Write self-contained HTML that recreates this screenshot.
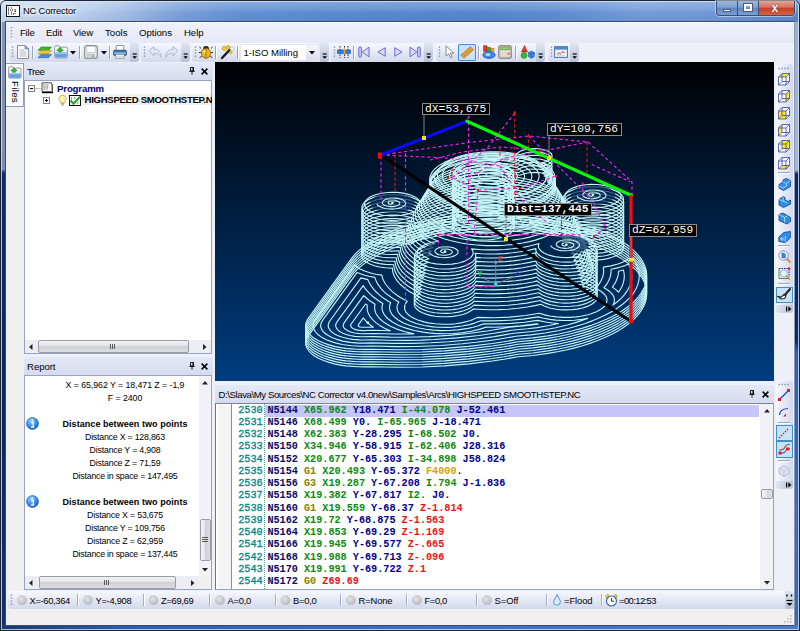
<!DOCTYPE html>
<html><head><meta charset="utf-8"><title>NC Corrector</title>
<style>
*{margin:0;padding:0;box-sizing:border-box}
html,body{width:800px;height:631px;overflow:hidden;background:#27477f}
body{position:relative;font-family:"Liberation Sans",sans-serif;font-size:9.4px;color:#000}
.abs{position:absolute}
.t{position:absolute;white-space:nowrap;display:block}
svg{position:absolute;overflow:visible}
.tb{position:absolute;top:43px;height:19px;border-radius:3px;background:linear-gradient(#f6f8fd 0%,#e6eaf6 45%,#d3d9ec 100%);}
.ov{position:absolute;top:43px;height:19px;width:9px;border-radius:0 3px 3px 0;background:linear-gradient(#dfe4f1,#b9c1d8)}
.sep{position:absolute;top:46px;width:1px;height:13px;background:#9aa3bd;box-shadow:1px 0 0 #fff}
.lbl{background:#000;border:1px solid #8c8c8c;color:#fff;font-family:"Liberation Mono",monospace;font-size:11.3px;line-height:10.5px;padding-left:2px;white-space:nowrap;overflow:hidden;letter-spacing:0.02px}
.code{font-family:"Liberation Mono",monospace;font-weight:bold;font-size:10.2px}
</style></head><body>
<div class="abs" id="frame" style="left:0;top:0;width:800px;height:631px;background:linear-gradient(90deg,#c9daf0 0px,#c1d4ee 70px,#a3bde5 125px,#7a9fda 180px,#6290d4 240px,#5a8ad1 330px,#5686cf 480px,#5f8dd2 560px,#739bd9 640px,#6f98d7 720px,#5a86c8 800px);"></div>
<div class="abs" style="left:0px;top:0px;width:800px;height:22px;background:linear-gradient(rgba(255,255,255,.28) 0,rgba(255,255,255,.10) 45%,rgba(255,255,255,0) 55%,rgba(20,40,90,.06) 100%)"></div><div class="abs" style="left:0px;top:22px;width:6px;height:609px;background:linear-gradient(#7f95bc 0,#7a90b8 147px,#0e2a68 151px,#0b2562 400px,#123170 603px)"></div><div class="abs" style="left:794px;top:22px;width:6px;height:609px;background:linear-gradient(#9fb0cc 0,#a9b7ce 148px,#0c2666 152px,#0c2868 318px,#2f5fb2 330px,#3a6abc 500px,#3566b8 603px)"></div><div class="abs" style="left:0px;top:625px;width:800px;height:6px;background:linear-gradient(90deg,#17376f,#2a5cb0 120px,#3c6cc0 400px,#4a7acc 800px)"></div><div class="abs" style="left:0px;top:0px;width:800px;height:631px;border:1px solid #1d2534;border-radius:6px 6px 0 0"></div><div class="abs" style="left:1px;top:1px;width:798px;height:629px;border:1px solid rgba(214,230,250,.8);border-radius:5px 5px 0 0"></div><div class="abs" style="left:5px;top:21px;width:789.5px;height:604.5px;border:1px solid #3a4a6a;border-right-color:#8a9ab4;background:#f0f0f0"></div><div class="abs" style="left:6px;top:22px;width:787.5px;height:1px;background:#fbfcfe"></div>
<div class="abs" style="left:6px;top:5px;width:14px;height:12px;background:#fff;border:1px solid #111"></div><svg style="left:6px;top:5px" width="14" height="12" viewBox="0 0 14 12"><path d="M2 3h2M5 3h2M2 5h1M4 5h3M2 7h2M5 7h1M2 9h2M5 9h3M9 4v5M9 6h2" stroke="#000" stroke-width="1" fill="none" stroke-dasharray="1 1"/></svg><span class="t" style="left:23.00px;top:5.36px;font-size:9.4px;line-height:11.28px;height:11.28px;color:#000;letter-spacing:-0.197px;text-shadow:0 0 5px #fff,0 0 8px #fff,0 0 3px #fff;">NC Corrector</span><div class="abs" style="left:716px;top:1px;width:79px;height:15px;border:1px solid #3a4f78;border-top:none;border-radius:0 0 4px 4px;background:linear-gradient(#9db7de 0,#7e9fd2 45%,#5f86c4 50%,#7c9ed4 100%);box-shadow:0 0 0 1px rgba(255,255,255,.45)"></div><div class="abs" style="left:737px;top:1px;width:1px;height:14px;background:#3a4f78"></div><div class="abs" style="left:758px;top:1px;width:1px;height:14px;background:#3a4f78"></div><div class="abs" style="left:759px;top:1px;width:35px;height:14px;border-radius:0 0 3px 0;background:linear-gradient(#e2a497 0,#d5705c 45%,#c2402a 50%,#d6623f 100%)"></div><div class="abs" style="left:723px;top:9px;width:8px;height:3px;background:#fff;border:1px solid #4a5a78"></div><div class="abs" style="left:744px;top:4px;width:8px;height:7px;background:transparent;border:2px solid #fff;outline:1px solid #4a5a78"></div><span class="t" style="left:771.50px;top:0.80px;font-size:12px;line-height:14.40px;height:14.40px;color:#fff;font-weight:bold;letter-spacing:2.326px;text-shadow:0 0 1px #433,0 0 1px #433;">x</span>
<div class="abs" style="left:6px;top:23px;width:788px;height:20px;background:linear-gradient(#eef0fa,#e6e9f6)"></div><svg style="left:10px;top:26px" width="3" height="14"><path d="M1.5 1v12" stroke="#8a93ad" stroke-width="1.4" stroke-dasharray="1.3 1.7"/></svg><span class="t" style="left:20.00px;top:27.04px;font-size:9.6px;line-height:11.52px;height:11.52px;color:#000;letter-spacing:-0.242px;">File</span><span class="t" style="left:46.00px;top:27.04px;font-size:9.6px;line-height:11.52px;height:11.52px;color:#000;letter-spacing:-0.136px;">Edit</span><span class="t" style="left:73.00px;top:27.04px;font-size:9.6px;line-height:11.52px;height:11.52px;color:#000;letter-spacing:-0.159px;">View</span><span class="t" style="left:105.00px;top:27.04px;font-size:9.6px;line-height:11.52px;height:11.52px;color:#000;letter-spacing:0.018px;">Tools</span><span class="t" style="left:139.00px;top:27.04px;font-size:9.6px;line-height:11.52px;height:11.52px;color:#000;letter-spacing:-0.012px;">Options</span><span class="t" style="left:184.00px;top:27.04px;font-size:9.6px;line-height:11.52px;height:11.52px;color:#000;letter-spacing:-0.061px;">Help</span>
<div class="abs" style="left:6px;top:43px;width:788px;height:20px;background:linear-gradient(#eef0fa,#eceef8)"></div><div class="tb" style="left:9px;width:130px"></div><div class="ov" style="left:130px"></div><svg style="left:132px;top:53px" width="6" height="8"><path d="M.6 1h4.200" stroke="#000" stroke-width="1.100"/><path d="M.4 3.200h4.600l-2.300 2.600z" fill="#000"/></svg><svg style="left:11px;top:46px" width="3" height="13"><path d="M1.5 0.5v12" stroke="#7f89a6" stroke-width="1.4" stroke-dasharray="1.3 1.7"/></svg><div class="tb" style="left:141px;width:49px"></div><div class="ov" style="left:181px"></div><svg style="left:183px;top:53px" width="6" height="8"><path d="M.6 1h4.200" stroke="#000" stroke-width="1.100"/><path d="M.4 3.200h4.600l-2.300 2.600z" fill="#000"/></svg><svg style="left:143px;top:46px" width="3" height="13"><path d="M1.5 0.5v12" stroke="#7f89a6" stroke-width="1.4" stroke-dasharray="1.3 1.7"/></svg><div class="tb" style="left:192px;width:137px"></div><div class="ov" style="left:320px"></div><svg style="left:322px;top:53px" width="6" height="8"><path d="M.6 1h4.200" stroke="#000" stroke-width="1.100"/><path d="M.4 3.200h4.600l-2.300 2.600z" fill="#000"/></svg><svg style="left:194px;top:46px" width="3" height="13"><path d="M1.5 0.5v12" stroke="#7f89a6" stroke-width="1.4" stroke-dasharray="1.3 1.7"/></svg><div class="tb" style="left:331px;width:102px"></div><div class="ov" style="left:424px"></div><svg style="left:426px;top:53px" width="6" height="8"><path d="M.6 1h4.200" stroke="#000" stroke-width="1.100"/><path d="M.4 3.200h4.600l-2.300 2.600z" fill="#000"/></svg><svg style="left:333px;top:46px" width="3" height="13"><path d="M1.5 0.5v12" stroke="#7f89a6" stroke-width="1.4" stroke-dasharray="1.3 1.7"/></svg><div class="tb" style="left:436px;width:109px"></div><div class="ov" style="left:536px"></div><svg style="left:538px;top:53px" width="6" height="8"><path d="M.6 1h4.200" stroke="#000" stroke-width="1.100"/><path d="M.4 3.200h4.600l-2.300 2.600z" fill="#000"/></svg><svg style="left:438px;top:46px" width="3" height="13"><path d="M1.5 0.5v12" stroke="#7f89a6" stroke-width="1.4" stroke-dasharray="1.3 1.7"/></svg><div class="tb" style="left:548px;width:31px"></div><div class="ov" style="left:570px"></div><svg style="left:572px;top:53px" width="6" height="8"><path d="M.6 1h4.200" stroke="#000" stroke-width="1.100"/><path d="M.4 3.200h4.600l-2.300 2.600z" fill="#000"/></svg><svg style="left:550px;top:46px" width="3" height="13"><path d="M1.5 0.5v12" stroke="#7f89a6" stroke-width="1.4" stroke-dasharray="1.3 1.7"/></svg><div class="sep" style="left:32px"></div><div class="sep" style="left:79px"></div><div class="sep" style="left:109px"></div><div class="sep" style="left:215px"></div><div class="sep" style="left:237px"></div><div class="sep" style="left:353px"></div><div class="sep" style="left:478px"></div><div class="sep" style="left:515px"></div><!-- toolbar icons -->
<svg style="left:17px;top:45px" width="12" height="14" viewBox="0 0 12 14"><path d="M0.5 0.5h7.5l3.5 3.5v9.5h-11z" fill="#fdfdfd" stroke="#8a8e96"/><path d="M8 0.5l3.5 3.5h-3.5z" fill="#6fa8e8" stroke="#4a7fc4" stroke-width=".6"/><path d="M2.5 5h5M2.5 7h7M2.5 9h7M2.5 11h7" stroke="#b4b7be" stroke-width="1"/></svg>
<svg style="left:38px;top:46px" width="14" height="13" viewBox="0 0 14 13"><path d="M3 1h10.5l-3 3.4h-10.5z" fill="#3fb52f" stroke="#1f8a1a" stroke-width=".6"/><path d="M3 4.6h10.5l-3 3.4h-10.5z" fill="#f2c430" stroke="#c78a12" stroke-width=".6"/><path d="M3 8.4h10.5l-3 3.4h-10.5z" fill="#3d8fe6" stroke="#1c5fb8" stroke-width=".6"/></svg>
<svg style="left:54px;top:45px" width="14" height="14" viewBox="0 0 14 14"><path d="M0.6 2.2q0-1.4 1.4-1.4h3.2l1.2 1.4h6q1 0 1 1v8.6q0 1.2-1.2 1.2h-10.4q-1.2 0-1.2-1.2z" fill="#f4f5f7" stroke="#8f949c" stroke-width=".9"/><path d="M1.2 7.5h11.6v4.3q0 .8-.8.8h-10q-.8 0-.8-.8z" fill="#5f9fe2"/><path d="M1.2 7.5h11.6v1.6h-11.6z" fill="#9cc6f2"/><path d="M6 2.2l3.4 3.2h-1.9v1.6h-3v-1.6h-1.9z" fill="#35b52a" stroke="#1a8a18" stroke-width=".5"/></svg>
<svg style="left:70px;top:51px" width="6" height="4"><path d="M0 0h6l-3 3.4z" fill="#000"/></svg>
<svg style="left:84px;top:45px" width="14" height="14" viewBox="0 0 14 14"><rect x=".7" y=".7" width="12.6" height="12.6" rx="2" fill="#e9eaec" stroke="#8e9096" stroke-width="1.2"/><rect x="2.8" y="1.5" width="8.4" height="6" fill="#fbfbfc" stroke="#b9bbc0" stroke-width=".6"/><rect x="3.6" y="9.4" width="6.8" height="3.6" fill="#d2d3d7" stroke="#a7a9ae" stroke-width=".5"/><rect x="8" y="10.2" width="1.4" height="2.2" fill="#8e9096"/></svg>
<svg style="left:101px;top:51px" width="6" height="4"><path d="M0 0h6l-3 3.4z" fill="#000"/></svg>
<svg style="left:113px;top:45px" width="14" height="14" viewBox="0 0 14 14"><rect x="3.2" y=".6" width="7.6" height="5.4" fill="#fff" stroke="#7e838c" stroke-width=".8"/><rect x=".6" y="5.2" width="12.8" height="5.4" rx="1.4" fill="#4a6fae" stroke="#2b4676" stroke-width=".8"/><rect x="1.2" y="7.4" width="11.6" height="1.5" fill="#7fd0f4"/><rect x="2.8" y="9.2" width="8.4" height="4" fill="#fdfdfd" stroke="#7e838c" stroke-width=".8"/><path d="M4 11.2h6" stroke="#b5b8be" stroke-width=".8"/></svg>
<!-- undo / redo (disabled) -->
<svg style="left:148px;top:46px" width="14" height="12" viewBox="0 0 14 12"><path d="M1 4.6l5-4v2.6q6.6.2 7.2 8q-2.2-4-7.2-3.8v2.6z" fill="#e4e8f2" stroke="#a9b1c8" stroke-width=".9" stroke-linejoin="round"/></svg>
<svg style="left:165px;top:46px" width="14" height="12" viewBox="0 0 14 12"><path d="M13 4.6l-5-4v2.6q-6.600.2-7.200 8q2.200-4 7.200-3.800v2.600z" fill="#e4e8f2" stroke="#a9b1c8" stroke-width=".9" stroke-linejoin="round"/></svg>
<!-- bug -->
<svg style="left:199px;top:45px" width="14" height="14" viewBox="0 0 14 14"><path d="M2.200 3.500l-1.800-1.600M11.800 3.500l1.800-1.600M1.800 7.500h-1.800M12.200 7.500h1.800M2.600 11l-1.800 1.800M11.400 11l1.800 1.800" stroke="#222" stroke-width="1"/><ellipse cx="7" cy="3.300" rx="2.800" ry="2.300" fill="#2a2418"/><ellipse cx="7" cy="8.300" rx="4.600" ry="5" fill="#f0b818" stroke="#7a5608" stroke-width=".8"/><ellipse cx="5.600" cy="6.600" rx="1.700" ry="1.600" fill="#fbe58a"/><path d="M7 3.600v9.600" stroke="#7a5608" stroke-width=".7"/></svg>
<!-- keys/wand -->
<svg style="left:220px;top:45px" width="15" height="14" viewBox="0 0 15 14"><path d="M2 13l7.500-8" stroke="#1a1a1a" stroke-width="2.400" stroke-linecap="round"/><circle cx="4.400" cy="3.400" r="2.200" fill="#f6d21c" stroke="#b58c08" stroke-width=".6"/><circle cx="8.300" cy="2.300" r="1.700" fill="#f6d21c" stroke="#b58c08" stroke-width=".6"/><circle cx="12" cy="3.800" r="1.900" fill="#fbfbfb" stroke="#9a9a9a" stroke-width=".6"/><circle cx="10.800" cy="7.600" r="1.400" fill="#f6d21c" stroke="#b58c08" stroke-width=".5"/></svg>
<!-- combobox -->
<div class="abs" style="left:240px;top:44px;width:80px;height:17px;background:#fff;border:1px solid #e3e6f0;"></div>
<div class="abs" style="left:306px;top:45px;width:13px;height:15px;background:linear-gradient(#f4f6fc,#d9deee);"></div>
<svg style="left:309px;top:51px" width="6" height="4"><path d="M0 0h6l-3 3.400z" fill="#000"/></svg>
<!-- simulate icon -->
<svg style="left:337px;top:45px" width="14" height="14" viewBox="0 0 14 14"><path d="M3 1v12M7.500 1v12M11 1v12" stroke="#222" stroke-width="1" stroke-dasharray="1.500 1.300"/><rect x=".5" y="5" width="13" height="3.400" fill="#2c7fe0" stroke="#134a9a" stroke-width=".6"/><rect x="6.600" y="4" width="1.800" height="5.400" fill="#f4a018"/></svg>
<!-- nav arrows -->
<svg style="left:358px;top:46px" width="12" height="12" viewBox="0 0 12 12"><rect x=".8" y="1" width="2.600" height="10" rx="1" fill="#cfd0fb" stroke="#5b5bd8" stroke-width=".9"/><path d="M11 1.200v9.600l-6.800-4.800z" fill="#dcdcfc" stroke="#5b5bd8" stroke-width=".9" stroke-linejoin="round"/></svg>
<svg style="left:377px;top:47px" width="9" height="10" viewBox="0 0 9 10"><path d="M8.200 .8v8.400l-7.200-4.200z" fill="#dcdcfc" stroke="#5b5bd8" stroke-width=".9" stroke-linejoin="round"/></svg>
<svg style="left:394px;top:47px" width="9" height="10" viewBox="0 0 9 10"><path d="M.8 .8v8.400l7.200-4.200z" fill="#dcdcfc" stroke="#5b5bd8" stroke-width=".9" stroke-linejoin="round"/></svg>
<svg style="left:409px;top:46px" width="12" height="12" viewBox="0 0 12 12"><rect x="8.600" y="1" width="2.600" height="10" rx="1" fill="#cfd0fb" stroke="#5b5bd8" stroke-width=".9"/><path d="M1 1.200v9.600l6.800-4.800z" fill="#dcdcfc" stroke="#5b5bd8" stroke-width=".9" stroke-linejoin="round"/></svg>
<!-- cursor -->
<svg style="left:445px;top:45px" width="10" height="14" viewBox="0 0 10 14"><path d="M1 .8v10.400l2.600-2.400l1.900 4l1.700-.8l-1.900-3.900h3.500z" fill="#fdfdfd" stroke="#7d7d7d" stroke-width=".9" stroke-linejoin="round"/></svg>
<!-- ruler (selected) -->
<div class="abs" style="left:458px;top:44px;width:18px;height:17px;background:#c9e2f8;border:1px solid #3f8fd8;border-radius:1px"></div>
<svg style="left:460px;top:46px" width="14" height="13" viewBox="0 0 14 13"><path d="M.8 9.200l9.600-8.400l3 3l-9.600 8.400z" fill="#e9a93a" stroke="#a56a12" stroke-width=".8"/><path d="M3.400 8.600l1.300 1.300M5.400 6.900l1.300 1.300M7.400 5.200l1.300 1.300M9.400 3.500l1.300 1.300" stroke="#7d4c08" stroke-width=".7"/></svg>
<!-- machine icon -->
<svg style="left:482px;top:45px" width="14" height="14" viewBox="0 0 14 14"><rect x="1.600" y=".8" width="3.400" height="5.600" fill="#d83a2a" stroke="#8a1a10" stroke-width=".5"/><rect x="5.600" y="2.400" width="3" height="4" fill="#3aa32e" stroke="#1c6a18" stroke-width=".5"/><rect x="9" y="3.400" width="3" height="3" fill="#f0b020" stroke="#9a6a08" stroke-width=".5"/><ellipse cx="7" cy="10" rx="6.200" ry="3.400" fill="#3b8be4" stroke="#174f9e" stroke-width=".7"/><ellipse cx="6" cy="9.600" rx="2.600" ry="1.300" fill="#bfe0fb"/></svg>
<!-- calculator -->
<svg style="left:498px;top:45px" width="14" height="14" viewBox="0 0 14 14"><rect x=".7" y=".7" width="12.600" height="12.600" rx="1.200" fill="#c9c2b8" stroke="#7c756a" stroke-width=".9"/><rect x="2.200" y="2" width="9.600" height="2.600" fill="#8ed06a" stroke="#4e8a34" stroke-width=".4"/><path d="M2.500 6.500h9M2.500 8.700h9M2.500 10.900h9" stroke="#f6f3ee" stroke-width="1.400" stroke-dasharray="1.800 .7"/><path d="M9.700 8.700h1.800" stroke="#d8402c" stroke-width="1.400"/></svg>
<!-- shapes -->
<svg style="left:520px;top:45px" width="15" height="14" viewBox="0 0 15 14"><path d="M4.500 .6l3 6.400h-6z" fill="#e23a22" stroke="#8a1a10" stroke-width=".5"/><circle cx="4" cy="10.400" r="3" fill="#3cb52c" stroke="#1a7a16" stroke-width=".5"/><path d="M8.400 7.600l3-1.400l3 1.400v4l-3 1.600l-3-1.600z" fill="#3b8be4" stroke="#174f9e" stroke-width=".6"/><path d="M8.400 7.600l3 1.400l3-1.400M11.400 9v4.200" stroke="#174f9e" stroke-width=".5" fill="none"/></svg>
<!-- window icon -->
<svg style="left:554px;top:46px" width="14" height="12" viewBox="0 0 14 12"><rect x=".6" y=".6" width="12.800" height="10.800" fill="#eef3fa" stroke="#4a74ae" stroke-width="1"/><rect x="1" y="1" width="12" height="2.600" fill="#4a8ad8"/><path d="M3 8.400l2-1.600l1.400 1l2.400-2.200l2 1.200" stroke="#d83a2a" stroke-width="1" fill="none"/><path d="M3 9.800h8" stroke="#9ab0cc" stroke-width=".6"/></svg>
<span class="t" style="left:243.50px;top:46.54px;font-size:9.6px;line-height:11.52px;height:11.52px;color:#000;letter-spacing:-0.035px;">1-ISO Milling</span>
<div class="abs" style="left:24px;top:63px;width:769.5px;height:528px;background:#edeff9"></div><!-- left dock -->
<div class="abs" style="left:6px;top:63px;width:18px;height:44px;background:#fbfcfe;border:1px solid #8e9bbc;border-left:none;border-radius:0 0 0 0"></div>
<div class="abs" style="left:6px;top:107px;width:18px;height:247px;background:#f0f0f0"></div>
<svg style="left:8px;top:66px" width="14" height="13" viewBox="0 0 14 13"><path d="M.6 2q0-1.300 1.300-1.300h3l1.200 1.300h6q1 0 1 1v8q0 1.200-1.200 1.200h-10.100q-1.200 0-1.200-1.200z" fill="#f4f5f7" stroke="#8f949c" stroke-width=".9"/><path d="M1.200 7h11.600v4q0 .8-.8.800h-10q-.8 0-.8-.8z" fill="#5f9fe2"/><path d="M1.200 7h11.600v1.500h-11.600z" fill="#9cc6f2"/><path d="M6 1.800l3.300 3h-1.800v1.500h-3v-1.500h-1.800z" fill="#35b52a" stroke="#1a8a18" stroke-width=".5"/></svg>
<span class="t" style="left:10px;top:81px;font-size:9.6px;line-height:11px;width:11px;writing-mode:vertical-rl;letter-spacing:0.35px">Files</span>
<div class="abs" style="left:24px;top:63px;width:189px;height:291px;background:#eceef8"></div>
<div class="abs" style="left:24px;top:63px;width:189px;height:17px;background:linear-gradient(#e4e8f6,#d6dbef)"></div>
<span class="t" style="left:27.00px;top:65.74px;font-size:9.6px;line-height:11.52px;height:11.52px;color:#000;letter-spacing:-0.471px;">Tree</span>
<svg style="left:189px;top:67px" width="6" height="8" viewBox="0 0 6 8"><path d="M1.500 .5h3v3.500h-3zM.3 4.300h5.400M3 4.300v3.400M4 .5v3.500" stroke="#000" stroke-width=".9" fill="none"/></svg>
<svg style="left:201px;top:68px" width="7" height="7" viewBox="0 0 7 7"><path d="M.6 .6l5.800 5.800M6.400 .6l-5.800 5.800" stroke="#000" stroke-width="1.500"/></svg>
<div class="abs" style="left:24px;top:80px;width:188px;height:274px;background:#fff;border:1px solid #98a3bf"></div>
<div class="abs" style="left:82px;top:94px;width:129px;height:11px;background:#f0f0f0"></div>
<svg style="left:28px;top:82px" width="60" height="26" viewBox="0 0 60 26"><path d="M7.500 6.500h5M19 19.500h4" stroke="#808080" stroke-width="1" stroke-dasharray="1 1"/><rect x=".5" y="3.500" width="6" height="6" fill="#fff" stroke="#848484"/><path d="M2 6.500h3" stroke="#000"/><rect x="15.500" y="15.500" width="6" height="6" fill="#fff" stroke="#848484"/><path d="M17 18.500h3M18.500 17v3" stroke="#000"/><path d="M14 .8h9.500v9h-9.500z" fill="#fff" stroke="#222" stroke-width=".8"/><path d="M23.500 1.500q1.800 .6 1.200 3.500l-.6 5.500h-1" fill="#ddd" stroke="#222" stroke-width=".8"/><path d="M14 10.500h11" stroke="#000" stroke-width="1.400"/><path d="M15.500 3h2M18.500 3h2M15.500 5h1M17.500 5h3M15.500 7h2M18.500 7h1" stroke="#000" stroke-width=".9" stroke-dasharray="1 .8"/><path d="M34.500 13.300c2.200 0 3.600 1.600 3.600 3.500c0 1.700-1.500 2.500-1.700 4.200h-3.800c-.2-1.700-1.700-2.500-1.700-4.200c0-1.900 1.400-3.500 3.600-3.500z" fill="#fdf3a8" stroke="#b89a2a" stroke-width=".7"/><path d="M33 21.800h3M33.300 23h2.400" stroke="#8a8a8a" stroke-width=".9"/><rect x="41.500" y="13.500" width="11" height="10" fill="#fff" stroke="#111" stroke-width="1"/><path d="M43 16h2M46 16h2M43 18h1M49 21h2" stroke="#000" stroke-width=".8" stroke-dasharray="1 .8"/><path d="M42.500 18.500l3 3.200l6.500-7" stroke="#1fae1f" stroke-width="2.200" fill="none"/></svg>
<span class="t" style="left:57.00px;top:82.54px;font-size:9.6px;line-height:11.52px;height:11.52px;color:#00007c;font-weight:bold;letter-spacing:-0.127px;">Programm</span>
<div class="abs" style="left:82px;top:94px;width:129.500px;height:12px;overflow:hidden"><span class="t" style="left:2.60px;top:0.24px;font-size:9.6px;line-height:11.52px;height:11.52px;color:#000;font-weight:bold;letter-spacing:-0.314px;">HIGHSPEED SMOOTHSTEP.NC</span></div>
<div class="abs" style="left:25px;top:340px;width:186px;height:13px;background:#eceef4"></div>
<div class="abs" style="left:38px;top:340px;width:151px;height:13px;background:linear-gradient(#f3f3f5 0,#e3e4e8 45%,#cfd1d7 50%,#dcdde2 100%);border:1px solid #9a9ca4;border-radius:2px"></div>
<svg style="left:110px;top:344px" width="6" height="5"><path d="M.5 0v5M2.500 0v5M4.500 0v5" stroke="#4a4a4a" stroke-width=".9" shape-rendering="crispEdges"/></svg>
<svg style="left:29px;top:343.5px" width="4" height="6"><path d="M3.500 0v6l-3.500-3z" fill="#222"/></svg>
<svg style="left:203px;top:343.5px" width="4" height="6"><path d="M0 0v6l3.500-3z" fill="#222"/></svg>
<div class="abs" style="left:24px;top:357px;width:189px;height:233px;background:#eceef8"></div>
<div class="abs" style="left:24px;top:357px;width:189px;height:18px;background:linear-gradient(#e4e8f6,#d6dbef)"></div>
<span class="t" style="left:27.00px;top:360.74px;font-size:9.6px;line-height:11.52px;height:11.52px;color:#000;letter-spacing:-0.052px;">Report</span>
<svg style="left:189px;top:362px" width="6" height="8" viewBox="0 0 6 8"><path d="M1.500 .5h3v3.500h-3zM.3 4.300h5.400M3 4.300v3.400M4 .5v3.500" stroke="#000" stroke-width=".9" fill="none"/></svg>
<svg style="left:201px;top:363px" width="7" height="7" viewBox="0 0 7 7"><path d="M.6 .6l5.800 5.800M6.400 .6l-5.800 5.800" stroke="#000" stroke-width="1.500"/></svg>
<div class="abs" style="left:24px;top:375px;width:188px;height:215px;background:#fff;border:1px solid #98a3bf"></div>
<span class="t" style="left:65.50px;top:380.02px;font-size:8.8px;line-height:10.56px;height:10.56px;color:#000;letter-spacing:-0.059px;">X = 65,962 Y = 18,471 Z = -1,9</span>
<span class="t" style="left:107.75px;top:393.02px;font-size:8.8px;line-height:10.56px;height:10.56px;color:#000;letter-spacing:-0.060px;">F = 2400</span>
<span class="t" style="left:62.50px;top:418.60px;font-size:9.0px;line-height:10.80px;height:10.80px;color:#000;font-weight:bold;letter-spacing:0.055px;">Distance between two points</span>
<span class="t" style="left:85.00px;top:432.02px;font-size:8.8px;line-height:10.56px;height:10.56px;color:#000;letter-spacing:-0.220px;">Distance X = 128,863</span>
<span class="t" style="left:89.50px;top:445.02px;font-size:8.8px;line-height:10.56px;height:10.56px;color:#000;letter-spacing:-0.183px;">Distance Y = 4,908</span>
<span class="t" style="left:89.50px;top:458.02px;font-size:8.8px;line-height:10.56px;height:10.56px;color:#000;letter-spacing:-0.173px;">Distance Z = 71,59</span>
<span class="t" style="left:72.50px;top:471.12px;font-size:8.8px;line-height:10.56px;height:10.56px;color:#000;letter-spacing:-0.233px;">Distance in space = 147,495</span>
<span class="t" style="left:62.50px;top:496.60px;font-size:9.0px;line-height:10.80px;height:10.80px;color:#000;font-weight:bold;letter-spacing:0.055px;">Distance between two points</span>
<span class="t" style="left:87.00px;top:509.92px;font-size:8.8px;line-height:10.56px;height:10.56px;color:#000;letter-spacing:-0.184px;">Distance X = 53,675</span>
<span class="t" style="left:85.00px;top:522.92px;font-size:8.8px;line-height:10.56px;height:10.56px;color:#000;letter-spacing:-0.204px;">Distance Y = 109,756</span>
<span class="t" style="left:87.00px;top:535.92px;font-size:8.8px;line-height:10.56px;height:10.56px;color:#000;letter-spacing:-0.158px;">Distance Z = 62,959</span>
<span class="t" style="left:72.50px;top:549.12px;font-size:8.8px;line-height:10.56px;height:10.56px;color:#000;letter-spacing:-0.233px;">Distance in space = 137,445</span>
<svg style="left:26px;top:417.0px" width="13" height="13" viewBox="0 0 13 13"><defs><radialGradient id="ig423" cx=".4" cy=".3" r=".8"><stop offset="0" stop-color="#9fd0fb"/><stop offset=".6" stop-color="#2f86e6"/><stop offset="1" stop-color="#1659b8"/></radialGradient></defs><circle cx="6.500" cy="6.500" r="6" fill="url(#ig423)" stroke="#1a56a8" stroke-width=".6"/><circle cx="6.500" cy="3.600" r="1" fill="#fff"/><path d="M5.300 5.600h2v4.200M5 10h3.200" stroke="#fff" stroke-width="1.300" fill="none"/></svg>
<svg style="left:26px;top:495.0px" width="13" height="13" viewBox="0 0 13 13"><defs><radialGradient id="ig501" cx=".4" cy=".3" r=".8"><stop offset="0" stop-color="#9fd0fb"/><stop offset=".6" stop-color="#2f86e6"/><stop offset="1" stop-color="#1659b8"/></radialGradient></defs><circle cx="6.500" cy="6.500" r="6" fill="url(#ig501)" stroke="#1a56a8" stroke-width=".6"/><circle cx="6.500" cy="3.600" r="1" fill="#fff"/><path d="M5.300 5.600h2v4.200M5 10h3.200" stroke="#fff" stroke-width="1.300" fill="none"/></svg>
<div class="abs" style="left:199px;top:376px;width:12px;height:201px;background:#f1f2f6"></div>
<svg style="left:202px;top:381px" width="6" height="4"><path d="M0 3.500h6l-3-3.500z" fill="#222"/></svg>
<svg style="left:202px;top:568px" width="6" height="4"><path d="M0 0h6l-3 3.500z" fill="#222"/></svg>
<div class="abs" style="left:199.5px;top:519px;width:11px;height:42px;background:linear-gradient(90deg,#f3f3f5 0,#e3e4e8 45%,#cfd1d7 50%,#dcdde2 100%);border:1px solid #9a9ca4;border-radius:2px"></div>
<svg style="left:202px;top:537px" width="6" height="6"><path d="M0 .5h6M0 2.500h6M0 4.500h6" stroke="#4a4a4a" stroke-width=".9" shape-rendering="crispEdges"/></svg>
<div class="abs" style="left:25px;top:576px;width:174px;height:13px;background:#eceef4"></div>
<div class="abs" style="left:39px;top:576px;width:137px;height:13px;background:linear-gradient(#f3f3f5 0,#e3e4e8 45%,#cfd1d7 50%,#dcdde2 100%);border:1px solid #9a9ca4;border-radius:2px"></div>
<svg style="left:104px;top:580px" width="6" height="5"><path d="M.5 0v5M2.500 0v5M4.500 0v5" stroke="#4a4a4a" stroke-width=".9" shape-rendering="crispEdges"/></svg>
<svg style="left:29px;top:579.5px" width="4" height="6"><path d="M3.500 0v6l-3.500-3z" fill="#222"/></svg>
<svg style="left:191px;top:579.5px" width="4" height="6"><path d="M0 0v6l3.500-3z" fill="#222"/></svg>
<div class="abs" style="left:199px;top:576px;width:12px;height:13px;background:#f0f0f0"></div>
<!-- 3D view -->
<div class="abs" style="left:215px;top:62px;width:559px;height:319px;overflow:hidden;background:linear-gradient(#000103,#003d80)">
<svg style="left:-215px;top:-62px" width="800" height="631" viewBox="0 0 800 631">
<g fill="none" stroke="#c6f7f9" stroke-width="1.12" stroke-linejoin="round">
<path d="M373 349.2l-8.8 0.2l-7.1 -0.1l-11 -0.9l-3.9 -0.5l-6.8 -1.3l-6.3 -1.7l-5.5 -1.9l-5.1 -2.3l-4.3 -2.5l-2.1 -1.5l-3 -2.9l-2.1 -3l-1.1 -2.9l-0.2 -1.8l0 -1.6l0.3 -1.5l1.2 -2.9l1.1 -1.7l43.3 -60l2.6 -3.2l2.9 -3.1l5.2 -4.5l5.8 -4.3l4.5 -2.8l7.1 -3.9l5.4 -2.6l8.2 -3.5l6.1 -2.2l9.5 -3.1l9.8 -2.7l7 -1.6l10.6 -2.2l7.5 -1.3l7.5 -1.1l11.3 -1.3l7.9 -0.7l11.6 -0.6l8 -0.3l11.7 0l15.9 0.5l11.5 0.9l7.8 0.8l11.1 1.5l7.5 1.2l10.6 2.1l7 1.6l9.8 2.7l6.5 2l8.9 3.1l5.7 2.4l7.8 3.6l5 2.6l6.6 4l4.2 2.9l5.2 4.4l3.2 3.1l3.9 4.6l2.2 3.2l2.4 4.8l1.1 3.3l0.8 3.4l0.2 4.9l-0.3 3.4l-1.2 4.8l-1.4 3.4l-2.8 4.8l-2.4 3.2l-4.2 4.7l-5.2 4.5l-5.8 4.2l-4.5 2.9l-7.1 3.9l-5.4 2.5l-8.2 3.5l-6.1 2.3l-9.5 3l-9.8 2.7l-7 1.7l-7.1 1.5l-10.8 1.9l-15.1 2l-14.9 1.4l-14 2.5l-11.6 1.7l-23.7 2.9l-24.3 2l-22.1 1.1l-24.6 0.3z"/>
<path d="M373 351.7l-8.8 0.2l-7.1 -0.1l-11 -0.9l-3.9 -0.5l-6.8 -1.3l-6.3 -1.7l-5.5 -1.9l-5.1 -2.3l-4.3 -2.5l-2.1 -1.5l-3 -2.9l-2.1 -3l-1.1 -2.9l-0.2 -1.8l0 -1.6l0.3 -1.5l1.2 -2.9l1.1 -1.7l43.3 -60l2.6 -3.2l2.9 -3.1l5.2 -4.5l5.8 -4.3l4.5 -2.8l7.1 -3.9l5.4 -2.6l8.2 -3.5l6.1 -2.2l9.5 -3.1l9.8 -2.7l7 -1.6l10.6 -2.2l7.5 -1.3l7.5 -1.1l11.3 -1.3l7.9 -0.7l11.6 -0.6l8 -0.3l11.7 0l15.9 0.5l11.5 0.9l7.8 0.8l11.1 1.5l7.5 1.2l10.6 2.1l7 1.6l9.8 2.7l6.5 2l8.9 3.1l5.6 2.3l5.5 2.5l7.3 3.8l4.7 2.7l6.1 4.2l3.7 3l4.8 4.4l2.7 3.2l3.3 4.7l1.8 3.3l1.8 4.8l0.8 3.4l0.2 4.9l-0.3 3.4l-1.2 4.8l-1.4 3.4l-2.8 4.8l-2.4 3.2l-4.2 4.7l-5.2 4.5l-5.8 4.2l-4.5 2.9l-7.1 3.9l-5.4 2.5l-8.2 3.5l-6.1 2.3l-9.5 3l-9.8 2.7l-7 1.7l-7.1 1.5l-10.8 1.9l-15.1 2l-14.9 1.4l-14 2.5l-11.6 1.7l-23.7 2.9l-24.3 2l-22.1 1.1l-24.6 0.3z"/>
<path d="M373 354.2l-8.8 0.2l-7.1 -0.1l-11 -0.9l-3.9 -0.5l-6.8 -1.3l-6.3 -1.7l-5.5 -1.9l-5.1 -2.3l-4.3 -2.5l-2.1 -1.5l-3 -2.9l-2.1 -3l-1.1 -2.9l-0.2 -1.8l0 -1.5l0.3 -1.6l1.2 -2.9l1.1 -1.7l43.3 -60l2.6 -3.2l2.9 -3.1l5.2 -4.5l5.8 -4.2l4.5 -2.9l7.1 -3.9l5.4 -2.6l8.2 -3.5l6.1 -2.2l9.5 -3.1l9.8 -2.7l7 -1.6l10.6 -2.2l7.5 -1.3l7.5 -1.1l11.3 -1.3l7.9 -0.6l11.6 -0.7l8 -0.3l11.7 0l15.9 0.5l11.5 0.9l7.8 0.8l11.1 1.5l7.5 1.2l10.6 2.1l7 1.6l9.8 2.7l6.5 2l8.9 3.1l5.6 2.3l5.5 2.5l7.3 3.8l4.7 2.7l6.1 4.2l3.7 3l4.8 4.4l2.7 3.2l3.3 4.7l1.8 3.3l1.8 4.8l0.8 3.4l0.2 4.9l-0.3 3.4l-1.2 4.8l-1.4 3.4l-2.8 4.8l-2.4 3.2l-4.2 4.7l-5.2 4.5l-5.8 4.2l-4.5 2.9l-7.1 3.9l-5.4 2.5l-8.2 3.5l-6.1 2.3l-9.5 3l-9.8 2.7l-7 1.7l-7.1 1.5l-10.8 1.9l-15.1 2l-14.9 1.4l-14 2.5l-11.6 1.7l-23.7 2.9l-24.3 2l-22.1 1.1l-24.6 0.3z"/>
<path d="M373 356.7l-8.8 0.2l-7.1 -0.1l-11 -0.9l-3.9 -0.5l-6.8 -1.3l-6.3 -1.7l-5.5 -1.9l-5.1 -2.3l-4.3 -2.5l-2.1 -1.5l-3 -2.9l-2.1 -3l-1.1 -2.9l-0.2 -1.8l0 -1.5l0.3 -1.6l1.2 -2.9l1.1 -1.7l43.3 -60l2.6 -3.2l2.9 -3.1l5.2 -4.5l5.8 -4.2l4.5 -2.9l7.1 -3.9l5.4 -2.6l8.2 -3.5l6.1 -2.2l9.5 -3.1l9.8 -2.7l7 -1.6l10.6 -2.2l7.5 -1.3l7.5 -1.1l11.3 -1.3l7.9 -0.6l11.6 -0.7l8 -0.3l11.7 0l15.9 0.5l11.5 0.9l7.8 0.8l11.1 1.5l7.5 1.2l10.6 2.1l7 1.6l9.8 2.7l6.5 2l8.9 3.1l5.6 2.3l5.5 2.5l7.3 3.8l4.7 2.7l6.1 4.2l3.7 3l4.8 4.4l2.7 3.2l3.3 4.7l1.8 3.3l1.8 4.8l0.8 3.4l0.2 4.9l-0.3 3.4l-1.2 4.9l-1.4 3.3l-2.8 4.8l-2.4 3.2l-4.2 4.7l-5.2 4.5l-5.8 4.2l-4.5 2.9l-7.1 3.9l-5.4 2.5l-8.2 3.5l-6.1 2.3l-9.5 3l-9.8 2.7l-7 1.7l-7.1 1.5l-10.8 1.9l-15.1 2l-14.9 1.4l-14 2.5l-11.6 1.7l-23.7 2.9l-24.3 2l-22.1 1.1l-24.6 0.3z"/>
<path d="M373 359.2l-8.8 0.2l-7.1 -0.1l-11 -0.9l-3.9 -0.5l-6.8 -1.3l-6.3 -1.7l-5.5 -1.9l-5.1 -2.3l-4.3 -2.5l-2.1 -1.5l-3 -2.9l-2.1 -3l-1.1 -2.9l-0.2 -1.8l0 -1.5l0.3 -1.6l1.2 -2.9l1.1 -1.7l43.3 -60l2.6 -3.2l2.9 -3.1l5.2 -4.5l5.8 -4.2l4.5 -2.9l7.1 -3.9l5.4 -2.6l8.2 -3.4l6.1 -2.3l9.5 -3.1l9.8 -2.7l7 -1.6l10.6 -2.2l7.5 -1.3l7.5 -1.1l11.3 -1.3l7.9 -0.6l11.6 -0.7l8 -0.3l11.7 0l15.9 0.5l11.5 0.9l7.8 0.8l11.1 1.5l7.5 1.2l10.6 2.1l7 1.6l9.8 2.7l6.5 2l8.9 3.1l5.6 2.3l5.5 2.5l7.3 3.8l4.7 2.7l6.1 4.2l3.7 3l4.8 4.4l2.7 3.2l3.3 4.7l1.8 3.3l1.8 4.8l0.8 3.4l0.2 4.9l-0.3 3.4l-1.2 4.9l-1.4 3.3l-2.8 4.8l-2.4 3.2l-4.2 4.7l-5.2 4.5l-5.8 4.2l-4.5 2.9l-7.1 3.9l-5.4 2.5l-8.2 3.5l-6.1 2.3l-9.5 3l-9.8 2.8l-7 1.6l-7.1 1.5l-10.8 1.9l-15.1 2l-14.9 1.4l-14 2.5l-11.6 1.7l-23.7 2.9l-24.3 2l-22.1 1.1l-24.6 0.3z"/>
<path d="M373 361.7l-8.8 0.2l-7.1 -0.1l-11 -0.9l-3.9 -0.5l-6.8 -1.3l-6.3 -1.7l-5.5 -1.9l-5.1 -2.3l-4.3 -2.5l-2.1 -1.5l-3 -2.9l-2.1 -3l-1.1 -2.9l-0.2 -1.8l0 -1.5l0.3 -1.6l1.2 -2.9l1.1 -1.7l43.3 -60l2.6 -3.2l2.9 -3.1l5.2 -4.5l5.8 -4.2l4.5 -2.9l7.1 -3.9l5.4 -2.6l8.2 -3.4l6.1 -2.3l9.5 -3.1l9.8 -2.7l7 -1.6l10.6 -2.2l7.5 -1.3l7.5 -1.1l11.3 -1.3l7.9 -0.6l11.6 -0.7l8 -0.3l11.7 0l15.9 0.5l11.5 0.9l7.8 0.8l11.1 1.5l7.5 1.2l10.6 2.1l7 1.6l9.8 2.7l6.5 2l8.9 3.1l5.6 2.3l5.5 2.5l7.3 3.8l4.7 2.7l6.1 4.2l3.7 3l4.8 4.4l2.7 3.2l3.3 4.7l1.8 3.3l1.8 4.8l0.8 3.4l0.2 4.9l-0.3 3.4l-1.2 4.9l-1.4 3.3l-2.8 4.8l-2.4 3.2l-4.2 4.7l-5.2 4.5l-5.8 4.2l-4.5 2.9l-7.1 3.9l-5.4 2.5l-8.2 3.5l-6.1 2.3l-9.5 3.1l-9.8 2.7l-7 1.6l-7.1 1.5l-10.8 1.9l-15.1 2.1l-14.9 1.3l-14 2.5l-11.6 1.7l-23.7 2.9l-24.3 2l-22.1 1.1l-24.6 0.3z"/>
<path d="M373 364.2l-8.8 0.2l-7.1 -0.1l-11 -0.9l-3.9 -0.5l-6.8 -1.3l-6.3 -1.7l-5.5 -1.9l-5.1 -2.3l-4.3 -2.5l-2.1 -1.5l-3 -2.9l-2.1 -3l-1.1 -2.9l-0.2 -1.8l0 -1.5l0.3 -1.6l1.2 -2.9l1.1 -1.7l43.3 -60l2.6 -3.2l2.9 -3.1l5.2 -4.5l5.8 -4.2l4.5 -2.9l7.1 -3.9l5.4 -2.6l8.2 -3.4l6.1 -2.3l9.5 -3.1l9.8 -2.7l7 -1.6l10.6 -2.2l7.5 -1.3l7.5 -1.1l11.3 -1.3l7.9 -0.6l11.6 -0.7l8 -0.3l11.7 0l15.9 0.5l11.5 0.9l7.8 0.8l11.1 1.5l7.5 1.2l10.6 2.1l7 1.6l9.8 2.7l6.5 2l8.9 3.1l5.6 2.3l5.5 2.5l7.3 3.8l4.7 2.7l6.1 4.2l3.7 3l4.8 4.4l2.7 3.2l3.3 4.7l1.8 3.3l1.8 4.8l0.8 3.4l0.2 4.9l-0.3 3.4l-1.2 4.9l-1.4 3.3l-2.8 4.8l-2.4 3.2l-4.2 4.7l-5.2 4.5l-5.8 4.2l-4.5 2.9l-7.1 3.9l-5.4 2.5l-8.2 3.5l-6.1 2.3l-9.5 3.1l-9.8 2.7l-7 1.6l-7.1 1.5l-10.8 1.9l-15.1 2.1l-14.9 1.3l-14 2.5l-11.6 1.7l-23.7 2.9l-24.3 2l-22.1 1.1l-24.6 0.3z"/>
<path d="M373 366.7l-8.8 0.2l-7.1 -0.1l-11 -0.9l-3.9 -0.5l-6.8 -1.3l-6.3 -1.7l-5.5 -1.9l-5.1 -2.3l-4.3 -2.5l-2.1 -1.5l-3 -2.9l-2.1 -3l-1.1 -2.9l-0.2 -1.8l0 -1.5l0.3 -1.6l1.2 -2.9l1.1 -1.7l43.3 -60l2.6 -3.2l2.9 -3.1l5.2 -4.5l5.8 -4.2l4.5 -2.9l7.1 -3.9l5.4 -2.6l8.2 -3.4l6.1 -2.3l9.5 -3.1l9.8 -2.7l7 -1.6l10.6 -2.2l7.5 -1.3l7.5 -1.1l11.3 -1.3l7.9 -0.6l11.6 -0.7l8 -0.3l11.7 0l15.9 0.6l11.5 0.8l7.8 0.8l11.1 1.5l7.5 1.2l10.6 2.1l7 1.6l9.8 2.7l6.5 2l8.9 3.1l5.6 2.3l5.5 2.5l7.3 3.8l4.7 2.7l6.1 4.2l3.7 3l4.8 4.4l2.7 3.2l3.3 4.7l1.8 3.3l1.8 4.8l0.8 3.4l0.2 4.9l-0.3 3.4l-1.2 4.9l-1.4 3.3l-2.8 4.8l-2.4 3.2l-4.2 4.7l-5.2 4.5l-5.8 4.2l-4.5 2.9l-7.1 3.9l-5.4 2.5l-8.2 3.5l-6.1 2.3l-9.5 3.1l-9.8 2.7l-7 1.6l-7.1 1.5l-10.8 1.9l-15.1 2.1l-14.9 1.3l-14 2.5l-11.6 1.7l-23.7 2.9l-24.3 2l-22.1 1.1l-24.6 0.3z"/>
<path d="M592.8 290.1l2.6 2.3l0.9 1.2l0.6 1.3l0.3 1.2l0.1 1.3l-0.3 1.3l-0.6 1.2l-0.8 1.2l-1.2 1.2l-3 2.2l-4.1 1.9l-4.8 1.6l-5.4 1.1l-5.9 0.7l-6 0.1l-6 -0.3l-2.9 -0.4l-5.5 -1l-2.5 -0.7l-4.6 -1.7l-2.8 -1.5l-4.8 1.1l-9 1.6l-9.4 1.3l-9.6 0.9l-9.8 0.4l-9.8 0.1l-15.2 -0.7l-1.6 1.3l-3.6 2.1l-4.5 1.8l-5.1 1.3l-5.7 0.9l-6 0.4l-6 -0.1l-5.9 -0.5l-5.5 -1.1l-2.5 -0.7l-4.5 -1.6l-3.7 -2.1l-2.6 -2.2l-0.9 -1.2l-0.6 -1.3l-0.4 -1.2l0 -1.3l0.3 -1.3l0.6 -1.2l0.8 -1.3l1.1 -1.1l2.5 -1.9l-3.8 -1.8l-5.9 -3.2l-5.1 -3.5l-4.3 -3.7l-3.4 -3.9l-2.5 -3.9l-1.5 -4.1l-0.4 -2.1l-0.1 -2.3l-7.2 -0.4l-5.7 -0.8l-5.2 -1.2l-4.5 -1.7l-3.7 -2l-2.6 -2.3l-0.9 -1.2l-0.6 -1.2l-0.4 -1.3l0 -1.3l0.3 -1.2l0.6 -1.3l0.8 -1.2l2.5 -2.3l1.7 -1.1l4 -1.9l4.9 -1.5l5.4 -1.2l2.9 -0.4l6 -0.4l3 0l3 0.1l5.9 0.6l7.1 1.5l4.8 -2.8l3.2 -1.6l3.4 -1.5l7.2 -2.8l12 -3.7l8.6 -2l6.2 -1.1l-1.9 -2.2l-0.7 -1.3l-0.3 -1.2l0 -1.3l0.3 -1.3l0.5 -1.2l0.9 -1.3l2.5 -2.3l3.6 -2l4.4 -1.8l5.2 -1.3l2.8 -0.5l5.8 -0.7l3.1 -0.1l6 0l5.9 0.6l5.5 1.1l4.9 1.4l4.1 1.9l3.1 2.1l2.1 2.4l0.6 1.3l0.3 1.2l0.1 1.3l-0.3 1.3l-0.8 1.5l7.9 0.8l9.3 1.3l13.2 2.7l12.1 3.4l7.3 2.7l5.2 2.3l4.1 -2l2.3 -0.8l5.2 -1.3l2.8 -0.5l5.9 -0.7l6 -0.2l6 0.4l2.9 0.3l5.5 1.1l2.5 0.6l2.4 0.8l4.1 1.9l3.1 2.1l2.1 2.4l0.6 1.2l0.3 1.3l0.1 1.3l-0.3 1.2l-0.6 1.3l-0.8 1.2l-1.2 1.2l-3 2.2l-1.9 1l-4.5 1.7l-5.1 1.4l-2.8 0.5l-5.9 0.6l-6.6 0.2l1 2.7l0.5 4.1l0 2.1l-0.4 2l-0.5 2.1l-1.9 4l-1.2 2l-3.3 3.9l-2.9 2.8l4.6 1.3l2.1 0.9z"/>
<path d="M592.8 286.7l2.6 2.3l0.9 1.2l0.6 1.2l0.3 1.3l0.1 1.3l-0.3 1.2l-0.6 1.3l-0.8 1.2l-1.2 1.2l-3 2.2l-4.1 1.9l-4.8 1.6l-5.4 1.1l-5.9 0.6l-6 0.2l-6 -0.3l-2.9 -0.4l-5.5 -1l-2.5 -0.7l-4.6 -1.7l-3.6 -1.9l-13.5 2.6l-9.3 1.2l-9.4 0.9l-9.7 0.5l-9.7 0l-14.7 -0.6l-2.1 1.8l-3.6 2.1l-4.5 1.7l-5.1 1.4l-5.7 0.9l-6 0.4l-6 -0.1l-5.9 -0.6l-5.5 -1l-2.5 -0.7l-4.5 -1.7l-3.7 -2l-2.6 -2.2l-0.9 -1.2l-0.6 -1.3l-0.4 -1.3l0 -1.2l0.3 -1.3l0.6 -1.2l0.8 -1.3l1.1 -1.1l3.3 -2.3l-6.6 -3.3l-5.5 -3.3l-4.6 -3.6l-3.8 -3.7l-2.9 -3.9l-1.9 -4l-1.1 -4l-0.1 -2.4l-8.5 -0.3l-5.7 -0.8l-5.2 -1.2l-4.5 -1.7l-3.7 -2l-2.6 -2.3l-0.9 -1.2l-0.6 -1.2l-0.4 -1.3l0 -1.3l0.3 -1.2l0.6 -1.3l0.8 -1.2l2.5 -2.3l1.7 -1.1l4 -1.9l4.9 -1.6l5.4 -1.1l2.9 -0.4l6 -0.4l3 0l3 0.1l5.9 0.6l5.5 1l2.7 0.8l4.8 -2.8l3.1 -1.5l6.8 -3l3.6 -1.3l11.9 -3.6l8.5 -2l6.2 -1.2l-1.6 -1.4l-0.9 -1.3l-0.7 -1.2l-0.3 -1.3l0 -1.2l0.3 -1.3l0.5 -1.2l0.9 -1.3l2.5 -2.3l3.6 -2l4.4 -1.8l5.2 -1.3l2.8 -0.5l5.8 -0.7l3.1 -0.1l6 0l5.9 0.6l5.5 1.1l4.9 1.4l4.1 1.9l3.1 2.1l2.1 2.4l0.6 1.3l0.3 1.2l0.1 1.3l-0.3 1.2l-1.1 2.1l7.8 0.8l9.2 1.3l13 2.6l12 3.4l7.2 2.7l5.3 2.4l2.8 -1.6l2.1 -0.9l2.3 -0.8l5.2 -1.3l2.8 -0.5l5.9 -0.7l6 -0.2l6 0.4l2.9 0.3l5.5 1l2.5 0.7l2.4 0.8l4.1 1.9l3.1 2.1l2.1 2.4l0.6 1.2l0.3 1.3l0.1 1.3l-0.3 1.2l-0.6 1.3l-0.8 1.2l-1.2 1.2l-3 2.2l-1.9 1l-4.5 1.7l-5.1 1.4l-2.8 0.5l-5.9 0.6l-7.9 0.1l1 2.8l0.5 4.1l-0.4 4.1l-0.5 2l-1.8 4l-1.3 2l-3.2 3.8l-2.8 2.7l5.7 1.6l2.1 0.9z"/>
<path d="M592.8 283.3l2.6 2.3l0.9 1.2l0.6 1.2l0.3 1.3l0.1 1.3l-0.3 1.2l-0.6 1.3l-0.8 1.2l-1.2 1.2l-3 2.2l-4.1 1.9l-4.8 1.5l-5.4 1.2l-5.9 0.6l-6 0.2l-6 -0.3l-2.9 -0.4l-5.5 -1l-4.9 -1.5l-4.1 -1.8l-2.3 -1.5l-13.4 2.6l-9.1 1.2l-9.3 0.9l-9.6 0.4l-9.5 0.1l-14.4 -0.6l-2.5 2.3l-3.6 2.1l-4.5 1.7l-5.1 1.4l-5.7 0.9l-6 0.4l-6 -0.1l-5.9 -0.6l-5.5 -1l-2.5 -0.7l-4.5 -1.7l-3.7 -2l-2.6 -2.2l-0.9 -1.3l-0.6 -1.2l-0.4 -1.3l0 -1.2l0.3 -1.3l0.6 -1.2l0.8 -1.3l1.1 -1.2l1.5 -1.1l2.6 -1.6l-6.4 -3.1l-5.3 -3.3l-4.6 -3.5l-3.8 -3.7l-2.8 -3.8l-1.9 -4l-1.1 -3.9l-0.1 -2.4l-6.8 0l-5.9 -0.6l-5.5 -1.1l-4.9 -1.4l-4.1 -1.9l-3.1 -2.1l-1.2 -1.2l-0.9 -1.2l-0.6 -1.3l-0.4 -1.2l0 -1.3l0.3 -1.3l0.6 -1.2l0.8 -1.2l2.5 -2.3l1.7 -1.1l4 -1.9l4.9 -1.6l5.4 -1.1l2.9 -0.4l6 -0.4l3 0l3 0.1l5.9 0.6l5.5 1l3.7 1.1l4.8 -2.7l3.1 -1.6l6.7 -2.9l3.6 -1.3l11.6 -3.6l8.4 -1.9l6.3 -1.2l-2.2 -2l-0.9 -1.2l-0.7 -1.2l-0.3 -1.3l0 -1.2l0.3 -1.3l0.5 -1.3l0.9 -1.2l2.5 -2.3l3.6 -2.1l4.4 -1.7l5.2 -1.3l2.8 -0.5l5.8 -0.7l3.1 -0.1l6 0l5.9 0.6l5.5 1l4.9 1.5l4.1 1.9l3.1 2.1l2.1 2.4l0.6 1.2l0.3 1.3l0.1 1.3l-0.3 1.2l-0.6 1.3l-0.9 1.3l7.9 0.8l9 1.3l12.9 2.6l11.8 3.4l7.1 2.6l5.5 2.5l3.5 -2.1l2.1 -0.9l2.3 -0.8l5.2 -1.3l2.8 -0.6l5.9 -0.6l6 -0.2l6 0.3l2.9 0.4l5.5 1l2.5 0.7l2.4 0.8l4.1 1.9l3.1 2.1l2.1 2.4l0.6 1.2l0.3 1.3l0.1 1.3l-0.3 1.2l-0.6 1.3l-0.8 1.2l-1.2 1.2l-3 2.2l-1.9 1l-4.5 1.7l-2.5 0.7l-5.4 1.2l-5.9 0.6l-3 0.2l-6.3 -0.1l1.1 2.9l0.5 4l-0.4 4l-0.5 2l-0.8 2l-2.2 3.9l-3.2 3.8l-2.8 2.6l4.5 1.1l2.4 0.8l2.1 0.9z"/>
<path d="M592.8 279.9l2.6 2.3l0.9 1.2l0.6 1.2l0.3 1.3l0.1 1.3l-0.3 1.2l-0.6 1.3l-0.8 1.2l-1.2 1.2l-3 2.2l-4.1 1.9l-4.8 1.5l-5.4 1.2l-5.9 0.6l-6 0.2l-6 -0.3l-2.9 -0.4l-5.5 -1l-4.9 -1.5l-4.1 -1.8l-2.9 -2l-13.2 2.5l-9 1.3l-9.3 0.8l-14.1 0.5l-9.4 -0.1l-9.3 -0.5l-1.5 1.8l-1.4 1.1l-3.6 2.1l-4.5 1.7l-5.1 1.4l-5.7 0.9l-6 0.4l-6 -0.1l-5.9 -0.6l-5.5 -1l-2.5 -0.7l-4.5 -1.7l-3.7 -2l-2.6 -2.3l-0.9 -1.2l-0.6 -1.2l-0.4 -1.3l0 -1.2l0.3 -1.3l0.6 -1.3l0.8 -1.2l1.1 -1.2l1.5 -1.1l3.5 -2l-6.2 -3.1l-5.3 -3.2l-4.5 -3.5l-3.7 -3.6l-2.8 -3.8l-2 -3.9l-1 -3.9l-0.1 -2.4l-8.1 0l-5.9 -0.5l-5.5 -1.1l-4.9 -1.4l-4.1 -1.9l-3.1 -2.1l-1.2 -1.2l-0.9 -1.2l-0.6 -1.3l-0.4 -1.2l0 -1.3l0.3 -1.3l0.6 -1.2l0.8 -1.2l2.5 -2.3l1.7 -1.1l4 -1.9l4.9 -1.6l2.6 -0.6l2.8 -0.5l5.9 -0.7l3 -0.1l6 0.1l3 0.2l5.7 0.8l2.7 0.6l4.7 1.4l4.8 -2.7l3.1 -1.5l6.6 -2.9l3.5 -1.3l11.5 -3.5l8.3 -1.9l6.4 -1.2l-1.8 -1.3l-2 -2.4l-0.7 -1.2l-0.3 -1.3l0 -1.2l0.3 -1.3l0.5 -1.3l0.9 -1.2l2.5 -2.3l3.6 -2.1l2.1 -0.9l2.3 -0.8l5.2 -1.3l5.7 -0.9l6 -0.5l3 0l3 0.1l5.9 0.6l5.5 1l4.9 1.5l4.1 1.9l3.1 2.1l2.1 2.4l0.6 1.2l0.3 1.3l0.1 1.3l-0.3 1.2l-0.6 1.3l-1.4 1.8l8 0.8l8.9 1.3l12.7 2.6l11.6 3.3l7.1 2.6l5.7 2.6l2.3 -1.6l1.9 -1l4.4 -1.7l2.6 -0.7l2.6 -0.7l5.7 -0.9l6 -0.4l3 0l6 0.3l2.9 0.4l5.5 1l2.5 0.7l2.4 0.8l4.1 1.9l3.1 2.1l2.1 2.4l0.6 1.2l0.3 1.3l0.1 1.3l-0.3 1.2l-0.6 1.3l-0.8 1.2l-1.2 1.2l-3 2.2l-1.9 1l-4.5 1.7l-2.5 0.7l-5.4 1.2l-5.9 0.6l-3 0.2l-7.6 -0.2l1.1 3.1l0.5 3.9l-0.1 2l-0.8 3.9l-1.8 3.9l-1.2 1.9l-3.1 3.8l-2.8 2.6l3.2 0.6l4.9 1.5l2.1 0.9z"/>
<path d="M592.8 276.5l2.6 2.3l0.9 1.2l0.6 1.2l0.3 1.3l0.1 1.3l-0.3 1.2l-0.6 1.3l-0.8 1.2l-1.2 1.2l-3 2.2l-4.1 1.9l-4.8 1.5l-5.4 1.2l-5.9 0.6l-6 0.2l-6 -0.3l-5.7 -0.9l-5.2 -1.2l-4.6 -1.7l-3.6 -2l-1.8 -1.4l-13.1 2.5l-8.8 1.2l-9.2 0.9l-13.9 0.5l-9.3 -0.1l-9 -0.5l-1.9 2.3l-1.4 1.1l-3.6 2.1l-4.5 1.7l-5.1 1.4l-5.7 0.9l-6 0.4l-6 -0.1l-5.9 -0.6l-5.5 -1l-2.5 -0.7l-4.5 -1.7l-3.7 -2l-2.6 -2.3l-0.9 -1.2l-0.6 -1.2l-0.4 -1.3l0 -1.2l0.3 -1.3l0.6 -1.3l0.8 -1.2l1.1 -1.2l1.5 -1.1l1.6 -1.1l2.8 -1.3l-6.1 -3l-5.2 -3.2l-4.5 -3.4l-3.6 -3.6l-2.8 -3.7l-1.9 -3.9l-0.9 -3.8l-0.2 -2.5l-6.4 0.2l-6 -0.3l-5.7 -0.8l-2.7 -0.6l-4.9 -1.5l-4.1 -1.8l-3.1 -2.2l-1.2 -1.1l-0.9 -1.2l-0.6 -1.3l-0.4 -1.2l0 -1.3l0.3 -1.3l0.6 -1.2l0.8 -1.2l2.5 -2.4l1.7 -1l4 -1.9l2.4 -0.9l2.5 -0.7l5.4 -1.1l2.9 -0.4l6 -0.4l6 0.1l3 0.2l2.9 0.3l5.5 1.1l5.7 1.8l4.8 -2.8l3 -1.5l3.2 -1.4l6.9 -2.7l11.3 -3.4l8.2 -1.9l6.5 -1.3l-2.5 -1.7l-2 -2.4l-0.7 -1.2l-0.3 -1.3l0 -1.3l0.3 -1.2l0.5 -1.3l0.9 -1.2l2.5 -2.3l3.6 -2.1l4.4 -1.7l2.5 -0.7l2.7 -0.7l5.7 -0.8l6 -0.5l3 0l3 0.1l5.9 0.6l5.5 1l4.9 1.5l4.1 1.9l3.1 2.1l2.1 2.4l0.6 1.2l0.3 1.3l0.1 1.3l-0.3 1.2l-0.6 1.3l-1.9 2.3l8.1 0.8l8.8 1.3l12.5 2.5l11.5 3.3l7 2.6l6 2.7l2.9 -2.1l1.9 -1l4.4 -1.7l2.6 -0.7l5.4 -1.2l2.9 -0.4l6 -0.4l3 0l6 0.3l2.9 0.4l5.5 1l2.5 0.7l2.4 0.8l4.1 1.8l3.1 2.2l2.1 2.4l0.6 1.2l0.3 1.3l0.1 1.2l-0.3 1.3l-0.6 1.3l-0.8 1.2l-1.2 1.2l-1.4 1.1l-3.5 2.1l-4.5 1.7l-2.5 0.7l-5.4 1.1l-2.9 0.4l-3 0.3l-6 0.2l-6 -0.4l1.2 3.3l0.5 3.9l-0.1 2l-0.8 3.8l-0.8 2l-2.2 3.8l-3 3.7l-2.8 2.6l4.4 0.8l4.9 1.5l2.1 0.9z"/>
<path d="M592.8 273.1l2.6 2.3l0.9 1.2l0.6 1.2l0.3 1.3l0.1 1.2l-0.3 1.3l-0.6 1.3l-0.8 1.2l-1.2 1.2l-3 2.2l-4.1 1.9l-4.8 1.5l-5.4 1.1l-5.9 0.7l-6 0.2l-6 -0.3l-5.7 -0.9l-5.2 -1.2l-4.6 -1.7l-3.6 -2l-2.3 -1.9l-13 2.5l-8.8 1.2l-9 0.8l-13.7 0.5l-9.1 -0.1l-8.9 -0.5l-1.1 1.7l-1.1 1.2l-3.1 2.2l-4 1.9l-4.9 1.5l-5.4 1.2l-5.9 0.6l-6 0.2l-6 -0.3l-2.9 -0.4l-5.5 -1l-2.5 -0.7l-4.5 -1.7l-3.7 -2l-1.4 -1.1l-2.1 -2.4l-0.6 -1.2l-0.4 -1.3l0 -1.3l0.3 -1.2l0.6 -1.3l0.8 -1.2l1.1 -1.2l1.5 -1.1l1.6 -1.1l3.7 -1.7l-5.9 -3l-5.2 -3.1l-4.4 -3.4l-3.6 -3.5l-2.7 -3.7l-1.9 -3.8l-0.9 -3.8l-0.2 -2.5l-7.7 0.3l-6 -0.3l-5.7 -0.8l-2.7 -0.6l-4.9 -1.5l-4.1 -1.8l-3.1 -2.2l-1.2 -1.1l-0.9 -1.2l-0.6 -1.3l-0.4 -1.2l0 -1.3l0.3 -1.3l0.6 -1.2l0.8 -1.3l2.5 -2.3l1.7 -1l4 -1.9l2.4 -0.9l2.5 -0.7l5.4 -1.1l2.9 -0.4l6 -0.4l6 0.1l3 0.2l2.9 0.3l5.5 1.1l2.5 0.7l4.2 1.5l4.8 -2.8l3 -1.5l3.2 -1.4l6.7 -2.7l11.2 -3.4l8 -1.9l6.8 -1.2l-1.8 -1.1l-2.6 -2.3l-0.9 -1.2l-0.7 -1.2l-0.3 -1.3l0 -1.3l0.3 -1.2l0.5 -1.3l0.9 -1.2l2.5 -2.3l3.6 -2.1l4.4 -1.7l2.5 -0.7l2.7 -0.7l5.7 -0.9l6 -0.4l3 0l3 0.1l5.9 0.6l5.5 1l4.9 1.5l2.1 0.9l3.7 2l2.6 2.3l0.9 1.2l0.6 1.2l0.3 1.3l0.1 1.2l-0.3 1.3l-0.6 1.3l-0.8 1.2l-1.7 1.6l8.4 0.9l8.6 1.2l12.4 2.5l7.6 2.1l7.2 2.4l6.5 2.6l3.2 1.6l1.8 -1.6l1.7 -1.1l1.9 -1l4.4 -1.7l5.2 -1.4l2.8 -0.5l5.9 -0.6l3 -0.2l3 0l6 0.3l2.9 0.4l5.5 1l4.9 1.5l2.1 0.9l2 0.9l3.1 2.2l2.1 2.4l0.6 1.2l0.3 1.3l0.1 1.2l-0.3 1.3l-0.6 1.3l-0.8 1.2l-1.2 1.2l-1.4 1.1l-3.5 2.1l-4.5 1.7l-2.5 0.7l-5.4 1.1l-2.9 0.4l-3 0.3l-6 0.2l-7.4 -0.5l1.3 3.5l0.5 3.8l-0.1 1.9l-0.8 3.9l-1.7 3.8l-1.2 1.8l-3 3.7l-2.8 2.6l2.9 0.4l5.2 1.3l4.5 1.7z"/>
<path d="M592.8 269.7l2.6 2.3l0.9 1.2l0.6 1.2l0.3 1.3l0.1 1.2l-0.3 1.3l-0.6 1.3l-0.8 1.2l-1.2 1.2l-3 2.2l-4.1 1.9l-4.8 1.5l-5.4 1.1l-5.9 0.7l-6 0.2l-6 -0.4l-5.7 -0.8l-5.2 -1.2l-4.6 -1.7l-3.6 -2l-1.5 -1.1l-1.3 -1.4l-4.6 1.1l-8.4 1.5l-8.6 1.1l-8.9 0.8l-13.5 0.6l-9 -0.2l-8.8 -0.4l-1.3 2.2l-1.1 1.2l-3.1 2.2l-4 1.9l-4.9 1.5l-5.4 1.1l-5.9 0.7l-6 0.2l-6 -0.3l-2.9 -0.4l-5.5 -1l-2.5 -0.7l-4.5 -1.7l-3.7 -2l-1.4 -1.1l-2.1 -2.4l-0.6 -1.2l-0.4 -1.3l0 -1.3l0.3 -1.2l0.6 -1.3l0.8 -1.2l2.6 -2.3l1.6 -1.1l4.7 -2.1l-5.9 -2.9l-5.1 -3.1l-4.3 -3.4l-3.5 -3.4l-2.7 -3.6l-1.9 -3.8l-0.9 -3.7l-0.2 -2.6l-6 0.4l-6 -0.1l-3 -0.2l-5.7 -0.8l-5.2 -1.3l-4.5 -1.7l-2 -0.9l-3.1 -2.2l-1.2 -1.1l-0.9 -1.2l-0.6 -1.3l-0.4 -1.3l0 -1.2l0.3 -1.3l0.6 -1.2l0.8 -1.3l2.5 -2.3l1.7 -1l4 -2l2.4 -0.8l2.5 -0.7l5.4 -1.1l2.9 -0.4l6 -0.4l6 0l3 0.3l2.9 0.3l5.5 1.1l4.9 1.4l2.7 1.2l5 -2.9l2.9 -1.5l9.7 -4l11.1 -3.3l7.9 -1.9l7.1 -1.3l-2.7 -1.5l-2.6 -2.3l-0.9 -1.2l-0.7 -1.2l-0.3 -1.3l0 -1.3l0.3 -1.2l0.5 -1.3l0.9 -1.2l2.5 -2.3l3.6 -2.1l4.4 -1.7l2.5 -0.7l2.7 -0.7l5.7 -0.9l6 -0.4l3 0l3 0.1l5.9 0.6l5.5 1l4.9 1.5l2.1 0.9l3.7 2l2.6 2.3l0.9 1.2l0.6 1.2l0.3 1.3l0.1 1.2l-0.3 1.3l-0.6 1.3l-0.8 1.2l-2.4 2.1l8.7 0.9l8.5 1.2l12.2 2.5l7.6 2l7 2.4l6.5 2.6l3.5 1.7l2.4 -2.1l1.7 -1.1l1.9 -1l4.4 -1.7l5.2 -1.4l2.8 -0.5l5.9 -0.6l3 -0.2l3 0l6 0.3l2.9 0.4l5.5 1l4.9 1.5l2.1 0.9l2 0.9l3.1 2.2l2.1 2.4l0.6 1.2l0.3 1.3l0.1 1.2l-0.3 1.3l-0.6 1.2l-0.8 1.3l-1.2 1.1l-1.4 1.2l-3.5 2l-4.5 1.8l-2.5 0.7l-5.4 1.1l-2.9 0.4l-3 0.3l-6 0.2l-3 -0.1l-5.8 -0.6l1.3 3.7l0.6 3.8l-0.4 3.8l-0.5 1.9l-0.8 1.9l-2.1 3.7l-3 3.6l-2.8 2.6l4.2 0.6l5.2 1.3l4.5 1.7z"/>
<path d="M592.8 266.3l2.6 2.2l0.9 1.3l0.6 1.2l0.3 1.3l0.1 1.2l-0.3 1.3l-0.6 1.2l-0.8 1.3l-1.2 1.1l-3 2.2l-4.1 2l-4.8 1.5l-5.4 1.1l-5.9 0.7l-6 0.2l-6 -0.4l-5.7 -0.8l-5.2 -1.2l-4.6 -1.7l-3.6 -2l-1.5 -1.1l-1.7 -1.9l-4.8 1.1l-8.2 1.5l-8.5 1.1l-8.8 0.8l-13.3 0.5l-8.9 -0.1l-8.7 -0.5l-0.6 1.6l-0.9 1.2l-2.5 2.3l-3.6 2.1l-4.5 1.7l-2.5 0.7l-5.4 1.1l-5.9 0.7l-6 0.2l-6 -0.4l-2.9 -0.3l-5.5 -1l-2.5 -0.7l-4.5 -1.7l-3.7 -2l-1.4 -1.1l-2.1 -2.4l-0.6 -1.2l-0.4 -1.3l0 -1.3l0.3 -1.2l0.6 -1.3l0.8 -1.2l2.6 -2.3l1.6 -1.1l1.9 -1l3.8 -1.5l-5.8 -2.9l-5 -3l-4.3 -3.3l-3.5 -3.4l-2.7 -3.6l-1.8 -3.7l-0.9 -3.7l-0.1 -2.7l-7.4 0.6l-6 -0.1l-3 -0.2l-5.7 -0.8l-5.2 -1.3l-4.5 -1.7l-2 -0.9l-3.1 -2.2l-1.2 -1.1l-0.9 -1.3l-0.6 -1.2l-0.4 -1.3l0 -1.2l0.3 -1.3l0.6 -1.2l0.8 -1.3l2.5 -2.3l1.7 -1l4 -2l2.4 -0.8l2.5 -0.7l5.4 -1.1l2.9 -0.4l6 -0.4l6 0l3 0.3l2.9 0.3l5.5 1.1l4.9 1.4l3.5 1.6l5.2 -3l2.9 -1.4l9.6 -4l10.9 -3.3l7.8 -1.8l7.4 -1.3l-3.6 -2l-2.6 -2.3l-0.9 -1.2l-0.7 -1.2l-0.3 -1.3l0 -1.3l0.3 -1.2l0.5 -1.3l0.9 -1.2l2.5 -2.3l3.6 -2.1l2.1 -0.9l4.8 -1.6l5.5 -1.1l2.9 -0.4l6 -0.4l3 0l3 0.1l5.9 0.6l5.5 1l4.9 1.5l2.1 0.9l3.7 2l2.6 2.2l0.9 1.3l0.6 1.2l0.3 1.3l0.1 1.2l-0.3 1.3l-0.6 1.2l-0.8 1.3l-1.2 1.2l-1.9 1.4l13.3 1.5l8.2 1.3l7.9 1.7l7.5 2.1l6.9 2.3l6.4 2.6l4.1 2l1.4 -1.7l3.1 -2.2l1.9 -1l4.4 -1.7l2.6 -0.8l5.4 -1.1l5.9 -0.7l3 -0.1l3 0l6 0.3l2.9 0.4l5.5 1l4.9 1.5l2.1 0.9l2 0.9l3.1 2.2l2.1 2.3l0.6 1.3l0.3 1.2l0.1 1.3l-0.3 1.3l-0.6 1.2l-0.8 1.3l-1.2 1.1l-1.4 1.2l-3.5 2l-4.5 1.8l-2.5 0.7l-5.4 1.1l-2.9 0.4l-3 0.3l-6 0.2l-6 -0.4l-4.3 -0.6l1 2.2l0.9 3.7l0.1 3.8l-0.8 3.7l-1.7 3.7l-1.1 1.8l-3 3.5l-2.9 2.7l5.5 0.8l5.2 1.3l4.5 1.7z"/>
<path d="M592.8 262.9l2.6 2.2l0.9 1.2l0.6 1.3l0.3 1.2l0.1 1.3l-0.3 1.3l-0.6 1.2l-0.8 1.3l-1.2 1.1l-3 2.2l-4.1 1.9l-4.8 1.6l-5.4 1.1l-5.9 0.7l-6 0.2l-6 -0.4l-5.7 -0.8l-2.7 -0.6l-4.9 -1.4l-4.1 -1.9l-3.2 -2.1l-1.1 -1.2l-1 -1.3l-5 1.2l-8.1 1.4l-8.4 1.2l-8.6 0.7l-13.1 0.6l-8.8 -0.2l-8.7 -0.4l-0.7 2l-0.9 1.3l-2.5 2.3l-3.6 2l-4.5 1.8l-2.5 0.7l-5.4 1.1l-5.9 0.7l-6 0.2l-6 -0.4l-2.9 -0.3l-5.5 -1.1l-2.5 -0.6l-4.5 -1.7l-3.7 -2l-1.4 -1.1l-2.1 -2.4l-0.6 -1.3l-0.4 -1.2l0 -1.3l0.3 -1.3l0.6 -1.2l0.8 -1.2l2.6 -2.3l1.6 -1.1l4 -1.9l2.7 -0.9l-5.8 -2.9l-4.9 -3l-4.2 -3.3l-3.5 -3.3l-2.6 -3.5l-1.8 -3.7l-0.9 -3.6l-0.1 -2.9l-5.7 0.6l-3 0.2l-6 -0.1l-3 -0.2l-5.7 -0.8l-5.2 -1.3l-4.5 -1.7l-2 -0.9l-3.1 -2.2l-1.2 -1.2l-0.9 -1.2l-0.6 -1.2l-0.4 -1.3l0 -1.2l0.3 -1.3l0.6 -1.3l0.8 -1.2l2.5 -2.3l3.6 -2.1l2.1 -0.9l4.9 -1.5l5.4 -1.1l2.9 -0.4l6 -0.4l3 -0.1l3 0.1l5.9 0.6l2.8 0.5l5.2 1.2l4.5 1.7l2.3 1.2l2.6 -1.7l5.6 -2.9l9.4 -3.9l10.7 -3.2l7.8 -1.8l7.8 -1.4l-2.9 -1.4l-3.2 -2.1l-2 -2.4l-0.7 -1.3l-0.3 -1.2l0 -1.3l0.3 -1.3l0.5 -1.2l0.9 -1.2l2.5 -2.3l3.6 -2.1l4.4 -1.7l2.5 -0.8l2.7 -0.6l5.7 -0.9l6 -0.4l3 0l3 0.1l5.9 0.6l5.5 1l4.9 1.5l2.1 0.9l3.7 2l2.6 2.2l0.9 1.2l0.6 1.3l0.3 1.3l0.1 1.2l-0.3 1.3l-0.6 1.2l-0.8 1.3l-1.2 1.1l-2.7 2l13.6 1.5l8.2 1.3l7.8 1.7l7.3 2l6.9 2.3l6.2 2.5l4.6 2.3l1.9 -2.3l3.1 -2.2l1.9 -1l4.4 -1.8l5.2 -1.3l2.8 -0.5l5.9 -0.7l3 -0.1l3 0l6 0.3l2.9 0.3l5.5 1.1l4.9 1.5l2.1 0.8l2 1l3.1 2.2l2.1 2.3l0.6 1.3l0.3 1.2l0.1 1.3l-0.3 1.3l-0.6 1.2l-0.8 1.2l-1.2 1.2l-1.4 1.2l-3.5 2l-2.1 0.9l-4.9 1.6l-2.6 0.6l-2.8 0.5l-5.9 0.7l-6 0.1l-3 -0.1l-5.9 -0.5l-2.9 -0.5l1.2 2.5l0.9 3.7l0.1 3.7l-0.8 3.6l-0.7 1.9l-2.1 3.5l-2.9 3.5l-3 2.8l6.8 0.9l5.2 1.3l4.5 1.7z"/>
<path d="M592.8 259.5l2.6 2.2l0.9 1.2l0.6 1.3l0.3 1.2l0.1 1.3l-0.3 1.3l-0.6 1.2l-0.8 1.2l-1.2 1.2l-3 2.2l-4.1 1.9l-4.8 1.6l-5.4 1.1l-5.9 0.7l-6 0.1l-6 -0.3l-5.7 -0.8l-2.7 -0.6l-4.9 -1.5l-4.1 -1.8l-3.2 -2.2l-1.1 -1.1l-1.2 -1.8l-5.3 1.2l-8 1.4l-8.3 1.1l-8.5 0.8l-8.6 0.4l-8.7 0.1l-13 -0.6l-0.3 1.4l-0.5 1.2l-0.9 1.3l-1.1 1.1l-3.1 2.2l-1.9 1l-4.5 1.8l-2.5 0.7l-5.4 1.1l-5.9 0.7l-6 0.2l-6 -0.4l-2.9 -0.3l-5.5 -1.1l-2.5 -0.7l-4.5 -1.6l-3.7 -2l-1.4 -1.1l-2.1 -2.4l-0.6 -1.3l-0.4 -1.2l0 -1.3l0.3 -1.3l0.6 -1.2l0.8 -1.2l2.6 -2.3l1.6 -1.1l4 -1.9l3.8 -1.3l-5.8 -2.9l-4.9 -2.9l-4.2 -3.2l-3.3 -3.3l-2.6 -3.5l-1.8 -3.6l-0.9 -3.6l-0.1 -3l-7 0.8l-6 0.2l-3 -0.1l-3 -0.2l-5.7 -0.8l-5.2 -1.3l-4.5 -1.7l-2 -0.9l-3.1 -2.2l-1.2 -1.2l-0.9 -1.2l-0.6 -1.2l-0.4 -1.3l0 -1.2l0.3 -1.3l0.6 -1.3l0.8 -1.2l2.5 -2.3l3.6 -2.1l2.1 -0.9l4.9 -1.5l5.4 -1.1l2.9 -0.4l6 -0.5l3 0l3 0.1l5.9 0.6l2.8 0.5l5.2 1.2l4.5 1.7l3.1 1.6l2.9 -1.8l5.4 -2.8l9.4 -3.8l6.9 -2.3l7.4 -1.9l12.1 -2.3l-3.9 -1.8l-3.2 -2.2l-2 -2.3l-0.7 -1.3l-0.3 -1.2l0 -1.3l0.3 -1.3l0.5 -1.2l0.9 -1.2l2.5 -2.3l3.6 -2.1l4.4 -1.8l2.5 -0.7l2.7 -0.6l5.7 -0.9l6 -0.4l3 0l3 0.1l5.9 0.5l5.5 1.1l4.9 1.5l2.1 0.8l3.7 2.1l1.4 1.1l2.1 2.3l0.6 1.3l0.3 1.2l0.1 1.3l-0.3 1.3l-0.6 1.2l-0.8 1.3l-1.2 1.1l-1.4 1.2l-2.2 1.3l5.8 0.5l8.3 1l8 1.3l7.7 1.7l7.2 1.9l6.8 2.3l6.2 2.5l5.2 2.6l1.1 -1.8l2.5 -2.4l3.6 -2l2.1 -0.9l2.3 -0.9l5.2 -1.3l2.8 -0.5l5.9 -0.7l6 -0.1l6 0.3l2.9 0.3l5.5 1.1l4.9 1.5l2.1 0.8l2 1l3.1 2.2l2.1 2.3l0.6 1.3l0.3 1.2l0.1 1.3l-0.3 1.3l-0.6 1.2l-0.8 1.2l-1.2 1.2l-1.4 1.2l-3.5 2l-2.1 0.9l-4.9 1.6l-2.6 0.6l-2.8 0.5l-5.9 0.7l-6 0.1l-3 -0.1l-5.9 -0.5l-4.4 -0.9l1.4 3l0.9 3.6l0.1 3.6l-0.8 3.6l-1.6 3.6l-1.2 1.8l-2.8 3.4l-3.1 2.9l5.3 0.5l2.8 0.5l5.2 1.3l4.5 1.6z"/>
<path d="M592.8 256l2.6 2.3l0.9 1.2l0.6 1.3l0.3 1.2l0.1 1.3l-0.3 1.3l-0.6 1.2l-0.8 1.2l-1.2 1.2l-3 2.2l-4.1 1.9l-4.8 1.6l-5.4 1.1l-5.9 0.7l-6 0.1l-6 -0.3l-5.7 -0.8l-2.7 -0.6l-4.9 -1.5l-4.1 -1.8l-3.2 -2.2l-1.1 -1.1l-0.9 -1.2l-0.6 -1.2l-5.6 1.2l-7.9 1.5l-8.1 1.1l-8.4 0.7l-8.5 0.4l-8.5 0.1l-13.1 -0.6l-0.3 2l-0.5 1.2l-0.9 1.2l-1.1 1.2l-3.1 2.2l-1.9 1l-4.5 1.8l-2.5 0.7l-5.4 1.1l-5.9 0.7l-6 0.1l-6 -0.3l-2.9 -0.3l-5.5 -1.1l-2.5 -0.7l-4.5 -1.6l-3.7 -2l-1.4 -1.2l-2.1 -2.3l-0.6 -1.3l-0.4 -1.2l0 -1.3l0.3 -1.3l0.6 -1.2l0.8 -1.2l1.1 -1.2l1.5 -1.2l3.5 -2l4.5 -1.8l2.6 -0.7l-5.9 -2.9l-4.8 -2.9l-4.1 -3.2l-3.3 -3.3l-2.6 -3.4l-1.7 -3.5l-0.9 -3.5l-0.1 -3.3l-5.4 0.8l-3 0.3l-6 0.2l-3 -0.1l-3 -0.2l-5.7 -0.9l-5.2 -1.2l-4.5 -1.7l-2 -1l-3.1 -2.1l-1.2 -1.2l-0.9 -1.2l-0.6 -1.2l-0.4 -1.3l0 -1.3l0.3 -1.2l0.6 -1.3l0.8 -1.2l2.5 -2.3l3.6 -2.1l2.1 -0.9l4.9 -1.5l5.4 -1.2l2.9 -0.3l6 -0.5l6 0.1l5.9 0.6l2.8 0.5l5.2 1.2l2.4 0.8l4.1 1.9l1.9 1.2l3.2 -2l5.4 -2.8l9.1 -3.8l6.9 -2.2l7.2 -1.9l7.7 -1.6l5.1 -0.8l-3.3 -1.2l-1.9 -1l-3.2 -2.2l-2 -2.3l-0.7 -1.3l-0.3 -1.2l0 -1.3l0.3 -1.3l0.5 -1.2l0.9 -1.2l2.5 -2.4l3.6 -2l4.4 -1.8l2.5 -0.7l2.7 -0.6l5.7 -0.9l6 -0.4l3 0l3 0.1l5.9 0.5l5.5 1.1l4.9 1.5l2.1 0.8l3.7 2l1.4 1.2l2.1 2.3l0.6 1.3l0.3 1.2l0.1 1.3l-0.3 1.3l-0.6 1.2l-0.8 1.2l-1.2 1.2l-1.4 1.2l-3.2 1.8l6.5 0.5l8.1 1l8 1.3l7.5 1.7l7.1 1.9l6.7 2.2l6.1 2.5l5.8 3l0.6 -1.4l0.9 -1.3l1.1 -1.1l1.4 -1.2l3.6 -2l4.4 -1.8l5.2 -1.3l2.8 -0.5l5.9 -0.7l6 -0.2l6 0.4l2.9 0.3l5.5 1.1l4.9 1.4l2.1 0.9l2 1l3.1 2.1l2.1 2.4l0.6 1.3l0.3 1.2l0.1 1.3l-0.3 1.3l-0.6 1.2l-0.8 1.2l-1.2 1.2l-1.4 1.1l-3.5 2.1l-2.1 0.9l-4.9 1.6l-5.4 1.1l-5.9 0.7l-3 0.1l-3 0l-6 -0.3l-5.7 -0.8l-3.3 -0.7l1.7 3.4l0.9 3.5l0.2 1.8l-0.4 3.6l-1.2 3.5l-2 3.5l-2.8 3.4l-3.3 3l6.8 0.6l5.5 1.1l2.5 0.7l4.5 1.6z"/>
<path d="M592.8 252.6l1.4 1.1l2.1 2.4l0.6 1.3l0.3 1.2l0.1 1.3l-0.3 1.3l-0.6 1.2l-0.8 1.2l-1.2 1.2l-3 2.2l-4.1 1.9l-4.8 1.6l-5.4 1.1l-5.9 0.7l-6 0.1l-6 -0.3l-5.7 -0.8l-2.7 -0.6l-2.5 -0.7l-4.6 -1.7l-3.6 -2l-2.6 -2.2l-0.9 -1.2l-0.8 -1.9l-6.1 1.4l-7.7 1.4l-8 1.1l-8.2 0.7l-8.3 0.4l-8.4 0.1l-13.3 -0.6l0.1 1.3l-0.3 1.3l-0.5 1.2l-0.9 1.2l-1.1 1.2l-3.1 2.2l-1.9 1l-4.5 1.8l-2.5 0.7l-5.4 1.1l-5.9 0.7l-6 0.1l-6 -0.3l-2.9 -0.3l-5.5 -1.1l-2.5 -0.7l-4.5 -1.6l-3.7 -2.1l-1.4 -1.1l-2.1 -2.3l-0.6 -1.3l-0.4 -1.2l0 -1.3l0.3 -1.3l0.6 -1.2l0.8 -1.2l1.1 -1.2l1.5 -1.2l3.5 -2l4.5 -1.8l3.9 -1l-6.1 -3l-4.7 -2.9l-4 -3.1l-3.3 -3.2l-2.5 -3.3l-1.7 -3.5l-0.9 -3.5l0 -3.5l-6.9 1.1l-3 0.3l-6 0.2l-6 -0.3l-5.7 -0.9l-2.7 -0.5l-4.9 -1.5l-2.1 -0.9l-2 -1l-3.1 -2.1l-1.2 -1.2l-0.9 -1.2l-0.6 -1.2l-0.4 -1.3l0 -1.3l0.3 -1.2l0.6 -1.3l0.8 -1.2l2.5 -2.3l3.6 -2.1l2.1 -0.9l4.9 -1.5l5.4 -1.2l2.9 -0.4l6 -0.4l6 0.1l5.9 0.6l2.8 0.4l5.2 1.3l2.4 0.8l4.1 1.8l2.7 1.9l3.6 -2.3l5.3 -2.7l9 -3.8l6.7 -2.1l7.1 -1.9l7.6 -1.5l5.8 -1l-4.6 -1.6l-3.6 -2.1l-2.6 -2.2l-0.9 -1.2l-0.7 -1.3l-0.3 -1.2l0 -1.3l0.3 -1.3l0.5 -1.2l0.9 -1.3l2.5 -2.3l3.6 -2l4.4 -1.8l2.5 -0.7l2.7 -0.6l5.7 -0.9l6 -0.4l3 0l3 0.1l5.9 0.5l5.5 1.1l4.9 1.4l2.1 0.9l3.7 2l1.4 1.1l2.1 2.4l0.6 1.3l0.3 1.2l0.1 1.3l-0.3 1.3l-0.6 1.2l-0.8 1.2l-2.6 2.3l-1.6 1.1l-2.8 1.4l7.3 0.5l8.1 1l7.7 1.3l7.5 1.6l7 1.9l6.5 2.2l6 2.4l6.7 3.5l0.3 -1.1l0.5 -1.2l0.9 -1.3l1.1 -1.1l1.4 -1.2l3.6 -2l4.4 -1.8l5.2 -1.3l2.8 -0.5l5.9 -0.7l6 -0.2l6 0.4l2.9 0.3l5.5 1.1l4.9 1.4l2.1 0.9l2 1l3.1 2.1l2.1 2.4l0.6 1.3l0.3 1.2l0.1 1.3l-0.3 1.3l-0.6 1.2l-0.8 1.2l-1.2 1.2l-1.4 1.1l-3.5 2.1l-2.1 0.9l-4.9 1.6l-5.4 1.1l-5.9 0.6l-3 0.2l-3 0l-6 -0.3l-5.7 -0.8l-5.1 -1.3l1.3 2.3l1.3 3.5l0.5 3.5l-0.3 3.5l-1.2 3.5l-2 3.4l-2.7 3.4l-3.5 3.2l8.3 0.6l5.5 1.1l2.5 0.7l4.5 1.6z"/>
<path d="M592.8 249.2l2.6 2.3l0.9 1.2l0.6 1.3l0.3 1.2l0.1 1.3l-0.3 1.3l-0.6 1.2l-0.8 1.2l-1.2 1.2l-3 2.2l-4.1 1.9l-4.8 1.6l-5.4 1.1l-5.9 0.6l-6 0.2l-3 -0.1l-3 -0.2l-5.7 -0.8l-5.2 -1.3l-2.4 -0.8l-4.1 -1.8l-3.2 -2.2l-2 -2.4l-0.7 -1.2l-0.3 -1.3l-6.5 1.5l-7.6 1.4l-7.9 1.1l-8 0.7l-8.2 0.4l-8.3 0l-13.4 -0.6l0.2 2l-0.3 1.3l-0.5 1.2l-0.9 1.2l-1.1 1.2l-3.1 2.2l-1.9 1l-4.5 1.7l-2.5 0.8l-5.4 1.1l-5.9 0.7l-6 0.1l-6 -0.3l-2.9 -0.3l-5.5 -1.1l-2.5 -0.7l-4.5 -1.7l-3.7 -2l-1.4 -1.1l-2.1 -2.3l-0.6 -1.3l-0.4 -1.2l0 -1.3l0.3 -1.3l0.6 -1.2l0.8 -1.3l1.1 -1.1l3.1 -2.2l4 -1.9l4.9 -1.6l2.7 -0.6l-6.2 -3.1l-4.6 -2.8l-4 -3l-3.2 -3.2l-2.5 -3.3l-1.6 -3.4l-0.9 -3.4l-0.1 -1.7l0.1 -2.2l-5.5 1.1l-5.9 0.7l-3 0.1l-6 0l-3 -0.3l-5.7 -0.8l-2.7 -0.5l-4.9 -1.5l-2.1 -0.9l-2 -1l-3.1 -2.1l-1.2 -1.2l-0.9 -1.2l-0.6 -1.2l-0.4 -1.3l0 -1.3l0.3 -1.2l0.6 -1.3l0.8 -1.2l2.5 -2.3l3.6 -2.1l2.1 -0.9l4.9 -1.6l5.4 -1.1l5.9 -0.6l3 -0.2l6 0.1l5.9 0.6l5.5 1l4.9 1.5l2.1 0.9l3.7 2l1.8 1.4l4 -2.5l5.1 -2.8l8.9 -3.6l6.6 -2.1l7 -1.8l7.5 -1.6l6.8 -1l-4 -1.3l-2.2 -0.9l-3.6 -2l-2.6 -2.2l-0.9 -1.3l-0.7 -1.2l-0.3 -1.3l0 -1.2l0.3 -1.3l0.5 -1.2l0.9 -1.3l1.1 -1.1l3.1 -2.2l4 -2l2.3 -0.8l2.5 -0.7l5.5 -1.1l5.8 -0.7l6.1 -0.2l3 0.1l5.9 0.6l2.8 0.5l5.2 1.2l4.5 1.7l3.7 2l1.4 1.1l2.1 2.4l0.6 1.3l0.3 1.2l0.1 1.3l-0.3 1.3l-0.6 1.2l-0.8 1.2l-2.6 2.3l-1.6 1.1l-4 1.9l8.2 0.6l7.9 1l7.6 1.2l10.8 2.5l6.7 2l6.1 2.3l5.6 2.5l5.1 2.8l0 -0.8l0.3 -1.3l0.5 -1.3l0.9 -1.2l2.5 -2.3l1.7 -1.1l1.9 -1l4.4 -1.7l5.2 -1.3l5.7 -0.9l3 -0.3l6 -0.2l6 0.4l5.7 0.8l2.7 0.6l4.9 1.4l4.1 1.9l3.1 2.1l2.1 2.4l0.6 1.2l0.3 1.3l0.1 1.3l-0.3 1.2l-0.6 1.3l-0.8 1.2l-1.2 1.2l-1.4 1.1l-3.5 2.1l-4.5 1.7l-2.5 0.8l-5.4 1.1l-5.9 0.6l-6 0.2l-6 -0.3l-2.9 -0.4l-5.5 -1l-4.4 -1.3l1.9 3.1l1.3 3.4l0.4 3.4l-0.3 3.5l-1.1 3.4l-2 3.4l-2.7 3.2l-3.8 3.4l7.1 0.4l5.7 0.8l2.7 0.6l2.5 0.6l4.5 1.7z"/>
<path d="M592.8 245.8l2.6 2.3l0.9 1.2l0.6 1.2l0.3 1.3l0.1 1.3l-0.3 1.2l-0.6 1.3l-0.8 1.2l-1.2 1.2l-3 2.2l-4.1 1.9l-4.8 1.6l-5.4 1.1l-5.9 0.6l-6 0.2l-3 -0.1l-3 -0.2l-5.7 -0.8l-5.2 -1.3l-2.4 -0.8l-4.1 -1.8l-3.2 -2.2l-2 -2.4l-0.7 -1.2l-0.3 -2l-7.2 1.7l-7.4 1.3l-7.7 1.1l-8 0.7l-8 0.4l-8.1 0l-8.1 -0.2l-5.6 -0.4l0.4 1.3l0 1.3l-0.3 1.3l-0.5 1.2l-0.9 1.2l-1.1 1.2l-3.1 2.2l-4 1.9l-4.9 1.6l-2.6 0.6l-2.8 0.5l-5.9 0.6l-6 0.2l-6 -0.3l-2.9 -0.4l-5.5 -1l-2.5 -0.7l-4.5 -1.7l-3.7 -2l-1.4 -1.1l-1.2 -1.1l-0.9 -1.3l-0.6 -1.2l-0.4 -1.3l0 -1.2l0.3 -1.3l0.6 -1.2l0.8 -1.3l1.1 -1.1l1.5 -1.2l3.5 -2l2.1 -1l4.9 -1.5l4.2 -0.9l-6.5 -3.2l-4.6 -2.8l-3.9 -2.9l-3.1 -3.1l-2.4 -3.3l-1.7 -3.3l-0.8 -3.4l-0.2 -1.7l0.2 -2.6l-7 1.6l-5.9 0.7l-3 0.1l-6 0l-3 -0.3l-5.7 -0.8l-2.7 -0.6l-4.9 -1.4l-2.1 -0.9l-2 -1l-3.1 -2.1l-1.2 -1.2l-0.9 -1.2l-0.6 -1.2l-0.4 -1.3l0 -1.3l0.3 -1.2l0.6 -1.3l0.8 -1.2l2.5 -2.3l3.6 -2.1l2.1 -0.9l4.9 -1.6l5.4 -1.1l5.9 -0.6l3 -0.2l6 0.1l5.9 0.6l5.5 1l2.5 0.7l4.5 1.7l3.7 2l2.5 2.1l4.5 -2.9l5 -2.7l5.7 -2.4l6.2 -2.2l6.7 -1.9l7.1 -1.7l11.6 -1.9l-5.6 -1.7l-4.1 -1.8l-3.2 -2.2l-2 -2.4l-0.7 -1.2l-0.3 -1.3l0 -1.2l0.3 -1.3l0.5 -1.2l0.9 -1.3l1.1 -1.2l3.1 -2.2l1.9 -0.9l4.4 -1.8l5.2 -1.3l2.8 -0.5l2.9 -0.4l6 -0.4l6 0l5.9 0.6l2.8 0.5l5.2 1.2l2.4 0.8l4.1 1.9l3.1 2.1l2.1 2.4l0.6 1.2l0.3 1.3l0.1 1.3l-0.3 1.2l-0.6 1.3l-0.8 1.2l-1.2 1.2l-3 2.2l-1.9 1l-3.7 1.4l9.4 0.7l7.8 0.9l7.5 1.3l10.6 2.4l6.6 2l6 2.2l5.5 2.5l6.5 3.7l-0.3 -0.9l0 -1.2l0.3 -1.3l0.5 -1.3l0.9 -1.2l1.1 -1.2l3.1 -2.2l1.9 -1l4.4 -1.7l5.2 -1.3l5.7 -0.9l6 -0.5l3 0l6 0.4l5.7 0.8l2.7 0.5l4.9 1.5l4.1 1.9l3.1 2.1l2.1 2.4l0.6 1.2l0.3 1.3l0.1 1.3l-0.3 1.2l-0.6 1.3l-0.8 1.2l-1.2 1.2l-1.4 1.1l-3.5 2.1l-4.5 1.7l-2.5 0.7l-5.4 1.2l-5.9 0.6l-6 0.2l-6 -0.3l-5.7 -0.8l-5.2 -1.3l-4.1 -1.5l1.7 2.4l0.9 1.7l1.3 3.3l0.5 3.4l-0.4 3.4l-1.1 3.4l-1.9 3.3l-2.7 3.2l-4.1 3.7l5.8 0l3 0.3l5.7 0.8l2.7 0.5l2.5 0.7l4.5 1.7z"/>
<path d="M592.6 242.5l2.6 2.2l0.9 1.2l0.6 1.2l0.3 1.3l0.1 1.3l-0.3 1.2l-0.6 1.3l-0.8 1.2l-2.5 2.3l-3.6 2l-4.4 1.8l-5.1 1.3l-2.8 0.5l-2.9 0.4l-5.9 0.4l-6 -0.1l-3 -0.2l-5.6 -0.8l-5.2 -1.3l-4.5 -1.6l-1.9 -1l-3.2 -2.1l-2 -2.4l-0.7 -1.2l-0.3 -1.3l0.1 -1.5l-8.1 1.9l-7.3 1.3l-7.6 1l-7.8 0.8l-7.9 0.3l-8 0.1l-7.9 -0.3l-6.4 -0.4l0.8 2l0 1.3l-0.3 1.2l-0.5 1.3l-0.9 1.2l-2.5 2.3l-3.6 2l-2.1 0.9l-4.8 1.6l-2.6 0.6l-5.6 0.9l-3 0.3l-6 0.1l-5.9 -0.3l-2.9 -0.4l-5.5 -1l-2.5 -0.7l-4.5 -1.6l-1.9 -1l-3.1 -2.1l-2.1 -2.4l-0.6 -1.2l-0.3 -1.3l-0.1 -1.2l0.3 -1.3l0.6 -1.2l0.8 -1.2l2.5 -2.3l3.6 -2.1l4.4 -1.7l5.1 -1.4l3.1 -0.5l-7 -3.3l-4.4 -2.8l-3.8 -2.9l-3.1 -3.1l-2.4 -3.1l-1.6 -3.3l-0.9 -3.3l-0.1 -1.7l0.3 -3.2l-5.9 1.6l-5.7 0.9l-2.9 0.3l-6 0.2l-3 -0.1l-5.8 -0.6l-2.8 -0.5l-2.7 -0.5l-4.8 -1.5l-4.1 -1.8l-1.7 -1.1l-2.6 -2.2l-0.9 -1.2l-0.6 -1.3l-0.4 -1.2l0 -1.3l0.3 -1.2l0.6 -1.3l1.9 -2.4l3.1 -2.2l1.9 -0.9l4.4 -1.8l5.1 -1.3l2.8 -0.5l5.8 -0.7l6 -0.1l5.9 0.3l5.7 0.8l2.7 0.6l4.8 1.4l4.1 1.9l3.1 2.1l1.8 1.9l5.1 -3.4l5 -2.7l5.6 -2.4l6.1 -2.1l6.6 -1.9l7 -1.7l7.3 -1.3l5.8 -0.8l-5.3 -1.3l-4.5 -1.6l-3.6 -2l-2.6 -2.3l-0.9 -1.2l-0.7 -1.2l-0.3 -1.3l0 -1.2l0.3 -1.3l0.5 -1.2l2 -2.4l3.1 -2.2l4 -1.9l2.3 -0.8l5.1 -1.4l2.8 -0.5l5.8 -0.6l6 -0.2l3 0.1l5.8 0.6l5.5 1l2.5 0.7l4.5 1.7l3.6 2l1.4 1.1l2.1 2.3l0.6 1.3l0.3 1.2l0.1 1.3l-0.3 1.2l-0.6 1.3l-2 2.4l-3 2.1l-1.9 1l-5.5 2.1l11.1 0.7l7.6 0.9l11 2l6.8 1.6l9.5 3l5.6 2.3l5.1 2.6l2.4 1.3l4.1 2.8l-1 -1.7l-0.4 -1.3l0 -1.3l0.3 -1.2l0.5 -1.2l2 -2.4l3.1 -2.2l4 -1.9l4.8 -1.6l5.4 -1.1l5.8 -0.6l6 -0.2l5.9 0.3l2.9 0.4l5.5 1l4.8 1.5l4.1 1.8l3.1 2.2l2.1 2.3l0.6 1.2l0.3 1.3l0.1 1.3l-0.3 1.2l-0.6 1.3l-0.8 1.2l-2.5 2.3l-3.6 2l-2.1 0.9l-4.8 1.6l-5.4 1.1l-5.8 0.6l-6 0.2l-6 -0.3l-5.6 -0.8l-5.2 -1.3l-4.5 -1.6l-2.9 -1.6l2.4 2.8l1.1 1.6l1.6 3.2l0.9 3.4l0 3.3l-0.7 3.3l-1.5 3.3l-1 1.6l-2.6 3.2l-1.6 1.5l-3.1 2.5l7.7 0l2.9 0.2l5.7 0.8l2.7 0.6l4.8 1.5l2.2 0.9z"/>
<path d="M590.4 239.6l2.4 2.1l1.4 2.2l0.3 1.2l0 1.1l-0.2 1.2l-0.6 1.1l-0.7 1.1l-2.3 2.1l-3.3 1.9l-4 1.6l-4.7 1.2l-2.6 0.5l-8.1 0.7l-5.5 -0.1l-7.9 -0.9l-4.7 -1.2l-2.2 -0.7l-3.7 -1.7l-1.5 -0.9l-2.4 -2.1l-1.4 -2.2l-0.3 -1.2l0 -1.1l0.6 -2l-8.4 2.2l-7 1.5l-11.1 1.6l-7.6 0.7l-7.8 0.4l-7.8 0l-7.8 -0.2l-9.9 -0.8l1.2 1.9l0.3 1.2l0 1.1l-0.2 1.2l-0.5 1.1l-1.8 2.2l-1.3 1l-1.5 1l-3.7 1.8l-4.4 1.4l-2.4 0.5l-5.2 0.8l-8.2 0.4l-8.1 -0.6l-5 -0.9l-4.4 -1.4l-2 -0.8l-1.8 -0.9l-2.8 -1.9l-1.1 -1.1l-1.4 -2.2l-0.3 -1.2l0 -1.1l0.2 -1.2l0.5 -1.1l1.9 -2.2l2.7 -2l3.7 -1.7l4.4 -1.4l5 -1.1l3.2 -0.4l-7.1 -3.1l-4.7 -2.6l-2.1 -1.3l-3.7 -2.9l-3.1 -3l-2.3 -3.1l-0.9 -1.6l-1.2 -3.2l-0.5 -3.3l0.1 -1.6l0.3 -1.7l0.7 -2.3l-2.5 1.1l-4.4 1.4l-5 1l-2.6 0.4l-8.2 0.4l-8.1 -0.6l-2.6 -0.5l-4.7 -1.1l-2.1 -0.7l-3.8 -1.7l-1.5 -1l-2.4 -2l-1.4 -2.3l-0.3 -1.1l0 -1.2l0.2 -1.1l0.5 -1.2l0.8 -1.1l2.3 -2.1l3.3 -1.9l4 -1.5l4.7 -1.3l5.2 -0.8l5.4 -0.4l5.5 0.1l5.4 0.5l5 1l4.4 1.3l3.8 1.7l2.8 2l1.9 2.1l0.8 1.8l3.5 -2.8l2.1 -1.4l4.6 -2.7l8 -3.6l6 -2.1l6.4 -1.9l10.4 -2.3l7.3 -1.1l9.5 -1l-7 -0.9l-4.7 -1.2l-4.1 -1.5l-3.3 -1.8l-2.4 -2.1l-1.4 -2.2l-0.3 -1.2l0 -1.1l0.2 -1.2l0.5 -1.1l1.8 -2.2l2.8 -2l3.7 -1.7l4.4 -1.4l2.4 -0.6l5.2 -0.8l5.4 -0.4l5.5 0.1l5.4 0.5l5 0.9l2.3 0.7l4.1 1.5l1.8 0.9l2.8 1.9l1.1 1.1l0.8 1.1l0.6 1.1l0.3 1.2l0 1.1l-0.2 1.2l-0.6 1.1l-1.8 2.2l-1.2 1l-1.6 1l-3.6 1.7l-4.4 1.5l-4.9 1l10.7 0.2l7.6 0.6l11.2 1.5l7 1.3l6.8 1.7l9.2 2.9l5.6 2.3l5 2.5l2.3 1.3l4 2.8l1.8 1.4l3.1 3l2.3 3.1l0.9 1.6l1.2 3.3l0.3 1.6l0.1 1.6l-0.3 3.3l-1.1 3.2l-0.8 1.6l-1 1.6l-2.6 3.1l-3.2 3l-3.8 2.7l2.9 -0.3l5.5 -0.1l8.1 0.6l2.5 0.4l4.8 1.2l4.1 1.5z"/>
<path d="M618.2 190.9l1.9 2.2l0.6 1.1l0.3 1.2l0 1.1l-0.2 1.2l-0.6 1.1l-1.8 2.2l-1.2 1l-3.3 1.9l-4 1.6l-4.7 1.2l-5.2 0.8l-5.4 0.4l-8.3 -0.3l-5.2 -0.7l-4.7 -1.2l-4.1 -1.5l-3.3 -1.8l-2.4 -2.1l-1.4 -2.2l-0.3 -1.2l0 -1.1l0.2 -1.2l0.5 -1.1l0.8 -1.1l2.3 -2.1l1.5 -1l3.7 -1.7l4.4 -1.5l2.4 -0.5l5.2 -0.8l5.4 -0.4l5.5 0.1l7.9 0.9l4.8 1.2l4.1 1.5l3.3 1.8z"/>
<path d="M549.5 191l7.1 3.7l3.9 2.7l1.7 1.4l3 2.9l2.3 3.1l0.8 1.5l1.2 3.1l0.5 3.2l-0.1 1.6l-0.7 3.2l-1.4 3.1l-2.2 3.1l-2.8 3l-1.7 1.4l-3.8 2.8l-2.2 1.3l-4.8 2.5l-8.1 3.3l-6.1 2l-6.5 1.7l-6.8 1.4l-10.8 1.6l-7.5 0.6l-7.5 0.4l-11.4 0l-11.2 -0.8l-7.3 -0.8l-7.1 -1.2l-9.9 -2.3l-6.2 -1.8l-5.6 -2.1l-5.2 -2.4l-6.6 -3.8l-3.7 -2.8l-1.5 -1.4l-2.6 -3l-2 -3.1l-1.1 -3.1l-0.3 -1.6l-0.1 -3.2l0.2 -1.6l0.5 -1.6l1.4 -3.1l2.1 -3.1l1.4 -1.5l3.2 -2.9l1.8 -1.4l6.5 -3.9l7.8 -3.6l8.9 -3l6.5 -1.7l6.8 -1.4l7.2 -1.1l7.3 -0.8l11.3 -0.7l11.4 0l11.2 0.8l10.9 1.4l10.2 2.1l9.4 2.6z"/>
<path d="M547.9 188.2l4.8 2.3l6 3.9l3.2 2.8l2.5 2.9l1.1 1.5l0.8 1.5l1.1 3l0.5 3.1l-0.3 3.1l-0.5 1.6l-1.3 3l-2.1 3l-2.8 2.9l-3.4 2.8l-6.3 3.8l-5 2.3l-8.3 3.1l-9.3 2.6l-6.7 1.4l-10.4 1.5l-7.3 0.7l-11 0.4l-7.4 -0.1l-7.3 -0.4l-7.2 -0.7l-7 -1l-9.9 -2l-6.2 -1.7l-8.5 -3l-5 -2.2l-6.4 -3.8l-3.6 -2.7l-1.5 -1.4l-2.5 -2.9l-1.1 -1.5l-1.5 -3l-0.8 -3.1l-0.1 -1.5l0.3 -3.1l1.1 -3.1l0.7 -1.5l2.1 -3l1.3 -1.5l1.5 -1.4l3.4 -2.8l6.3 -3.8l4.9 -2.3l5.5 -2.2l9 -2.7l9.8 -2.2l10.5 -1.5l10.9 -0.9l11.1 -0.2l11 0.5l10.7 1.2l10.2 1.8l6.4 1.5l5.9 1.8z"/>
<path d="M546.4 185.4l4.6 2.3l5.8 3.7l3.2 2.7l1.3 1.4l2.1 2.9l1.5 2.9l0.8 3l0 3l-0.6 3.1l-0.6 1.4l-1.7 3l-2.4 2.8l-1.4 1.4l-1.6 1.4l-3.6 2.6l-4.3 2.4l-4.7 2.3l-8.1 3l-6 1.7l-9.6 2.2l-10.2 1.4l-7 0.7l-7.2 0.3l-10.7 0l-7.1 -0.4l-10.4 -1.1l-6.7 -1.1l-9.4 -2.2l-5.8 -1.7l-5.4 -2l-4.9 -2.2l-6.2 -3.7l-1.8 -1.3l-3.2 -2.7l-2.5 -2.8l-0.9 -1.4l-1.5 -3l-0.8 -3l-0.1 -1.5l0.3 -3l0.4 -1.5l1.4 -2.9l2 -2.9l1.3 -1.5l1.4 -1.4l3.3 -2.6l6.2 -3.8l7.3 -3.3l5.5 -2l6 -1.7l9.6 -2.1l10.2 -1.5l10.6 -0.8l10.7 -0.2l10.7 0.5l7 0.6l6.8 1l9.7 2l8.8 2.5z"/>
<path d="M549.3 184.8l4 2.4l3.3 2.5l1.5 1.4l2.4 2.7l0.9 1.4l1.5 2.9l0.4 1.4l0.4 2.9l-0.3 3l-0.9 2.9l-1.7 2.8l-2.3 2.8l-2.9 2.7l-5.5 3.7l-4.4 2.3l-4.9 2.1l-8.2 2.8l-9.1 2.2l-6.4 1.2l-10.1 1.2l-6.9 0.5l-7 0.2l-6.9 -0.1l-7 -0.3l-10.1 -1.1l-6.4 -1.1l-9.2 -2.1l-5.6 -1.7l-7.7 -3l-4.5 -2.2l-3.9 -2.4l-1.7 -1.3l-3.1 -2.6l-2.4 -2.8l-0.9 -1.4l-1.5 -2.8l-0.7 -2.9l-0.1 -3l0.7 -2.9l0.5 -1.4l1.7 -2.9l1 -1.4l2.7 -2.7l5 -3.9l6.4 -3.5l4.9 -2.1l5.4 -1.9l8.8 -2.4l9.5 -1.8l6.7 -0.9l6.8 -0.7l7 -0.3l6.9 -0.1l7 0.3l6.9 0.5l10.6 1.4l4.2 -1.6l5.1 -1l5.6 -0.3l5.6 0.4l2.5 0.5l4.5 1.5l1.7 0.9l1.4 1l1 1.2l0.5 1.1l0.1 1.2l-0.3 1.2l-0.8 1.1l-1.2 1.1l-1.2 0.8z"/>
<path d="M547.7 181.9l3.8 2.3l4.7 3.8l2.3 2.7l1.7 2.7l0.6 1.4l0.7 2.8l0.1 2.9l-0.6 2.8l-1.3 2.8l-0.9 1.4l-2.2 2.7l-1.3 1.3l-3.2 2.5l-3.7 2.4l-6.6 3.3l-5 1.9l-8.2 2.6l-6 1.3l-6.2 1.2l-9.8 1.2l-6.7 0.5l-10.2 0.1l-6.7 -0.2l-6.7 -0.5l-9.7 -1.3l-6.1 -1.1l-5.9 -1.4l-5.4 -1.7l-5.1 -1.9l-6.7 -3.2l-3.8 -2.3l-3.3 -2.5l-2.6 -2.6l-1.1 -1.3l-1.7 -2.8l-1.1 -2.8l-0.2 -1.4l-0.1 -2.8l0.2 -1.5l0.4 -1.4l1.3 -2.8l1.9 -2.7l2.5 -2.7l5 -3.7l6.2 -3.4l7.3 -3l8.2 -2.5l6 -1.4l6.2 -1.1l6.5 -0.9l6.6 -0.6l6.8 -0.4l6.8 0l6.7 0.2l6.7 0.5l9.9 1.3l3.1 -1.6l2.3 -0.7l5.1 -1l5.6 -0.3l5.6 0.4l2.5 0.5l4.5 1.5l1.7 0.9l1.4 1l1 1.1l0.5 1.2l0.1 1.2l-0.3 1.2l-0.8 1.1l-1.2 1.1l-2.5 1.5z"/>
<path d="M546.1 179l3.7 2.3l4.5 3.6l2.2 2.6l1.7 2.7l0.6 1.3l0.7 2.8l0 2.7l-0.6 2.8l-0.5 1.4l-1.5 2.6l-2.2 2.7l-1.3 1.2l-3.1 2.5l-3.6 2.3l-6.3 3.2l-4.9 1.9l-5.2 1.7l-5.7 1.4l-8.9 1.8l-6.3 0.8l-6.5 0.6l-6.5 0.3l-9.9 0l-9.7 -0.6l-6.3 -0.8l-6.1 -1l-8.6 -2l-5.4 -1.6l-7.2 -2.8l-6.1 -3.2l-3.4 -2.3l-2.9 -2.5l-1.2 -1.3l-2 -2.6l-1.3 -2.7l-0.7 -2.8l0 -2.7l0.2 -1.4l0.3 -1.4l1.3 -2.7l0.8 -1.3l2.2 -2.6l2.8 -2.6l3.3 -2.3l6 -3.4l7.1 -2.9l5.2 -1.6l5.6 -1.5l9 -1.7l6.3 -0.9l6.5 -0.6l6.5 -0.3l6.6 0l6.5 0.2l6.5 0.5l9.5 1.2l2.1 -1.5l1.9 -0.9l4.7 -1.3l2.7 -0.4l5.6 -0.3l5.6 0.4l2.5 0.5l4.5 1.5l1.7 0.9l1.4 1l1 1.1l0.5 1.2l0.1 1.2l-0.3 1.2l-0.8 1.1l-1.2 1.1l-1.5 1l-2.5 1.1z"/>
<path d="M544.4 176.1l5.2 3.4l2.8 2.4l2.2 2.5l1.6 2.6l1 2.6l0.2 1.3l0.1 2.7l-0.6 2.7l-1.2 2.6l-0.8 1.3l-2.1 2.5l-2.7 2.5l-5 3.4l-4 2.1l-4.5 1.9l-7.5 2.5l-8.3 2.1l-5.8 1.1l-6.1 0.8l-6.3 0.5l-6.3 0.4l-9.6 -0.1l-6.3 -0.3l-9.2 -1l-6 -1l-8.3 -1.9l-7.6 -2.4l-4.5 -1.9l-6 -3.1l-3.3 -2.3l-4 -3.6l-1.9 -2.6l-1.3 -2.6l-0.6 -2.6l-0.1 -1.4l0.2 -2.6l0.4 -1.4l1.2 -2.6l1.8 -2.6l1.1 -1.2l2.7 -2.5l3.2 -2.3l5.8 -3.2l6.9 -2.8l7.8 -2.4l5.6 -1.3l5.8 -1l6.1 -0.9l6.3 -0.5l6.3 -0.3l6.4 -0.1l6.3 0.2l6.3 0.5l9.2 1.2l1.3 -1.3l1.6 -1l4.2 -1.6l2.4 -0.6l2.7 -0.4l5.6 -0.3l5.6 0.4l2.5 0.5l4.5 1.5l1.7 0.9l1.4 1l1 1.1l0.5 1.2l0.1 1.2l-0.3 1.2l-0.8 1.1l-1.2 1.1l-1.5 1l-4.1 1.6z"/>
<path d="M542.7 173.3l3.5 2.1l2.9 2.3l2.4 2.3l1 1.2l1.6 2.5l0.9 2.6l0.4 2.6l-0.1 1.3l-0.5 2.5l-0.5 1.3l-1.5 2.5l-2 2.5l-2.6 2.4l-3.1 2.2l-5.7 3.1l-6.6 2.7l-4.9 1.6l-5.3 1.4l-8.4 1.6l-8.9 1.1l-6.1 0.4l-6.1 0.2l-9.3 -0.2l-6 -0.5l-5.9 -0.7l-8.5 -1.5l-5.3 -1.3l-5 -1.5l-6.8 -2.6l-3.9 -2l-3.5 -2.1l-4.2 -3.4l-2.1 -2.5l-0.9 -1.2l-1.2 -2.5l-0.7 -2.6l-0.1 -1.3l0.3 -2.6l0.3 -1.3l1.2 -2.5l0.8 -1.3l2 -2.4l2.6 -2.4l3.1 -2.2l5.6 -3.1l6.7 -2.7l7.5 -2.3l5.4 -1.3l5.7 -1l5.9 -0.8l6 -0.6l6.1 -0.3l6.2 0l6.1 0.2l6.1 0.5l9.1 1.2l0.7 -1.1l1.2 -1.1l1.6 -1l1.9 -0.9l4.7 -1.3l2.7 -0.4l5.6 -0.3l5.6 0.4l2.5 0.5l4.5 1.4l1.7 1l1.4 1l1 1.1l0.5 1.2l0.1 1.2l-0.3 1.2l-0.8 1.1l-1.2 1.1l-1.5 1l-2 0.9l-4 1.1z"/>
<path d="M542.7 169.9l3.5 2.1l2.9 2.2l2.4 2.4l1 1.2l1.6 2.5l0.9 2.6l0.4 2.6l-0.1 1.3l-0.5 2.5l-0.5 1.3l-1.5 2.5l-2 2.5l-2.6 2.3l-3.1 2.3l-5.7 3.1l-6.6 2.7l-4.9 1.6l-5.3 1.4l-8.4 1.6l-8.9 1.1l-6.1 0.4l-6.1 0.2l-9.3 -0.2l-6 -0.5l-5.9 -0.7l-8.5 -1.5l-5.3 -1.3l-5 -1.5l-6.8 -2.6l-3.9 -2l-3.5 -2.1l-4.2 -3.5l-2.1 -2.4l-0.9 -1.2l-1.2 -2.5l-0.7 -2.6l-0.1 -1.3l0.3 -2.6l0.3 -1.3l1.2 -2.5l0.8 -1.3l2 -2.4l2.6 -2.4l3.1 -2.2l5.6 -3.1l6.7 -2.7l7.5 -2.3l5.4 -1.3l5.7 -1l5.9 -0.8l6 -0.6l6.1 -0.3l6.2 0l6.1 0.2l6.1 0.5l9.1 1.2l0.7 -1.1l1.2 -1.1l1.6 -1l1.9 -0.9l4.7 -1.3l2.7 -0.5l5.6 -0.3l5.6 0.5l2.5 0.5l4.5 1.4l1.7 1l1.4 1l1 1.1l0.5 1.2l0.1 1.2l-0.3 1.1l-0.8 1.2l-1.2 1.1l-1.5 1l-2 0.9l-4 1.1z"/>
<path d="M542.7 166.5l3.5 2.1l2.9 2.2l2.4 2.4l1 1.2l1.6 2.5l0.9 2.6l0.4 2.6l-0.1 1.3l-0.5 2.5l-0.5 1.3l-1.5 2.5l-2 2.5l-2.6 2.3l-3.1 2.3l-5.7 3.1l-6.6 2.7l-4.9 1.6l-5.3 1.3l-8.4 1.7l-8.9 1.1l-6.1 0.4l-6.1 0.2l-9.3 -0.2l-6 -0.5l-5.9 -0.7l-8.5 -1.5l-5.3 -1.3l-5 -1.5l-6.8 -2.6l-3.9 -2l-3.5 -2.1l-4.2 -3.5l-2.1 -2.4l-0.9 -1.2l-1.2 -2.5l-0.7 -2.6l-0.1 -1.3l0.3 -2.6l0.3 -1.3l1.2 -2.5l0.8 -1.3l2 -2.4l2.6 -2.4l3.1 -2.2l5.6 -3.1l6.7 -2.7l7.5 -2.3l5.4 -1.3l5.7 -1l5.9 -0.8l6 -0.6l6.1 -0.3l6.2 0l6.1 0.2l6.1 0.5l9.1 1.2l0.7 -1.2l1.2 -1l1.6 -1l1.9 -0.9l4.7 -1.3l2.7 -0.5l5.6 -0.3l5.6 0.5l2.5 0.5l4.5 1.4l1.7 1l1.4 1l1 1.1l0.5 1.2l0.1 1.2l-0.3 1.1l-0.8 1.2l-1.2 1.1l-1.5 1l-2 0.8l-4 1.2z"/>
<path d="M542.7 163l3.5 2.2l2.9 2.2l2.4 2.4l1 1.2l1.6 2.5l0.9 2.6l0.4 2.5l-0.1 1.3l-0.5 2.6l-0.5 1.3l-1.5 2.5l-2 2.5l-2.6 2.3l-3.1 2.3l-5.7 3.1l-6.6 2.7l-4.9 1.6l-5.3 1.3l-8.4 1.7l-8.9 1.1l-6.1 0.4l-6.1 0.2l-9.3 -0.3l-6 -0.4l-5.9 -0.7l-8.5 -1.5l-5.3 -1.3l-5 -1.5l-6.8 -2.6l-3.9 -2l-3.5 -2.1l-4.2 -3.5l-2.1 -2.4l-0.9 -1.2l-1.2 -2.6l-0.7 -2.5l-0.1 -1.3l0.3 -2.6l0.3 -1.3l1.2 -2.5l0.8 -1.3l2 -2.4l2.6 -2.4l3.1 -2.2l5.6 -3.1l6.7 -2.8l7.5 -2.2l5.4 -1.3l5.7 -1l5.9 -0.8l6 -0.6l6.1 -0.3l6.2 0l6.1 0.2l6.1 0.4l9.1 1.2l0.7 -1.1l1.2 -1l1.6 -1l1.9 -0.9l4.7 -1.4l2.7 -0.4l5.6 -0.3l5.6 0.5l2.5 0.5l4.5 1.4l1.7 0.9l1.4 1.1l1 1.1l0.5 1.2l0.1 1.1l-0.3 1.2l-0.8 1.2l-1.2 1.1l-1.5 1l-2 0.8l-4 1.2z"/>
<path d="M506.2 167.1l3.6 2l2.7 2.3l0.9 1.2l0.6 1.2l0.3 1.3l0 1.3l-0.2 1.2l-0.6 1.3l-0.9 1.2l-2.5 2.3l-1.7 1.1l-1.9 1l-4.4 1.7l-5.2 1.4l-5.7 0.9l-2.9 0.2l-6.1 0.2l-5.9 -0.3l-5.8 -0.8l-2.6 -0.6l-2.6 -0.7l-4.5 -1.7l-3.6 -2l-1.5 -1.1l-2.1 -2.4l-0.6 -1.2l-0.3 -1.3l0 -1.2l0.2 -1.3l0.6 -1.3l0.9 -1.2l1.1 -1.2l3.1 -2.2l4 -1.9l2.3 -0.8l2.5 -0.7l5.5 -1.1l2.9 -0.4l5.9 -0.5l3.1 0l5.9 0.4l5.8 0.8l2.6 0.5l2.6 0.7z"/>
<path d="M506.2 170.5l3.6 2l2.7 2.3l0.9 1.2l0.6 1.2l0.3 1.3l0 1.3l-0.2 1.2l-0.6 1.3l-0.9 1.2l-2.5 2.3l-1.7 1.1l-1.9 1l-4.4 1.7l-5.2 1.4l-5.7 0.9l-2.9 0.2l-6.1 0.2l-5.9 -0.3l-5.8 -0.8l-2.6 -0.6l-2.6 -0.7l-4.5 -1.7l-3.6 -2l-1.5 -1.1l-2.1 -2.4l-0.6 -1.2l-0.3 -1.3l0 -1.2l0.2 -1.3l0.6 -1.3l0.9 -1.2l1.1 -1.2l3.1 -2.2l4 -1.9l2.3 -0.8l2.5 -0.7l5.5 -1.1l2.9 -0.4l5.9 -0.4l3.1 -0.1l5.9 0.4l5.8 0.8l2.6 0.6l2.6 0.6z"/>
<path d="M506.2 173.9l3.6 2l2.7 2.3l0.9 1.2l0.6 1.3l0.3 1.2l0 1.3l-0.2 1.3l-0.6 1.2l-0.9 1.2l-2.5 2.3l-1.7 1.1l-1.9 1l-4.4 1.7l-5.2 1.4l-5.7 0.9l-2.9 0.2l-6.1 0.2l-5.9 -0.3l-5.8 -0.8l-2.6 -0.6l-2.6 -0.7l-4.5 -1.7l-3.6 -2l-1.5 -1.1l-2.1 -2.4l-0.6 -1.2l-0.3 -1.3l0 -1.2l0.2 -1.3l0.6 -1.2l0.9 -1.3l1.1 -1.1l3.1 -2.2l4 -2l2.3 -0.8l2.5 -0.7l5.5 -1.1l2.9 -0.4l5.9 -0.4l3.1 -0.1l5.9 0.4l5.8 0.8l2.6 0.6l2.6 0.6z"/>
<path d="M506.2 177.3l3.6 2l2.7 2.3l0.9 1.2l0.6 1.3l0.3 1.2l0 1.3l-0.2 1.3l-0.6 1.2l-0.9 1.2l-2.5 2.3l-1.7 1.1l-1.9 1l-4.4 1.7l-5.2 1.4l-5.7 0.9l-2.9 0.3l-6.1 0.1l-5.9 -0.3l-5.8 -0.8l-2.6 -0.6l-2.6 -0.7l-4.5 -1.7l-3.6 -2l-1.5 -1.1l-2.1 -2.3l-0.6 -1.3l-0.3 -1.2l0 -1.3l0.2 -1.3l0.6 -1.2l0.9 -1.3l1.1 -1.1l3.1 -2.2l4 -1.9l2.3 -0.9l2.5 -0.7l5.5 -1.1l2.9 -0.4l5.9 -0.4l3.1 -0.1l5.9 0.4l5.8 0.8l2.6 0.6l2.6 0.7z"/>
<path d="M506.2 180.7l3.6 2l2.7 2.3l0.9 1.2l0.6 1.3l0.3 1.2l0 1.3l-0.2 1.3l-0.6 1.2l-0.9 1.2l-2.5 2.4l-1.7 1l-1.9 1l-4.4 1.8l-5.2 1.3l-5.7 0.9l-2.9 0.3l-6.1 0.1l-5.9 -0.3l-5.8 -0.8l-2.6 -0.6l-2.6 -0.7l-4.5 -1.6l-3.6 -2.1l-1.5 -1.1l-2.1 -2.3l-0.6 -1.3l-0.3 -1.2l0 -1.3l0.2 -1.3l0.6 -1.2l0.9 -1.2l1.1 -1.2l3.1 -2.2l4 -1.9l2.3 -0.9l2.5 -0.7l5.5 -1.1l2.9 -0.4l5.9 -0.4l3.1 0l5.9 0.3l5.8 0.8l2.6 0.6l2.6 0.7z"/>
<path d="M506.2 184.1l3.6 2.1l2.7 2.2l0.9 1.2l0.6 1.3l0.3 1.2l0 1.3l-0.2 1.3l-0.6 1.2l-0.9 1.2l-2.5 2.4l-1.7 1l-1.9 1l-4.4 1.8l-5.2 1.3l-5.7 0.9l-2.9 0.3l-6.1 0.1l-5.9 -0.3l-5.8 -0.8l-2.6 -0.6l-2.6 -0.7l-4.5 -1.6l-3.6 -2l-1.5 -1.2l-2.1 -2.3l-0.6 -1.3l-0.3 -1.2l0 -1.3l0.2 -1.3l0.6 -1.2l0.9 -1.2l1.1 -1.2l3.1 -2.2l4 -1.9l2.3 -0.9l2.5 -0.7l5.5 -1.1l2.9 -0.4l5.9 -0.4l3.1 0l5.9 0.3l5.8 0.8l2.6 0.6l2.6 0.7z"/>
<path d="M506.2 187.6l3.6 2l2.7 2.2l0.9 1.2l0.6 1.3l0.3 1.2l0 1.3l-0.2 1.3l-0.6 1.2l-0.9 1.3l-2.5 2.3l-1.7 1l-1.9 1l-4.4 1.8l-5.2 1.3l-5.7 0.9l-2.9 0.3l-6.1 0.2l-5.9 -0.4l-5.8 -0.8l-2.6 -0.6l-2.6 -0.7l-4.5 -1.6l-3.6 -2l-1.5 -1.1l-2.1 -2.4l-0.6 -1.3l-0.3 -1.2l0 -1.3l0.2 -1.3l0.6 -1.2l0.9 -1.2l1.1 -1.2l3.1 -2.2l4 -1.9l2.3 -0.8l2.5 -0.8l5.5 -1.1l2.9 -0.4l5.9 -0.4l3.1 0l5.9 0.3l5.8 0.8l2.6 0.6l2.6 0.7z"/>
<path d="M506.2 191l3.6 2l2.7 2.2l0.9 1.3l0.6 1.2l0.3 1.3l0 1.2l-0.2 1.3l-0.6 1.2l-0.9 1.3l-2.5 2.3l-1.7 1l-1.9 1l-4.4 1.8l-5.2 1.3l-5.7 0.9l-2.9 0.3l-6.1 0.2l-5.9 -0.4l-5.8 -0.8l-2.6 -0.6l-2.6 -0.6l-4.5 -1.7l-3.6 -2l-1.5 -1.1l-2.1 -2.4l-0.6 -1.3l-0.3 -1.2l0 -1.3l0.2 -1.2l0.6 -1.3l0.9 -1.2l1.1 -1.2l3.1 -2.2l4 -1.9l2.3 -0.8l2.5 -0.8l5.5 -1.1l2.9 -0.4l5.9 -0.4l3.1 0l5.9 0.3l5.8 0.8l2.6 0.6l2.6 0.7z"/>
<path d="M506.2 194.4l3.6 2l2.7 2.3l0.9 1.2l0.6 1.2l0.3 1.3l0 1.2l-0.2 1.3l-0.6 1.3l-0.9 1.2l-2.5 2.3l-1.7 1.1l-1.9 1l-4.4 1.7l-5.2 1.3l-5.7 0.9l-2.9 0.3l-6.1 0.2l-5.9 -0.4l-5.8 -0.8l-2.6 -0.5l-2.6 -0.7l-4.5 -1.7l-3.6 -2l-1.5 -1.1l-2.1 -2.4l-0.6 -1.2l-0.3 -1.3l0 -1.3l0.2 -1.2l0.6 -1.3l0.9 -1.2l1.1 -1.2l3.1 -2.2l4 -1.9l2.3 -0.8l2.5 -0.8l5.5 -1.1l2.9 -0.4l5.9 -0.4l3.1 0l5.9 0.3l5.8 0.8l2.6 0.6l2.6 0.7z"/>
<path d="M506.2 197.8l3.6 2l2.7 2.3l0.9 1.2l0.6 1.2l0.3 1.3l0 1.2l-0.2 1.3l-0.6 1.3l-0.9 1.2l-2.5 2.3l-1.7 1.1l-1.9 1l-4.4 1.7l-5.2 1.3l-5.7 0.9l-2.9 0.3l-6.1 0.2l-5.9 -0.3l-5.8 -0.9l-2.6 -0.5l-2.6 -0.7l-4.5 -1.7l-3.6 -2l-1.5 -1.1l-2.1 -2.4l-0.6 -1.2l-0.3 -1.3l0 -1.3l0.2 -1.2l0.6 -1.3l0.9 -1.2l1.1 -1.2l3.1 -2.2l4 -1.9l2.3 -0.8l2.5 -0.7l5.5 -1.2l2.9 -0.4l5.9 -0.4l3.1 0l5.9 0.3l5.8 0.8l2.6 0.6l2.6 0.7z"/>
<path d="M506.2 201.2l3.6 2l2.7 2.3l0.9 1.2l0.6 1.2l0.3 1.3l0 1.3l-0.2 1.2l-0.6 1.3l-0.9 1.2l-2.5 2.3l-1.7 1.1l-1.9 1l-4.4 1.7l-5.2 1.4l-5.7 0.8l-2.9 0.3l-6.1 0.2l-5.9 -0.3l-5.8 -0.9l-2.6 -0.5l-2.6 -0.7l-4.5 -1.7l-3.6 -2l-1.5 -1.1l-2.1 -2.4l-0.6 -1.2l-0.3 -1.3l0 -1.3l0.2 -1.2l0.6 -1.3l0.9 -1.2l1.1 -1.2l3.1 -2.2l4 -1.9l2.3 -0.8l2.5 -0.7l5.5 -1.2l2.9 -0.4l5.9 -0.4l3.1 0l5.9 0.3l5.8 0.9l2.6 0.5l2.6 0.7z"/>
<path d="M506.2 204.6l3.6 2l2.7 2.3l0.9 1.2l0.6 1.2l0.3 1.3l0 1.3l-0.2 1.2l-0.6 1.3l-0.9 1.2l-2.5 2.3l-1.7 1.1l-1.9 1l-4.4 1.7l-5.2 1.4l-5.7 0.9l-2.9 0.2l-6.1 0.2l-5.9 -0.3l-5.8 -0.8l-2.6 -0.6l-2.6 -0.7l-4.5 -1.7l-3.6 -2l-1.5 -1.1l-2.1 -2.4l-0.6 -1.2l-0.3 -1.3l0 -1.2l0.2 -1.3l0.6 -1.3l0.9 -1.2l1.1 -1.2l3.1 -2.2l4 -1.9l2.3 -0.8l2.5 -0.7l5.5 -1.2l2.9 -0.3l5.9 -0.5l3.1 0l5.9 0.3l5.8 0.9l2.6 0.5l2.6 0.7z"/>
<path d="M506.2 208l3.6 2l2.7 2.3l0.9 1.2l0.6 1.2l0.3 1.3l0 1.3l-0.2 1.2l-0.6 1.3l-0.9 1.2l-2.5 2.3l-1.7 1.1l-1.9 1l-4.4 1.7l-5.2 1.4l-5.7 0.9l-2.9 0.2l-6.1 0.2l-5.9 -0.3l-5.8 -0.8l-2.6 -0.6l-2.6 -0.7l-4.5 -1.7l-3.6 -2l-1.5 -1.1l-2.1 -2.4l-0.6 -1.2l-0.3 -1.3l0 -1.2l0.2 -1.3l0.6 -1.3l0.9 -1.2l1.1 -1.2l3.1 -2.2l4 -1.9l2.3 -0.8l2.5 -0.7l5.5 -1.1l2.9 -0.4l5.9 -0.5l3.1 0l5.9 0.4l5.8 0.8l2.6 0.5l2.6 0.7z"/>
<path d="M506.2 211.4l3.6 2l2.7 2.3l0.9 1.2l0.6 1.2l0.3 1.3l0 1.3l-0.2 1.2l-0.6 1.3l-0.9 1.2l-2.5 2.3l-1.7 1.1l-1.9 1l-4.4 1.7l-5.2 1.4l-5.7 0.9l-2.9 0.2l-6.1 0.2l-5.9 -0.3l-5.8 -0.8l-2.6 -0.6l-2.6 -0.7l-4.5 -1.7l-3.6 -2l-1.5 -1.1l-2.1 -2.4l-0.6 -1.2l-0.3 -1.3l0 -1.2l0.2 -1.3l0.6 -1.2l0.9 -1.3l1.1 -1.2l3.1 -2.2l4 -1.9l2.3 -0.8l2.5 -0.7l5.5 -1.1l2.9 -0.4l5.9 -0.4l3.1 -0.1l5.9 0.4l5.8 0.8l2.6 0.6l2.6 0.6z"/>
<path d="M506.2 214.8l3.6 2l2.7 2.3l0.9 1.2l0.6 1.3l0.3 1.2l0 1.3l-0.2 1.3l-0.6 1.2l-0.9 1.2l-2.5 2.3l-1.7 1.1l-1.9 1l-4.4 1.7l-5.2 1.4l-5.7 0.9l-2.9 0.3l-6.1 0.1l-5.9 -0.3l-5.8 -0.8l-2.6 -0.6l-2.6 -0.7l-4.5 -1.7l-3.6 -2l-1.5 -1.1l-2.1 -2.3l-0.6 -1.3l-0.3 -1.3l0 -1.2l0.2 -1.3l0.6 -1.2l0.9 -1.3l1.1 -1.1l3.1 -2.2l4 -2l2.3 -0.8l2.5 -0.7l5.5 -1.1l2.9 -0.4l5.9 -0.4l3.1 -0.1l5.9 0.4l5.8 0.8l2.6 0.6l2.6 0.7z"/>
<path d="M506.2 218.2l3.6 2l2.7 2.3l0.9 1.2l0.6 1.3l0.3 1.2l0 1.3l-0.2 1.3l-0.6 1.2l-0.9 1.2l-2.5 2.3l-1.7 1.1l-1.9 1l-4.4 1.8l-5.2 1.3l-5.7 0.9l-2.9 0.3l-6.1 0.1l-5.9 -0.3l-5.8 -0.8l-2.6 -0.6l-2.6 -0.7l-4.5 -1.6l-3.6 -2.1l-1.5 -1.1l-2.1 -2.3l-0.6 -1.3l-0.3 -1.2l0 -1.3l0.2 -1.3l0.6 -1.2l0.9 -1.3l1.1 -1.1l3.1 -2.2l4 -1.9l2.3 -0.9l2.5 -0.7l5.5 -1.1l2.9 -0.4l5.9 -0.4l3.1 0l5.9 0.3l5.8 0.8l2.6 0.6l2.6 0.7z"/>
<path d="M535.2 161l5.3 2.8l2.9 2l2.5 2.2l2 2.2l1.4 2.3l0.9 2.4l0.2 1.1l0.1 2.4l-0.2 1.2l-0.8 2.4l-0.6 1.2l-1.6 2.2l-2.1 2.3l-4.2 3.1l-3.3 2l-3.8 1.8l-6.4 2.3l-7.2 2l-5.1 1.1l-5.4 0.8l-8.3 0.9l-5.6 0.2l-8.6 0l-5.6 -0.3l-8.2 -0.9l-5.3 -0.9l-7.5 -1.7l-6.7 -2.1l-4.1 -1.7l-5.3 -2.8l-3 -2l-3.5 -3.2l-1.7 -2.3l-1.1 -2.3l-0.6 -2.4l-0.1 -2.4l0.5 -2.4l0.5 -1.2l1.3 -2.3l3 -3.3l4.2 -3.2l5.2 -2.8l6.1 -2.6l6.9 -2.1l7.6 -1.6l8.1 -1.2l8.4 -0.7l8.5 -0.1l8.5 0.3l5.5 0.6l5.4 0.7l7.6 1.6l7.1 2z"/>
<path d="M537.6 163.5l5.6 2.9l3.2 2.2l2.6 2.2l1.1 1.2l1.8 2.4l1.2 2.5l0.6 2.5l0.1 1.2l-0.2 2.6l-0.9 2.5l-1.4 2.4l-3.1 3.6l-2.8 2.2l-5.2 3.1l-4 1.9l-6.7 2.6l-5 1.4l-8 1.8l-5.7 0.9l-8.8 0.8l-5.9 0.3l-9.1 0l-8.8 -0.6l-5.8 -0.7l-5.6 -0.9l-7.9 -1.8l-4.8 -1.5l-6.6 -2.5l-5.6 -2.9l-3.2 -2.2l-2.6 -2.3l-2 -2.3l-0.9 -1.2l-1.2 -2.5l-0.6 -2.5l-0.1 -2.5l0.2 -1.3l0.4 -1.2l1.1 -2.5l0.8 -1.2l1.9 -2.4l4 -3.4l5.1 -3.2l4.1 -1.9l4.4 -1.7l7.3 -2.2l8 -1.8l8.6 -1.2l8.8 -0.7l9 -0.2l6 0.2l5.9 0.5l8.6 1.1l8.1 1.6l7.4 2.1z"/>
<path d="M538.4 166.5l3.9 2l3.5 2.1l4.2 3.4l2.1 2.4l1.5 2.5l0.6 1.2l0.6 2.6l0.1 2.5l-0.6 2.6l-0.5 1.3l-1.4 2.5l-3.2 3.6l-2.9 2.3l-5.2 3.2l-6.3 2.8l-4.7 1.7l-7.7 2.1l-5.5 1.1l-8.7 1.3l-6 0.5l-9.1 0.4l-6.2 -0.1l-6 -0.3l-8.9 -1l-5.7 -0.9l-8 -1.9l-4.9 -1.5l-6.7 -2.6l-4 -1.9l-4.9 -3.2l-2.7 -2.3l-2.1 -2.4l-0.8 -1.3l-1.3 -2.5l-0.6 -2.5l-0.1 -2.6l0.6 -2.6l0.5 -1.2l1.4 -2.5l3.2 -3.6l4.5 -3.4l5.6 -3.1l6.6 -2.7l7.4 -2.3l8.2 -1.8l8.7 -1.2l9 -0.8l9.2 -0.1l9.1 0.4l8.9 0.9l8.4 1.5l7.8 2l4.8 1.6z"/>
<path d="M533.1 158.9l3.4 1.7l4.4 2.9l2.4 2l2.6 3.2l1.1 2.2l0.3 1.2l0.4 2.2l-0.3 2.3l-0.3 1.1l-1 2.3l-1.5 2.1l-2 2.2l-2.5 2l-4.7 2.8l-3.6 1.7l-6.1 2.3l-4.4 1.3l-7.2 1.5l-7.7 1.2l-5.3 0.4l-10.8 0.3l-5.4 -0.1l-7.9 -0.7l-5.1 -0.8l-7.3 -1.4l-4.5 -1.3l-6.2 -2.1l-5.3 -2.6l-3.1 -1.8l-2.6 -2l-3 -3.2l-1.8 -3.3l-0.6 -2.2l0 -2.3l0.2 -1.1l0.3 -1.1l1 -2.3l2.5 -3.2l3.5 -3.1l4.7 -2.8l5.5 -2.5l6.3 -2.2l4.7 -1.2l4.8 -1l10.3 -1.3l8.1 -0.5l8.1 0l8 0.5l7.7 1l7.3 1.5l6.7 1.9z"/>
<path d="M371.9 346l-10.9 0.3l-9.6 -0.5l-9.3 -1.3l-8.5 -2.1l-7.3 -2.7l-4.1 -2.1l-3.3 -2.3l-1.5 -1.3l-2.2 -2.5l-1.4 -2.6l-0.4 -1.5l-0.2 -2.6l0.3 -1.5l1 -2.6l1 -1.4l39.2 -54.4l3 2.6l2.3 1.4l5.3 2.4l7 2.2l3.6 0.7l5.9 0.9l1 3.8l2.2 4.3l1.6 2.3l3.6 4.2l2.4 2.2l5 3.8l3.2 2.1l6.4 3.5l-1.5 2l-0.8 1.7l-0.3 1.6l0 2l0.4 1.6l0.7 1.4l1.2 1.6l1.8 1.8l1.9 1.4l4.4 2.4l2.8 1.2l7 2.1l3.6 0.8l6.8 0.9l7.8 0.5l8.7 -0.2l3.9 -0.4l6.8 -1.1l7.4 -1.9l3 -1.1l4.7 -2.2l16.2 0.3l15.9 -0.6l15.9 -1.6l14 -2.3l6.1 1.9l4.1 0.9l6.8 0.9l7.9 0.5l4.7 0l7.2 -0.5l4.5 -0.7l7.1 -1.5l3.3 -0.9l5.3 -2.1l4.7 -2.7l1.9 -1.5l1.5 -1.5l1.3 -1.9l0.7 -1.7l0.3 -1.3l0 -1.7l-0.3 -1.6l-0.8 -1.7l-1.2 -1.6l-1.5 -1.5l-2.3 -1.7l-2.2 -1.4l-3.2 -1.5l2 -2.3l1.8 -2.3l1.4 -2.2l2 -4.4l0.6 -2.2l0.4 -2.5l0 -2.3l-0.3 -3.1l7.6 -1.2l6.2 -1.6l3.1 -1.1l2.8 -1.2l2.9 -1.6l3.7 -2.6l1.6 -1.6l2.7 3.7l1.9 3l1.4 3.1l1.1 3.1l0.7 3.2l0.2 4.7l-0.3 3.2l-1.2 4.7l-2 4.6l-2.9 4.6l-2.5 3l-4.3 4.3l-3.4 2.9l-5.6 4.1l-6.4 3.9l-4.7 2.5l-7.5 3.5l-5.4 2.3l-8.6 3.1l-9.1 2.8l-6.4 1.7l-9.8 2.3l-13.9 2.5l-14.3 1.9l-15.1 1.4l-14.5 2.5l-11.3 1.7l-13.8 1.8l-14 1.5l-21.3 1.7l-23.9 1l-21.7 0.1z"/>
<path d="M377.8 242.9l5.4 -3.1l7.3 -3.6l8 -3.4l8.6 -3.1l9.1 -2.8l9.6 -2.5l10 -2.2l9.8 -1.7l-1.8 2.3l-0.9 2l-0.3 1.6l0 1.4l0.5 1.8l-12.9 3.2l-8.7 2.8l-8.3 3.2l-7.6 3.7l-7.1 -0.7l-7.9 -0.1l-7.9 0.5z"/>
<path d="M597.3 233.8l-7.1 -0.1l-7.8 0.6l-6.8 1.1l-6.6 1.7l-10.9 -3.8l-9.4 -2.6l-14.3 -2.9l-10.8 -1.5l-0.5 -2.5l-0.8 -1.6l-1 -1.3l-1.8 -1.8l-2.9 -2l11.1 0.8l10.8 1.2l10.7 1.5l10.2 1.9l9.9 2.2l9.5 2.6l8.9 2.8z"/>
<path d="M331.9 337.5l-5 -2.7l-2.6 -2.1l-1.9 -2.1l-0.7 -1.2l-0.9 -2.2l-0.1 -2.4l0.6 -2.3l1.4 -2.4l34.4 -47.7l4 1.6l3.7 1.2l4 1.1l6 1.1l1.6 4.2l1.4 2.6l3.3 4.4l2.1 2.3l2.7 2.5l5.2 3.9l3.6 2.3l4.1 2.4l-0.6 1.1l-0.8 1.9l-0.4 2l0.1 2l0.6 1.9l1 1.9l1.5 1.9l1.3 1.3l2.2 1.7l2.6 1.6l3.9 2l6 2.2l8 2l8.9 1.4l6 0.4l8 0.1l6.1 -0.3l9.1 -1.1l7.2 -1.4l5.1 -1.5l6.1 -2.4l13.2 0.2l16.7 -0.7l12.1 -1.1l15.7 -2.2l4.3 1.1l7.2 1.4l6 0.7l7.8 0.4l6.2 0l4.7 -0.3l7.7 -0.9l5.3 -0.9l-10.6 3.7l-8.8 2.6l-12.5 3l-9.7 1.8l-13.5 2l-18.8 1.8l-19.4 3.3l-15.6 2.2l-13.6 1.5l-16 1.4l-18.5 1.1l-18.7 0.6l-18.6 0l-21.1 -0.5l-8.2 0.2l-5.5 0l-8.1 -0.7l-7.7 -1.3l-6.8 -2z"/>
<path d="M613 305.1l1.1 -2.4l0.4 -2l-0.2 -2l-0.5 -1.9l-0.7 -1.4l-1.3 -1.8l-2.4 -2.4l-2.4 -1.7l-3 -1.8l2.2 -2.8l1.5 -2.4l1.3 -2.4l0.9 -2.4l0.7 -2.4l0.4 -2.4l0.1 -3.6l6.3 -1.4l3.9 -1.1l3.7 -1.2l3.6 -1.6l1.2 2.6l1 2.9l0.9 4.5l0 3l-0.2 3l-1.2 4.4l-1.9 4.4l-1.8 2.9l-2.1 2.9l-2.5 2.8l-2.8 2.8z"/>
<path d="M579.5 231.4l-3.8 0.5l-5.9 1.2l-7.7 -2.5l-9.8 -2.6l-10.3 -2.2l-11.3 -1.9l-1.2 -2.6l13.5 1.7l13.1 2.3l12.4 2.9z"/>
<path d="M395.5 238.5l8.1 -3.4l10.9 -3.8l8.8 -2.6l11.9 -2.8l-0.1 2l-9.6 2.5l-8.7 2.8l-8.6 3.3l-5.3 2.4z"/>
<path d="M337.4 335.4l-2.9 -1.5l-2.4 -1.6l-2.5 -2.6l-1 -1.9l-0.4 -1.9l0.2 -1.9l0.3 -1l1.1 -2l31.1 -43.1l7 1.7l1.3 3l1.4 2.5l3.4 4.5l2.2 2.4l2.6 2.4l3.3 2.7l3.1 2.2l5.5 3.4l-0.8 2.1l-0.4 2.2l0.1 1.4l0.4 2.3l1.6 3.1l1 1.3l2 2.1l3.6 2.8l5.3 2.9l3.8 1.6l4.2 1.5l6.4 1.7l7.8 1.5l7.4 0.9l8.6 0.5l7.6 -0.1l8.6 -0.6l10.3 -1.5l4.9 -1.1l4.5 -1.3l6 -2.1l15.6 0l12.3 -0.5l13.2 -1.2l12.8 -1.8l9.6 1.9l5.2 0.7l6.2 0.5l-9.1 2l-12.4 2.1l-9.7 1.2l-15.6 1.5l-17.8 3l-15.1 2.2l-22 2.4l-22.4 1.6l-13.6 0.6l-15.9 0.3l-15.9 -0.2l-16.4 -0.5l-8.8 0.3l-4.5 -0.1l-6.7 -0.5l-4.2 -0.7l-5.9 -1.4z"/>
<path d="M618.5 292.1l-2.6 -2.5l-3.5 -2.5l2.6 -3.8l1.5 -3l1.6 -4.7l0.5 -4.4l4.8 -1.2l0.6 2.7l0.3 2.8l-0.1 2.8l-0.5 2.9l-0.8 2.8l-1.1 2.8l-1.5 2.7z"/>
<path d="M342.9 333.2l-3.2 -1.7l-1.7 -1.4l-1.2 -1.4l-1 -2.2l-0.1 -1.5l0.4 -1.5l0.9 -1.6l26.2 -36.3l1.6 2.5l2.1 2.6l2.4 2.5l2.6 2.5l6.3 4.8l4.6 3l-0.6 2.4l-0.2 1.2l0.2 2.6l0.4 1.3l1.1 2.6l0.7 1.2l2 2.4l1.3 1.3l4.3 3.3l5.7 3.1l4.3 1.9l4.8 1.6l7.6 2.1l8.5 1.6l5.9 0.8l6.1 0.5l9.1 0.3l9.4 -0.2l8.9 -0.8l8.8 -1.4l8.1 -1.9l7 -2.3l8.2 0.1l13.1 -0.4l12.9 -1l16.4 -2l1.2 0.3l-12.6 1.7l-15.8 1.5l-22.5 3.7l-19 2.5l-19.3 1.9l-19.7 1.2l-13.2 0.4l-13.2 0.2l-13.2 -0.1l-16.6 -0.5l-12.8 0.2l-5.3 -0.4l-4.9 -0.9l-4.4 -1.2z"/>
<path d="M349.3 331.5l-3.2 -1.7l-1.2 -1l-0.9 -1l-0.6 -1l-0.2 -1.1l0.3 -1.7l0.7 -1.3l19.5 -27l5.4 4.6l5.9 4l-0.5 2.8l0.3 2.9l0.9 2.9l0.7 1.3l0.9 1.5l2.2 2.8l4.4 3.8l6 3.6l6.9 3.2l8.2 2.7l8.9 2.1l-19.7 0.1l-20.9 -0.5l-12.4 0.2l-6.2 -0.7l-2.3 -0.5z"/>
<path d="M373.7 330.3l-11.2 0.3l-4.6 -0.5l-2.8 -0.7l-2.2 -1l-1.2 -0.9l-0.9 -1.2l-0.1 -1.4l0.8 -1.4l14.1 -19.5l1.7 1.1l-0.2 3.5l0.2 1.8l1.1 3.2l1.7 3.1l2.5 3l3.2 2.9l3.9 2.8l4.4 2.6l6.2 2.8z"/>
<path d="M373.4 327.2l-11.8 0.1l-1.4 -0.3l-1.1 -0.4l-0.7 -0.6l-0.2 -0.7l0.5 -0.9l4.5 -6.4l3.8 4.2l2.2 2z"/>
<path d="M435.5 178.6l1.8 3.7l3.2 3.5l4.4 3.3l5.5 2.9l6.6 2.5l7.3 2l8.1 1.5l8.4 0.9l8.7 0.4l8.8 -0.2l8.5 -0.8l8.1 -1.3l7.5 -1.8l6.7 -2.3l5.8 -2.7l4.7 -3l3.5 -3.3l2.3 -3.4l0.9 -3.5l-0.3 -3.6l-1.7 -3.4l-3 -3.3l-4.1 -3l-5.2 -2.7l-6.2 -2.4l-6.9 -1.8l-7.5 -1.4l-7.9 -0.9l-8.1 -0.4l-8.2 0.2l-8 0.7l-7.5 1.3l-7 1.7l-6.3 2.1l-5.4 2.5l-4.4 2.8l-3.3 3.1l-2.1 3.2l-0.8 3.3l0.3 3.3l1.6 3.2l2.8 3.1l3.9 2.8l4.8 2.5l5.7 2.2l6.5 1.7l7 1.3l7.4 0.8l7.5 0.3l7.6 -0.1l7.4 -0.7l7.1 -1.2l6.5 -1.5l5.8 -2l5 -2.4l4.1 -2.6l3 -2.8l1.9 -3l0.8 -3.1l-0.3 -3l-1.5 -3l-2.6 -2.8l-3.6 -2.7l-4.5 -2.3l-5.3 -2l-6 -1.6l-6.5 -1.2l-6.8 -0.7l-7 -0.3l-7 0.1l-6.9 0.7l-6.5 1l-6 1.5l-5.4 1.9l-4.6 2.1l-3.7 2.4l-2.8 2.7l-1.8 2.7l-0.7 2.8l0.3 2.9l1.4 2.7l2.4 2.6l3.3 2.4l4.2 2.2l4.9 1.8l5.5 1.5l6 1.1l6.3 0.7l6.4 0.2l6.5 -0.2l6.2 -0.5l6 -1l5.5 -1.4l5 -1.7l4.2 -2l3.4 -2.2l2.5 -2.4l1.6 -2.5l0.7 -2.6l-0.4 -2.6l-1.2 -2.5l-2.2 -2.4l-3.1 -2.2l-3.8 -1.9l-4.5 -1.7l-5 -1.4l-5.5 -1l-5.7 -0.6l-5.9 -0.2l-5.9 0.2l-5.7 0.5l-5.5 0.9l-5 1.3l-4.4 1.5l-3.9 1.8l-3.1 2l-2.3 2.2l-1.4 2.3l-0.6 2.4l0.3 2.3l1.2 2.3l2 2.2l2.8 1.9l3.5 1.8l4.1 1.5l4.5 1.2l5 0.9l5.2 0.6l5.3 0.2l5.3 -0.2l5.2 -0.5l4.9 -0.8l4.5 -1.1l4 -1.4l3.5 -1.7l2.7 -1.8l2.1 -2l1.3 -2l0.4 -2.1l-0.3 -2.2l-1 -2l-1.9 -1.9l-2.5 -1.8l-3.1 -1.6l-3.7 -1.3l-4.1 -1.1l-4.4 -0.8l-4.7 -0.5l-4.7 -0.2l-4.8 0.2l-4.6 0.4l-4.3 0.8l-4 1l-3.6 1.2l-3.1 1.5l-2.4 1.6l-1.8 1.8l-1.1 1.8l-0.4 1.9l0.3 1.9l0.9 1.8l1.7 1.7l2.2 1.6l2.8 1.4l3.2 1.1l3.7 1l3.9 0.7l4.1 0.4l4.2 0.1l4.2 -0.1l4 -0.4l3.9 -0.7l3.5 -0.9l3.1 -1.1l2.6 -1.3l2.2 -1.4l1.5 -1.5l1 -1.6l0.3 -1.7l-0.3 -1.6l-0.8 -1.6l-1.5 -1.5l-2 -1.3l-2.4 -1.2l-2.8 -1.1l-3.2 -0.8l-3.4 -0.6l-3.6 -0.3l-3.6 -0.1l-7.1 0.5l-3.3 0.5l-3 0.8l-2.7 1l-2.2 1.1l-1.8 1.2l-1.3 1.4l-0.8 1.3l-0.3 1.5l0.3 1.3l0.7 1.4l1.3 1.2l1.7 1.2l2.1 1l2.4 0.9l2.7 0.7l2.9 0.4l6.1 0.4l6 -0.4l2.7 -0.5l4.7 -1.5l1.9 -0.9l1.5 -1.1l1.1 -1.1l0.6 -1.2l0.2 -1.1l-0.3 -1.2l-0.6 -1.1l-1.1 -1l-1.4 -1l-3.8 -1.5l-2.2 -0.5l-4.9 -0.6l-5 0l-2.3 0.3l-4.3 1l-3.2 1.4l-1.2 0.8l-0.8 0.9l-0.5 1l-0.1 0.9l0.3 0.9l0.5 0.9l2.1 1.5l3 1.2l1.7 0.4l3.8 0.4l3.9 0l1.8 -0.3l3.2 -0.7l1.3 -0.5l1.9 -1.3l0.6 -0.7l0.3 -0.7l0 -0.7l-0.6 -1.3l-0.7 -0.6l-2 -0.9l-2.5 -0.7l-4.1 -0.3l-2.6 0.3l-3 1l-0.7 0.4l-0.8 0.9l-0.2 0.5l0.3 0.9"/>
</g>
<ellipse cx="445.1" cy="251.6" rx="22.5" ry="9.4" fill="#032a58" opacity=".72"/>
<ellipse cx="566.4" cy="244.7" rx="22.5" ry="9.4" fill="#032a58" opacity=".72"/>
<ellipse cx="392.5" cy="203.0" rx="22.5" ry="9.4" fill="#032a58" opacity=".72"/>
<ellipse cx="592.9" cy="195.0" rx="22.5" ry="9.4" fill="#032a58" opacity=".72"/>
<g fill="none" stroke="#c6f7f9" stroke-width="1.12">
<path d="M429.3 252.4l0.6 1l0.9 0.9l2.9 1.7l3.8 1.1l2.2 0.4l4.6 0.2l4.4 -0.3l2.1 -0.4l3.5 -1.1l2.5 -1.5l0.8 -0.8l0.4 -0.9l0.1 -0.8l-0.1 -0.9l-0.6 -0.8l-1.8 -1.5l-2.8 -1.1l-1.7 -0.4l-3.6 -0.4l-3.6 0l-1.8 0.2l-3.1 0.8l-2.3 1l-0.9 0.6l-0.9 1.4l0 0.6l0.1 0.7l0.5 0.6l1.5 1.2l2.2 0.8l4 0.6l2.7 -0.1l3.6 -0.7l0.9 -0.4l1.3 -0.9l0.4 -0.5l0.2 -0.9l-0.5 -1l-1.1 -0.7l-1.6 -0.6l-1.8 -0.3l-1.9 0l-2.5 0.4l-1.3 0.4l-0.9 0.9l0 0.6l0.7 0.8l1.4 0.5l1.6 0.1"/>
<path d="M550.6 245.5l0.6 1l1 0.9l2.9 1.7l3.8 1.1l2.2 0.4l4.5 0.2l4.5 -0.3l2.1 -0.4l3.5 -1.1l2.5 -1.5l0.7 -0.8l0.5 -0.9l0.1 -0.8l-0.2 -0.9l-0.5 -0.8l-1.8 -1.5l-2.9 -1.1l-1.6 -0.4l-3.6 -0.4l-3.7 0l-1.7 0.2l-3.1 0.7l-2.3 1.1l-0.9 0.6l-0.9 1.4l-0.1 0.6l0.2 0.7l0.4 0.6l1.6 1.1l2.1 0.9l4.1 0.6l2.7 -0.1l3.6 -0.7l0.9 -0.4l1.3 -0.9l0.4 -0.5l0.2 -0.9l-0.5 -1l-1.1 -0.7l-1.6 -0.6l-1.9 -0.3l-1.9 0l-2.5 0.4l-1.2 0.4l-0.9 0.9l-0.1 0.6l0.8 0.8l1.4 0.5l1.6 0.1"/>
<path d="M376.8 203.7l0.6 1l0.9 1l2.9 1.6l3.8 1.2l2.2 0.3l4.6 0.3l4.4 -0.4l2.1 -0.3l3.5 -1.1l2.5 -1.5l0.8 -0.8l0.4 -0.9l0.1 -0.9l-0.2 -0.8l-0.5 -0.9l-1.8 -1.4l-2.8 -1.1l-1.7 -0.4l-3.6 -0.5l-3.6 0.1l-1.8 0.2l-3.1 0.7l-2.3 1.1l-0.9 0.6l-0.9 1.3l0 0.7l0.1 0.7l0.5 0.6l1.5 1.1l2.2 0.8l4 0.6l2.7 0l3.6 -0.8l0.9 -0.3l1.3 -0.9l0.4 -0.5l0.2 -1l-0.5 -0.9l-1.1 -0.8l-1.6 -0.5l-1.8 -0.3l-1.9 -0.1l-2.5 0.4l-1.3 0.5l-0.9 0.9l0 0.6l0.7 0.8l1.4 0.4l1.6 0.1"/>
<path d="M577.2 195.8l0.5 1l1 0.9l2.9 1.6l3.8 1.2l2.2 0.3l4.6 0.3l4.4 -0.3l2.1 -0.4l3.5 -1.1l2.5 -1.5l0.7 -0.8l0.5 -0.9l0.1 -0.8l-0.2 -0.9l-0.5 -0.8l-1.8 -1.5l-2.8 -1.1l-1.7 -0.4l-3.6 -0.4l-3.6 0l-1.8 0.2l-3.1 0.7l-2.3 1.1l-0.9 0.6l-0.9 1.3l-0.1 0.7l0.2 0.7l0.5 0.6l1.5 1.1l2.2 0.9l4 0.6l2.7 -0.1l3.6 -0.7l0.9 -0.4l1.3 -0.9l0.4 -0.5l0.2 -0.9l-0.5 -1l-1.1 -0.7l-1.6 -0.6l-1.9 -0.3l-1.8 0l-2.6 0.3l-1.2 0.5l-0.9 0.9l0 0.6l0.7 0.8l1.4 0.5l1.6 0.1"/>
</g>
<ellipse cx="444.3" cy="248.0" rx="4.2" ry="2.1" fill="#5f8f8c" opacity=".75"/>
<circle cx="445.1" cy="251.6" r="1.3" fill="#f4ffff"/>
<ellipse cx="565.6" cy="241.1" rx="4.2" ry="2.1" fill="#5f8f8c" opacity=".75"/>
<circle cx="566.4" cy="244.7" r="1.3" fill="#f4ffff"/>
<ellipse cx="391.7" cy="199.4" rx="4.2" ry="2.1" fill="#5f8f8c" opacity=".75"/>
<circle cx="392.5" cy="203.0" r="1.3" fill="#f4ffff"/>
<ellipse cx="592.1" cy="191.4" rx="4.2" ry="2.1" fill="#5f8f8c" opacity=".75"/>
<circle cx="592.9" cy="195.0" r="1.3" fill="#f4ffff"/>
<circle cx="367.9" cy="322.8" r="1.3" fill="#f4ffff"/>
<!-- rapid moves (magenta) and plunges (red) -->
<g fill="none" stroke="#f81cf4" stroke-width="1.150" stroke-dasharray="3.200 2.600">
<path d="M381 156V203"/><path d="M405.500 153V309"/><path d="M468.500 122V226"/><path d="M438.500 234.600V247"/><path d="M467 234.600V286.600H494"/><path d="M579.800 234.600V241"/>
<path d="M438.500 234.600H579.800"/><path d="M381 155L469 142.500L529 136L588 142L632 182V195"/>
<path d="M381 155L448 158L500 166"/><path d="M469 116L467 121"/><path d="M514.700 113L489 146L452 178"/>
<path d="M529 136L560 168L592 200L606 228"/><path d="M588 142L548 150L505 158L470 176"/>
<path d="M430 160L462 152L500 147L540 150"/><path d="M452 178L478 190L520 188L556 176"/><path d="M478 190L474 235"/>
<path d="M500 166L522 200L546 222"/><path d="M606 228L594 236"/><path d="M582.700 182.500V195"/><path d="M591.700 164.500L630 181.700"/>
</g>
<g fill="none" stroke="#f01414" stroke-width="1.100" stroke-dasharray="3.200 2.400">
<path d="M514.700 113V199"/><path d="M587 142V176"/><path d="M528.400 134V148"/><path d="M395 155V191"/><path d="M561.500 210V235"/><path d="M540 150V163"/><path d="M452 168V180"/><path d="M500 147V158"/>
</g>
<g fill="#f01414"><rect x="513.500" y="111.500" width="2.400" height="2.400"/><rect x="593" y="235" width="2.400" height="2.400"/><rect x="447" y="177" width="2" height="2"/><rect x="477" y="189" width="2" height="2"/><rect x="519" y="187" width="2" height="2"/><rect x="555" y="175" width="2" height="2"/><rect x="437" y="234" width="2" height="2"/></g>
<!-- origin axes -->
<g fill="none" stroke-width=".9"><path d="M495.700 283.700V262.500" stroke="#8a8a8a"/><path d="M495.700 283.700L480 277" stroke="#8a7a6a"/><path d="M495.700 283.700L511 278" stroke="#8a7a6a"/></g>
<path d="M495.700 260l-1.500 3.500h3z" fill="#9a9a9a"/><circle cx="495.700" cy="283.700" r="1.700" fill="#22e8e8"/>
<g font-family="Liberation Mono, monospace" font-size="7.500" font-weight="bold"><text x="498" y="260.500" fill="#f02020">Z</text><text x="477.500" y="275.500" fill="#20e020">Y</text><text x="515" y="275" fill="#2030f0">X</text></g>
<!-- measurement -->
<path d="M381 155L631 321.500" stroke="#000" stroke-width="3.200" stroke-linecap="round"/>
<path d="M381 155L467.300 121.300" stroke="#0a0af6" stroke-width="3.200"/>
<path d="M467 121.200L631.500 195.500" stroke="#0af60a" stroke-width="3.200" stroke-linecap="round"/>
<path d="M631 195V321.500" stroke="#f60a0a" stroke-width="3.200"/>
<rect x="377.800" y="152.500" width="3.600" height="6" fill="#f60a0a"/><rect x="629" y="319" width="4" height="4.500" fill="#f60a0a"/>
<g stroke="#8c8c8c" stroke-width=".9"><path d="M424 114V136"/><path d="M549 135V156"/><path d="M506 214V237"/><path d="M631 237V258"/></g>
<g fill="#fae414"><rect x="422" y="136" width="4" height="4"/><rect x="547" y="156" width="4" height="4"/><rect x="504" y="237" width="4" height="4"/><rect x="629" y="258" width="4" height="3.600"/></g>

</svg>
<div class="abs lbl" style="left:207px;top:40.500px;width:68px;height:12px">dX=53,675</div>
<div class="abs lbl" style="left:332px;top:61px;width:74.500px;height:12.500px">dY=109,756</div>
<div class="abs lbl" style="left:289px;top:141px;width:88px;height:12.500px;font-weight:bold">Dist=137,445</div>
<div class="abs lbl" style="left:414px;top:162px;width:68px;height:12.500px">dZ=62,959</div>

</div>
<!-- NC code panel -->
<div class="abs" style="left:215px;top:385px;width:559px;height:205px;background:#eceef8"></div>
<div class="abs" style="left:215px;top:385px;width:559px;height:18px;background:linear-gradient(#e4e8f6,#d6dbef)"></div>
<span class="t" style="left:218.50px;top:388.54px;font-size:9.6px;line-height:11.52px;height:11.52px;color:#000;letter-spacing:-0.410px;">D:\Slava\My Sources\NC Corrector v4.0new\Samples\Arcs\HIGHSPEED SMOOTHSTEP.NC</span>
<svg style="left:749px;top:390px" width="6" height="8" viewBox="0 0 6 8"><path d="M1.500 .5h3v3.500h-3zM.3 4.300h5.400M3 4.300v3.400M4 .5v3.500" stroke="#000" stroke-width=".9" fill="none"/></svg>
<svg style="left:762px;top:391px" width="7" height="7" viewBox="0 0 7 7"><path d="M.6 .6l5.800 5.800M6.400 .6l-5.800 5.800" stroke="#000" stroke-width="1.500"/></svg>
<div class="abs" style="left:215px;top:403px;width:559px;height:187px;background:#fff;border:1px solid #98a3bf;border-left-color:#6a7488;border-top-color:#7a8498"></div>
<div class="abs" style="left:217.5px;top:405px;width:13px;height:184px;background:#f3f3f3"></div>
<div class="abs" style="left:230.8px;top:404px;width:1.2px;height:185px;background:#8a8f98"></div>
<div class="abs" style="left:264px;top:404px;width:1px;height:185px;background:repeating-linear-gradient(#4aa0a0 0 1px,#fff 1px 2px)"></div>
<div class="abs" style="left:265px;top:405px;width:494px;height:11.5px;background:#c6c6fa"></div>
<span class="t code" style="left:238.200px;top:404.60px;line-height:12px;height:12px;color:#008486;font-weight:normal;-webkit-text-stroke:.3px #008486;letter-spacing:.005px">2530</span>
<span class="t code" style="left:267.400px;top:404.60px;line-height:12px;height:12px;white-space:pre;letter-spacing:-.016px"><span style="color:#0c0c64">N5144</span> <span style="color:#0b8a10">X65.962</span> <span style="color:#00008c">Y18.471</span> <span style="color:#0b8a10">I-44.078</span> <span style="color:#00008c">J-52.461</span></span>
<span class="t code" style="left:238.200px;top:416.86px;line-height:12px;height:12px;color:#008486;font-weight:normal;-webkit-text-stroke:.3px #008486;letter-spacing:.005px">2531</span>
<span class="t code" style="left:267.400px;top:416.86px;line-height:12px;height:12px;white-space:pre;letter-spacing:-.016px"><span style="color:#0c0c64">N5146</span> <span style="color:#0b8a10">X68.499</span> <span style="color:#00008c">Y0.</span> <span style="color:#0b8a10">I-65.965</span> <span style="color:#00008c">J-18.471</span></span>
<span class="t code" style="left:238.200px;top:429.12px;line-height:12px;height:12px;color:#008486;font-weight:normal;-webkit-text-stroke:.3px #008486;letter-spacing:.005px">2532</span>
<span class="t code" style="left:267.400px;top:429.12px;line-height:12px;height:12px;white-space:pre;letter-spacing:-.016px"><span style="color:#0c0c64">N5148</span> <span style="color:#0b8a10">X62.383</span> <span style="color:#00008c">Y-28.295</span> <span style="color:#0b8a10">I-68.502</span> <span style="color:#00008c">J0.</span></span>
<span class="t code" style="left:238.200px;top:441.39px;line-height:12px;height:12px;color:#008486;font-weight:normal;-webkit-text-stroke:.3px #008486;letter-spacing:.005px">2533</span>
<span class="t code" style="left:267.400px;top:441.39px;line-height:12px;height:12px;white-space:pre;letter-spacing:-.016px"><span style="color:#0c0c64">N5150</span> <span style="color:#0b8a10">X34.946</span> <span style="color:#00008c">Y-58.915</span> <span style="color:#0b8a10">I-62.406</span> <span style="color:#00008c">J28.316</span></span>
<span class="t code" style="left:238.200px;top:453.65px;line-height:12px;height:12px;color:#008486;font-weight:normal;-webkit-text-stroke:.3px #008486;letter-spacing:.005px">2534</span>
<span class="t code" style="left:267.400px;top:453.65px;line-height:12px;height:12px;white-space:pre;letter-spacing:-.016px"><span style="color:#0c0c64">N5152</span> <span style="color:#0b8a10">X20.677</span> <span style="color:#00008c">Y-65.303</span> <span style="color:#0b8a10">I-34.898</span> <span style="color:#00008c">J58.824</span></span>
<span class="t code" style="left:238.200px;top:465.91px;line-height:12px;height:12px;color:#008486;font-weight:normal;-webkit-text-stroke:.3px #008486;letter-spacing:.005px">2535</span>
<span class="t code" style="left:267.400px;top:465.91px;line-height:12px;height:12px;white-space:pre;letter-spacing:-.016px"><span style="color:#0c0c64">N5154</span> <span style="color:#8c8200">G1</span> <span style="color:#0b8a10">X20.493</span> <span style="color:#00008c">Y-65.372</span> <span style="color:#d4a400">F4000</span><span style="color:#0c0c64">.</span></span>
<span class="t code" style="left:238.200px;top:478.17px;line-height:12px;height:12px;color:#008486;font-weight:normal;-webkit-text-stroke:.3px #008486;letter-spacing:.005px">2536</span>
<span class="t code" style="left:267.400px;top:478.17px;line-height:12px;height:12px;white-space:pre;letter-spacing:-.016px"><span style="color:#0c0c64">N5156</span> <span style="color:#8c8200">G3</span> <span style="color:#0b8a10">X19.287</span> <span style="color:#00008c">Y-67.208</span> <span style="color:#0b8a10">I.794</span> <span style="color:#00008c">J-1.836</span></span>
<span class="t code" style="left:238.200px;top:490.43px;line-height:12px;height:12px;color:#008486;font-weight:normal;-webkit-text-stroke:.3px #008486;letter-spacing:.005px">2537</span>
<span class="t code" style="left:267.400px;top:490.43px;line-height:12px;height:12px;white-space:pre;letter-spacing:-.016px"><span style="color:#0c0c64">N5158</span> <span style="color:#0b8a10">X19.382</span> <span style="color:#00008c">Y-67.817</span> <span style="color:#0b8a10">I2.</span> <span style="color:#00008c">J0.</span></span>
<span class="t code" style="left:238.200px;top:502.70px;line-height:12px;height:12px;color:#008486;font-weight:normal;-webkit-text-stroke:.3px #008486;letter-spacing:.005px">2538</span>
<span class="t code" style="left:267.400px;top:502.70px;line-height:12px;height:12px;white-space:pre;letter-spacing:-.016px"><span style="color:#0c0c64">N5160</span> <span style="color:#8c8200">G1</span> <span style="color:#0b8a10">X19.559</span> <span style="color:#00008c">Y-68.37</span> <span style="color:#f01010">Z-1.814</span></span>
<span class="t code" style="left:238.200px;top:514.96px;line-height:12px;height:12px;color:#008486;font-weight:normal;-webkit-text-stroke:.3px #008486;letter-spacing:.005px">2539</span>
<span class="t code" style="left:267.400px;top:514.96px;line-height:12px;height:12px;white-space:pre;letter-spacing:-.016px"><span style="color:#0c0c64">N5162</span> <span style="color:#0b8a10">X19.72</span> <span style="color:#00008c">Y-68.875</span> <span style="color:#f01010">Z-1.563</span></span>
<span class="t code" style="left:238.200px;top:527.22px;line-height:12px;height:12px;color:#008486;font-weight:normal;-webkit-text-stroke:.3px #008486;letter-spacing:.005px">2540</span>
<span class="t code" style="left:267.400px;top:527.22px;line-height:12px;height:12px;white-space:pre;letter-spacing:-.016px"><span style="color:#0c0c64">N5164</span> <span style="color:#0b8a10">X19.853</span> <span style="color:#00008c">Y-69.29</span> <span style="color:#f01010">Z-1.169</span></span>
<span class="t code" style="left:238.200px;top:539.48px;line-height:12px;height:12px;color:#008486;font-weight:normal;-webkit-text-stroke:.3px #008486;letter-spacing:.005px">2541</span>
<span class="t code" style="left:267.400px;top:539.48px;line-height:12px;height:12px;white-space:pre;letter-spacing:-.016px"><span style="color:#0c0c64">N5166</span> <span style="color:#0b8a10">X19.945</span> <span style="color:#00008c">Y-69.577</span> <span style="color:#f01010">Z-.665</span></span>
<span class="t code" style="left:238.200px;top:551.74px;line-height:12px;height:12px;color:#008486;font-weight:normal;-webkit-text-stroke:.3px #008486;letter-spacing:.005px">2542</span>
<span class="t code" style="left:267.400px;top:551.74px;line-height:12px;height:12px;white-space:pre;letter-spacing:-.016px"><span style="color:#0c0c64">N5168</span> <span style="color:#0b8a10">X19.988</span> <span style="color:#00008c">Y-69.713</span> <span style="color:#f01010">Z-.096</span></span>
<span class="t code" style="left:238.200px;top:564.01px;line-height:12px;height:12px;color:#008486;font-weight:normal;-webkit-text-stroke:.3px #008486;letter-spacing:.005px">2543</span>
<span class="t code" style="left:267.400px;top:564.01px;line-height:12px;height:12px;white-space:pre;letter-spacing:-.016px"><span style="color:#0c0c64">N5170</span> <span style="color:#0b8a10">X19.991</span> <span style="color:#00008c">Y-69.722</span> <span style="color:#f01010">Z.1</span></span>
<span class="t code" style="left:238.200px;top:576.27px;line-height:12px;height:12px;color:#008486;font-weight:normal;-webkit-text-stroke:.3px #008486;letter-spacing:.005px">2544</span>
<span class="t code" style="left:267.400px;top:576.27px;line-height:12px;height:12px;white-space:pre;letter-spacing:-.016px"><span style="color:#0c0c64">N5172</span> <span style="color:#8c8200">G0</span> <span style="color:#f01010">Z69.69</span></span>
<div class="abs" style="left:760px;top:404px;width:13px;height:185px;background:#f1f2f6"></div>
<svg style="left:763.500px;top:409px" width="6" height="4"><path d="M0 3.500h6l-3-3.500z" fill="#222"/></svg>
<svg style="left:763.500px;top:581px" width="6" height="4"><path d="M0 0h6l-3 3.500z" fill="#222"/></svg>
<div class="abs" style="left:760.5px;top:488.5px;width:12px;height:10.5px;background:linear-gradient(90deg,#f6f6f8 0,#e6e7ea 45%,#d4d6db 50%,#e0e1e5 100%);border:1px solid #9a9ca4;border-radius:2px"></div>
<!-- right vertical toolbars -->
<div class="abs" style="left:774px;top:63px;width:20px;height:528px;background:#eef0f9"></div>
<div class="abs" style="left:775.5px;top:64px;width:17px;height:249px;border-radius:3px;background:linear-gradient(90deg,#f6f8fd 0%,#e6eaf6 45%,#d3d9ec 100%)"></div>
<div class="abs" style="left:775.5px;top:305px;width:17px;height:8px;border-radius:0 0 3px 3px;background:linear-gradient(90deg,#dfe4f1,#b9c1d8)"></div>
<svg style="left:785.500px;top:306px" width="6" height="6"><path d="M.6 .4v5" stroke="#000" stroke-width="1.100"/><path d="M2.300 .2v5.400l3-2.700z" fill="#000"/></svg>
<svg style="left:778px;top:66.8px" width="12" height="3"><path d="M.5 1.500h11" stroke="#7f89a6" stroke-width="1.400" stroke-dasharray="1.300 1.700"/></svg>
<div class="abs" style="left:775.5px;top:380.5px;width:17px;height:108.5px;border-radius:3px;background:linear-gradient(90deg,#f6f8fd 0%,#e6eaf6 45%,#d3d9ec 100%)"></div>
<div class="abs" style="left:775.5px;top:481px;width:17px;height:8px;border-radius:0 0 3px 3px;background:linear-gradient(90deg,#dfe4f1,#b9c1d8)"></div>
<svg style="left:785.500px;top:482px" width="6" height="6"><path d="M.6 .4v5" stroke="#000" stroke-width="1.100"/><path d="M2.300 .2v5.400l3-2.700z" fill="#000"/></svg>
<svg style="left:778px;top:383.3px" width="12" height="3"><path d="M.5 1.500h11" stroke="#7f89a6" stroke-width="1.400" stroke-dasharray="1.300 1.700"/></svg>
<div class="abs" style="left:778px;top:172px;width:12px;height:1px;background:#9aa3bd;box-shadow:0 1px 0 #fff"></div>
<div class="abs" style="left:778px;top:245px;width:12px;height:1px;background:#9aa3bd;box-shadow:0 1px 0 #fff"></div>
<div class="abs" style="left:778px;top:283px;width:12px;height:1px;background:#9aa3bd;box-shadow:0 1px 0 #fff"></div>
<div class="abs" style="left:778px;top:422px;width:12px;height:1px;background:#9aa3bd;box-shadow:0 1px 0 #fff"></div>
<div class="abs" style="left:778px;top:460px;width:12px;height:1px;background:#9aa3bd;box-shadow:0 1px 0 #fff"></div>
<svg style="left:778px;top:73.0px" width="12" height="13" viewBox="0 0 12 13"><path d="M.5 4l3.500-3.500h7.500v8l-3.500 3.500h-7.500z" fill="#fbfbfd"/><path d="M.5 4l3.500-3.500h7.500l-3.500 3.500z" fill="#fbe822"/><path d="M.5 4h7.500v8h-7.500zM4 .5h7.500v8h-7.500zM.5 4l3.500-3.500M8 4l3.500-3.500M8 12l3.500-3.500M.5 12l3.500-3.500" fill="none" stroke="#20309c" stroke-width=".7"/></svg>
<svg style="left:778px;top:90.0px" width="12" height="13" viewBox="0 0 12 13"><path d="M.5 4l3.500-3.500h7.500v8l-3.500 3.500h-7.500z" fill="#fbfbfd"/><path d="M8 4l3.500-3.500v8l-3.500 3.500z" fill="#fbe822"/><path d="M.5 4h7.500v8h-7.500zM4 .5h7.500v8h-7.500zM.5 4l3.500-3.500M8 4l3.500-3.500M8 12l3.500-3.500M.5 12l3.500-3.500" fill="none" stroke="#20309c" stroke-width=".7"/></svg>
<svg style="left:778px;top:106.5px" width="12" height="13" viewBox="0 0 12 13"><path d="M.5 4l3.500-3.500h7.500v8l-3.500 3.500h-7.500z" fill="#fbfbfd"/><path d="M.5 4h7.500v8h-7.500z" fill="#fbe822"/><path d="M.5 4h7.500v8h-7.500zM4 .5h7.500v8h-7.500zM.5 4l3.500-3.500M8 4l3.500-3.500M8 12l3.500-3.500M.5 12l3.500-3.500" fill="none" stroke="#20309c" stroke-width=".7"/></svg>
<svg style="left:778px;top:123.5px" width="12" height="13" viewBox="0 0 12 13"><path d="M.5 4l3.500-3.500h7.500v8l-3.500 3.500h-7.500z" fill="#fbfbfd"/><path d="M.5 4l3.500-3.500v8l-3.500 3.500z" fill="#fbe822"/><path d="M.5 4h7.500v8h-7.500zM4 .5h7.500v8h-7.500zM.5 4l3.500-3.500M8 4l3.500-3.500M8 12l3.500-3.500M.5 12l3.500-3.500" fill="none" stroke="#20309c" stroke-width=".7"/></svg>
<svg style="left:778px;top:140.0px" width="12" height="13" viewBox="0 0 12 13"><path d="M.5 4l3.500-3.500h7.500v8l-3.500 3.500h-7.500z" fill="#fbfbfd"/><path d="M4 .5h7.500v8h-7.500z" fill="#fbe822"/><path d="M.5 4h7.500v8h-7.500zM4 .5h7.500v8h-7.500zM.5 4l3.500-3.500M8 4l3.500-3.500M8 12l3.500-3.500M.5 12l3.500-3.500" fill="none" stroke="#20309c" stroke-width=".7"/></svg>
<svg style="left:778px;top:157.0px" width="12" height="13" viewBox="0 0 12 13"><path d="M.5 4l3.500-3.500h7.500v8l-3.500 3.500h-7.500z" fill="#fbfbfd"/><path d="M.5 12l3.500-3.500h7.500l-3.500 3.500z" fill="#fbe822"/><path d="M.5 4h7.500v8h-7.500zM4 .5h7.500v8h-7.500zM.5 4l3.500-3.500M8 4l3.500-3.500M8 12l3.500-3.500M.5 12l3.500-3.500" fill="none" stroke="#20309c" stroke-width=".7"/></svg>
<svg style="left:777.5px;top:177.5px" width="13" height="13" viewBox="0 0 13 13"><path d="M1 6.500l4-2.500v-2l3-1.500l4.500 2v6l-7 4l-4.500-2.500z" fill="#2f8fe8" stroke="#0c3f8a" stroke-width=".8"/><path d="M5 4l3.500 1.500v2.500l-3.500 2l-4-2M8.500 5.500l4-3" fill="none" stroke="#bfe0fb" stroke-width=".8"/></svg>
<svg style="left:777.5px;top:195.0px" width="13" height="13" viewBox="0 0 13 13"><path d="M1 4.500l4-3l2 1v2.500l3 1.500l2.500-1.500v4l-7 3.500l-4.500-2.500z" fill="#2f8fe8" stroke="#0c3f8a" stroke-width=".8"/><path d="M5 1.500v4l4.500 2.500M1 4.500l4.500 2" fill="none" stroke="#bfe0fb" stroke-width=".8"/></svg>
<svg style="left:777.5px;top:212.2px" width="13" height="13" viewBox="0 0 13 13"><path d="M1 2.500l4-1.500l7.500 4.500v4l-3.500 2.500l-8-3.500z" fill="#2f8fe8" stroke="#0c3f8a" stroke-width=".8"/><path d="M1 2.500l5.500 3v5M6.500 5.500l3-1.500" fill="none" stroke="#bfe0fb" stroke-width=".8"/></svg>
<svg style="left:777.5px;top:229.5px" width="13" height="13" viewBox="0 0 13 13"><path d="M.8 7l5-4.500l6.500-1v6.500l-5 4.500l-6.500-1z" fill="#2f8fe8" stroke="#0c3f8a" stroke-width=".8"/><path d="M7.300 6v6M3 8h2v2h-2z" fill="none" stroke="#bfe0fb" stroke-width=".8"/></svg>
<svg style="left:777.500px;top:250px" width="13" height="13" viewBox="0 0 13 13"><path d="M8.500 8.500l3.500 3.500" stroke="#e08a1a" stroke-width="1.800" stroke-linecap="round"/><circle cx="5.500" cy="5.500" r="4.700" fill="#f6f8fc" stroke="#7a78c8" stroke-width=".9"/><path d="M3.800 3h2.400l1.200 1.200v3.800h-3.600z" fill="#3a8ae0" stroke="#1a4f9a" stroke-width=".4"/></svg>
<svg style="left:777.500px;top:267px" width="13" height="13" viewBox="0 0 13 13"><path d="M1 1.500h9" stroke="#1a1ad0" stroke-width="1" stroke-dasharray="1.500 1"/><path d="M11 2v8" stroke="#1a1ad0" stroke-width="1" stroke-dasharray="1.500 1"/><path d="M1 1.500v10h9" stroke="#2a8a2a" stroke-width=".9" fill="none"/><path d="M9.200 1.500h3.400M11 0v3.200" stroke="#e01a1a" stroke-width="1"/><circle cx="5.800" cy="6.400" r="3.600" fill="#e4f1fb" stroke="#8a9ab8" stroke-width=".8"/><path d="M8.500 9.200l3 3" stroke="#e08a1a" stroke-width="1.600" stroke-linecap="round"/></svg>
<div class="abs" style="left:775.5px;top:286.5px;width:17px;height:16px;background:#c9e2f4;border:1px solid #3f8fc8"></div>
<svg style="left:777px;top:288px" width="14" height="13" viewBox="0 0 14 13"><path d="M13 1l-6 7" stroke="#222" stroke-width="2" stroke-linecap="round"/><path d="M1 8.500l3 2.500l3.500-.5l1.500-2.500l-2-1.500l-2.500 2.500z" fill="#fff" stroke="#222" stroke-width="1.100"/></svg>
<svg style="left:778px;top:389px" width="12" height="12" viewBox="0 0 12 12"><path d="M1.500 10.500l9-9" stroke="#1a3fe0" stroke-width="1.200"/><rect x="0" y="9" width="3" height="3" fill="#e81a1a"/><rect x="9" y="0" width="3" height="3" fill="#e81a1a"/></svg>
<svg style="left:778px;top:407px" width="12" height="10" viewBox="0 0 12 10"><path d="M1.500 8q0-6 8.500-6.500" stroke="#1a3fe0" stroke-width="1.200" fill="none"/><path d="M5 9.500h3v-3z" fill="#e81a1a"/></svg>
<div class="abs" style="left:775.5px;top:424.5px;width:17px;height:16.5px;background:#c9e2f4;border:1px solid #3f8fc8"></div>
<div class="abs" style="left:775.5px;top:441px;width:17px;height:16.5px;background:#c9e2f4;border:1px solid #3f8fc8"></div>
<svg style="left:778px;top:427px" width="12" height="12" viewBox="0 0 12 12"><path d="M1 11l10-10" stroke="#e81a1a" stroke-width="1.300" stroke-dasharray="1.600 1.200"/></svg>
<svg style="left:777.500px;top:443px" width="13" height="12" viewBox="0 0 13 12"><path d="M1 7q5 0 6-3t5-2.500" stroke="#666" stroke-width="1.100" fill="none"/><path d="M2 10h4l3-4h3" stroke="#1a3fe0" stroke-width="1" fill="none"/><rect x=".5" y="8.500" width="3" height="3" fill="#e81a1a"/><rect x="8" y="4.500" width="3" height="3" fill="#e81a1a"/></svg>
<svg style="left:778px;top:465px" width="12" height="12" viewBox="0 0 12 12"><path d="M1 3.500l5-2.500l5 2.500v5l-5 3l-5-3z" fill="#dfe2f0" stroke="#a9aed0" stroke-width=".8"/><path d="M1 3.500l5 2.500l5-2.500M6 6v5.500" stroke="#b9bedc" stroke-width=".8" fill="none"/></svg>
<!-- status bar -->
<div class="abs" style="left:8px;top:591px;width:786px;height:18px;border-radius:3px;background:linear-gradient(#f6f8fd 0%,#e6eaf6 45%,#d3d9ec 100%)"></div>
<div class="abs" style="left:785px;top:591px;width:9px;height:18px;border-radius:0 3px 3px 0;background:linear-gradient(#dfe4f1,#b9c1d8)"></div>
<svg style="left:786px;top:594px" width="7" height="13"><path d="M1 .5v2M5.500 .5v2" stroke="#000" stroke-width="1.400"/><path d="M.5 6.500h6" stroke="#000" stroke-width="1.200"/><path d="M.6 9h5.800l-2.900 3z" fill="#000"/></svg>
<svg style="left:10px;top:594px" width="3" height="13"><path d="M1.500 .5v12" stroke="#7f89a6" stroke-width="1.400" stroke-dasharray="1.300 1.700"/></svg>
<svg style="left:0;top:0" width="800" height="631"><defs><radialGradient id="led" cx=".4" cy=".35" r=".7"><stop offset="0" stop-color="#e4e4e6"/><stop offset="1" stop-color="#b4b5ba"/></radialGradient></defs>
<circle cx="22" cy="600.300" r="4.800" fill="url(#led)" stroke="#c9cbd2" stroke-width=".6"/>
<circle cx="88" cy="600.300" r="4.800" fill="url(#led)" stroke="#c9cbd2" stroke-width=".6"/>
<circle cx="153.5" cy="600.300" r="4.800" fill="url(#led)" stroke="#c9cbd2" stroke-width=".6"/>
<circle cx="220" cy="600.300" r="4.800" fill="url(#led)" stroke="#c9cbd2" stroke-width=".6"/>
<circle cx="285.5" cy="600.300" r="4.800" fill="url(#led)" stroke="#c9cbd2" stroke-width=".6"/>
<circle cx="351" cy="600.300" r="4.800" fill="url(#led)" stroke="#c9cbd2" stroke-width=".6"/>
<circle cx="417" cy="600.300" r="4.800" fill="url(#led)" stroke="#c9cbd2" stroke-width=".6"/>
<circle cx="487" cy="600.300" r="4.800" fill="url(#led)" stroke="#c9cbd2" stroke-width=".6"/>
</svg>
<span class="t" style="left:29.50px;top:594.76px;font-size:9.4px;line-height:11.28px;height:11.28px;color:#000;letter-spacing:-0.349px;">X=-60,364</span>
<span class="t" style="left:95.50px;top:594.76px;font-size:9.4px;line-height:11.28px;height:11.28px;color:#000;letter-spacing:-0.302px;">Y=-4,908</span>
<span class="t" style="left:161.00px;top:594.76px;font-size:9.4px;line-height:11.28px;height:11.28px;color:#000;letter-spacing:-0.322px;">Z=69,69</span>
<span class="t" style="left:227.50px;top:594.76px;font-size:9.4px;line-height:11.28px;height:11.28px;color:#000;letter-spacing:-0.265px;">A=0,0</span>
<span class="t" style="left:293.00px;top:594.76px;font-size:9.4px;line-height:11.28px;height:11.28px;color:#000;letter-spacing:-0.265px;">B=0,0</span>
<span class="t" style="left:358.50px;top:594.76px;font-size:9.4px;line-height:11.28px;height:11.28px;color:#000;letter-spacing:-0.125px;">R=None</span>
<span class="t" style="left:424.50px;top:594.76px;font-size:9.4px;line-height:11.28px;height:11.28px;color:#000;letter-spacing:-0.360px;">F=0,0</span>
<span class="t" style="left:494.50px;top:594.76px;font-size:9.4px;line-height:11.28px;height:11.28px;color:#000;letter-spacing:-0.025px;">S=Off</span>
<div class="sep" style="left:77px;top:594px;height:12px;background:#a5adc6"></div>
<div class="sep" style="left:143px;top:594px;height:12px;background:#a5adc6"></div>
<div class="sep" style="left:209px;top:594px;height:12px;background:#a5adc6"></div>
<div class="sep" style="left:274.5px;top:594px;height:12px;background:#a5adc6"></div>
<div class="sep" style="left:340px;top:594px;height:12px;background:#a5adc6"></div>
<div class="sep" style="left:405.5px;top:594px;height:12px;background:#a5adc6"></div>
<div class="sep" style="left:476px;top:594px;height:12px;background:#a5adc6"></div>
<div class="sep" style="left:546px;top:594px;height:12px;background:#a5adc6"></div>
<div class="sep" style="left:600.5px;top:594px;height:12px;background:#a5adc6"></div>
<svg style="left:553px;top:594px" width="8" height="12" viewBox="0 0 8 12"><path d="M4 .6c1 2.800 3.400 4.800 3.400 7.200a3.400 3.400 0 0 1-6.800 0c0-2.400 2.400-4.400 3.400-7.200z" fill="#d6ebfb" stroke="#3c8ad6" stroke-width=".9"/><path d="M2.300 8.200q.3 1.600 1.700 1.900" stroke="#fff" stroke-width=".8" fill="none"/></svg>
<span class="t" style="left:564.00px;top:594.76px;font-size:9.4px;line-height:11.28px;height:11.28px;color:#000;letter-spacing:-0.084px;">=Flood</span>
<svg style="left:605px;top:594px" width="13" height="13" viewBox="0 0 13 13"><circle cx="2.600" cy="2.400" r="1.800" fill="#e8c86a" stroke="#9a7a20" stroke-width=".5"/><circle cx="10.400" cy="2.400" r="1.800" fill="#e8c86a" stroke="#9a7a20" stroke-width=".5"/><circle cx="6.500" cy="7" r="5" fill="#fdfdfd" stroke="#3a6ea8" stroke-width="1.200"/><path d="M6.500 4v3.200h2.600" stroke="#222" stroke-width=".9" fill="none"/></svg>
<span class="t" style="left:619.00px;top:594.76px;font-size:9.4px;line-height:11.28px;height:11.28px;color:#000;letter-spacing:-0.564px;">=00:12:53</span>
<svg style="left:784px;top:615px" width="9" height="9"><g fill="#b8b8b8"><rect x="6" y="0" width="1.600" height="1.600"/><rect x="3" y="3" width="1.600" height="1.600"/><rect x="6" y="3" width="1.600" height="1.600"/><rect x="0" y="6" width="1.600" height="1.600"/><rect x="3" y="6" width="1.600" height="1.600"/><rect x="6" y="6" width="1.600" height="1.600"/></g></svg>
</body></html>
